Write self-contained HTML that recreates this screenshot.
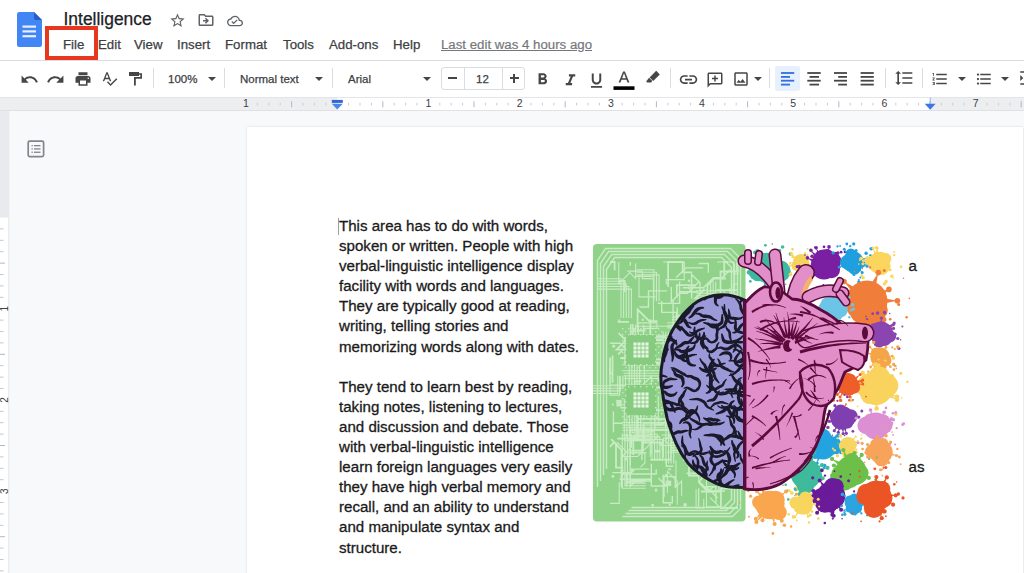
<!DOCTYPE html>
<html><head><meta charset="utf-8">
<style>
*{margin:0;padding:0;box-sizing:border-box}
html,body{width:1024px;height:573px;overflow:hidden;background:#f8f9fa;font-family:"Liberation Sans",sans-serif}
.abs{position:absolute}
#header{position:absolute;left:0;top:0;width:1024px;height:97px;background:#fff}
#sep1{position:absolute;left:0;top:60px;width:1024px;height:1px;background:#dadce0}
.title{position:absolute;left:63.5px;top:8.5px;font-size:17.45px;color:#202124;white-space:nowrap;-webkit-text-stroke:0.25px #202124}
.menu{position:absolute;top:37px;font-size:13.25px;color:#3c4043;white-space:nowrap;-webkit-text-stroke:0.25px #3c4043}
.lastedit{position:absolute;left:441px;top:37px;font-size:13.25px;color:#74777c;-webkit-text-stroke:0.2px #74777c;text-decoration:underline;white-space:nowrap}
.redbox{position:absolute;left:45px;top:26px;width:53px;height:34px;border:4px solid #e8371f}
.tb{position:absolute;top:72.5px;font-size:11.5px;color:#3c4043;white-space:nowrap;-webkit-text-stroke:0.25px #3c4043}
.vsep{position:absolute;top:68px;width:1px;height:20px;background:#dadce0}
#ruler{position:absolute;left:0;top:97px;width:1024px;height:14px;background:#e8eaed;border-top:1px solid #dadce0;border-bottom:1px solid #dadce0}
#page{position:absolute;left:247px;top:127px;width:776px;height:460px;background:#fff;box-shadow:0 0 2px rgba(0,0,0,.15)}
.body{position:absolute;left:339px;top:216px;font-size:15.1px;line-height:20.1px;color:#1a1a1a;white-space:nowrap;-webkit-text-stroke:0.3px #1a1a1a}
</style></head><body>
<div id="header"></div>
<div id="sep1"></div>

<!-- doc icon -->
<svg class="abs" style="left:17px;top:12px" width="25" height="35" viewBox="0 0 25 35">
<path d="M2.3 0H17L25 8V32.7Q25 35 22.7 35H2.3Q0 35 0 32.7V2.3Q0 0 2.3 0Z" fill="#4285f4"/>
<path d="M17 0L25 8H19Q17 8 17 6Z" fill="#2a5bc8"/>
<rect x="5.5" y="13.5" width="13.5" height="2.2" fill="#e8f0fe"/>
<rect x="5.5" y="18.3" width="13.5" height="2.2" fill="#e8f0fe"/>
<rect x="5.5" y="23.1" width="13.5" height="2.2" fill="#e8f0fe"/>
</svg>

<div class="title">Intelligence</div>
<div class="menu" style="left:63px">File</div>
<div class="menu" style="left:98px">Edit</div>
<div class="menu" style="left:134px">View</div>
<div class="menu" style="left:177px">Insert</div>
<div class="menu" style="left:225px">Format</div>
<div class="menu" style="left:283px">Tools</div>
<div class="menu" style="left:329px">Add-ons</div>
<div class="menu" style="left:393px">Help</div>
<div class="lastedit">Last edit was 4 hours ago</div>
<div class="redbox"></div>

<!-- title icons -->
<svg class="abs" style="left:169px;top:11.5px" width="17" height="17" viewBox="0 0 24 24"><path fill="#5f6368" d="M22 9.24l-7.19-.62L12 2 9.19 8.63 2 9.24l5.46 4.73L5.82 21 12 17.27 18.18 21l-1.63-7.03L22 9.24zM12 15.4l-3.76 2.27 1-4.28-3.32-2.88 4.38-.38L12 6.1l1.71 4.04 4.38.38-3.32 2.88 1 4.28L12 15.4z"/></svg>
<svg class="abs" style="left:197px;top:11px" width="18" height="18" viewBox="0 0 24 24"><path fill="#5f6368" d="M20 6h-8l-2-2H4c-1.1 0-1.99.9-1.99 2L2 18c0 1.1.9 2 2 2h16c1.1 0 2-.9 2-2V8c0-1.1-.9-2-2-2zm0 12H4V6h5.17l2 2H20v10zm-7.84-6H8v2h4.16l-1.59 1.59L11.99 17 16 13.01 11.99 9l-1.41 1.41L12.16 12z"/></svg>
<svg class="abs" style="left:227px;top:11.5px" width="16" height="18" viewBox="0 0 24 24"><path fill="#5f6368" d="M19.35 10.04C18.67 6.59 15.64 4 12 4 9.11 4 6.6 5.640 5.35 8.04 2.34 8.36 0 10.91 0 14c0 3.31 2.69 6 6 6h13c2.76 0 5-2.24 5-5 0-2.64-2.05-4.78-4.65-4.96zM19 18H6c-2.21 0-4-1.790-4-4 0-2.05 1.53-3.76 3.56-3.970l1.07-.11.5-.95C8.080 7.14 9.94 6 12 6c2.62 0 4.88 1.86 5.39 4.43l.3 1.5 1.53.11c1.56.1 2.78 1.41 2.78 2.96 0 1.65-1.35 3-3 3zm-9-3.82l-2.09-2.09L6.5 13.5 10 17l6.01-6.01-1.42-1.41z"/></svg>

<!-- toolbar -->
<svg class="abs" style="left:20px;top:70px" width="19" height="19" viewBox="0 0 24 24"><path fill="#444746" d="M12.5 8c-2.65 0-5.05.99-6.9 2.6L2 7v9h9l-3.62-3.62c1.39-1.16 3.16-1.88 5.120-1.88 3.54 0 6.55 2.31 7.6 5.5l2.37-.78C21.08 11.03 17.15 8 12.5 8z"/></svg>
<svg class="abs" style="left:46px;top:70px" width="19" height="19" viewBox="0 0 24 24"><path fill="#444746" d="M18.4 10.6C16.55 8.99 14.15 8 11.5 8c-4.65 0-8.58 3.03-9.96 7.22L3.9 16c1.05-3.19 4.05-5.5 7.6-5.5 1.95 0 3.73.72 5.12 1.88L13 16h9V7l-3.6 3.6z"/></svg>
<svg class="abs" style="left:73.5px;top:70px" width="18" height="18" viewBox="0 0 24 24"><path fill="#444746" d="M19 8H5c-1.66 0-3 1.34-3 3v6h4v4h12v-4h4v-6c0-1.66-1.340-3-3-3zm-3 11H8v-5h8v5zm3-7c-.55 0-1-.45-1-1s.45-1 1-1 1 .45 1 1-.45 1-1 1zm-1-9H6v4h12V3z"/></svg>
<svg class="abs" style="left:101px;top:70px" width="17" height="17" viewBox="0 0 24 24"><path fill="#444746" d="M12.45 16h2.09L9.43 3H7.57L2.46 16h2.09l1.12-3h5.64l1.14 3zm-6.02-5L8.5 5.48 10.57 11H6.43zm15.16.59l-8.09 8.09L9.83 16l-1.41 1.41 5.09 5.09L23 13l-1.41-1.41z"/></svg>
<svg class="abs" style="left:129px;top:72px" width="14" height="14" viewBox="0 0 14 14"><path fill="#444746" d="M0 0h10v1.2h3v5.5H6.8v6.9H5V5h6.3V2.8H10V4H0z"/></svg>
<div class="vsep" style="left:153px"></div>
<div class="tb" style="left:168px">100%</div>
<svg class="abs" style="left:208px;top:77px" width="8" height="4" viewBox="0 0 8 4"><path fill="#444746" d="M0 0h8L4 4z"/></svg>
<div class="vsep" style="left:224px"></div>
<div class="tb" style="left:240px">Normal text</div>
<svg class="abs" style="left:315px;top:77px" width="8" height="4" viewBox="0 0 8 4"><path fill="#444746" d="M0 0h8L4 4z"/></svg>
<div class="vsep" style="left:332px"></div>
<div class="tb" style="left:348px">Arial</div>
<svg class="abs" style="left:423px;top:77px" width="8" height="4" viewBox="0 0 8 4"><path fill="#444746" d="M0 0h8L4 4z"/></svg>
<div class="abs" style="left:441px;top:67px;width:84px;height:23px;border:1px solid #dadce0;border-radius:3px"></div>
<div class="abs" style="left:464px;top:68px;width:1px;height:21px;background:#dadce0"></div>
<div class="abs" style="left:502px;top:68px;width:1px;height:21px;background:#dadce0"></div>
<div class="abs" style="left:448px;top:77.3px;width:9.4px;height:2px;background:#444746"></div>
<div class="tb" style="left:476px;top:73px">12</div>
<div class="abs" style="left:509.5px;top:77.3px;width:9.4px;height:2px;background:#444746"></div>
<div class="abs" style="left:513.2px;top:73.6px;width:2px;height:9.4px;background:#444746"></div>
<svg class="abs" style="left:533px;top:70px" width="19" height="19" viewBox="0 0 24 24"><path fill="#444746" d="M15.6 10.79c.97-.67 1.65-1.77 1.65-2.79 0-2.26-1.75-4-4-4H7v14h7.04c2.09 0 3.71-1.7 3.71-3.79 0-1.52-.86-2.82-2.15-3.42zM10 6.5h3c.83 0 1.5.67 1.5 1.5s-.67 1.5-1.5 1.5h-3v-3zm3.5 9H10v-3h3.5c.83 0 1.5.67 1.5 1.5s-.67 1.5-1.5 1.5z"/></svg>
<svg class="abs" style="left:561px;top:70.5px" width="19" height="19" viewBox="0 0 24 24"><path fill="#444746" d="M10 4v3h2.21l-3.42 8H6v3h8v-3h-2.21l3.42-8H18V4z"/></svg>
<svg class="abs" style="left:587px;top:70.8px" width="19" height="19" viewBox="0 0 24 24"><path fill="#444746" d="M12 17c3.31 0 6-2.69 6-6V3h-2.5v8c0 1.93-1.57 3.5-3.5 3.5S8.5 12.93 8.5 11V3H6v8c0 3.31 2.69 6 6 6zm-7 2v2h14v-2H5z"/></svg>
<svg class="abs" style="left:613px;top:68px" width="22" height="23" viewBox="0 0 22 23"><path fill="#444746" d="M10.1 3.6h1.8l4.5 10.9h-1.9l-1-2.7H8.5l-1 2.7H5.6zM9.1 10.3h3.8L11 5.3z"/><rect x="0.5" y="18.3" width="21" height="3.6" fill="#000"/></svg>
<svg class="abs" style="left:645px;top:70px" width="16" height="13" viewBox="0 0 16 13"><path fill="#444746" d="M11.2 0.8l3.6 3.6-6.6 6.6-3.6-3.6zM4 7.8l3.3 3.3-1.2 1.3H2.2L1.2 11.4z"/></svg>
<div class="vsep" style="left:670px"></div>
<svg class="abs" style="left:678px;top:69px" width="21" height="21" viewBox="0 0 24 24"><path fill="#444746" d="M3.9 12c0-1.71 1.39-3.1 3.1-3.1h4V7H7c-2.76 0-5 2.24-5 5s2.24 5 5 5h4v-1.9H7c-1.71 0-3.1-1.39-3.1-3.1zM8 13h8v-2H8v2zm9-6h-4v1.9h4c1.71 0 3.1 1.39 3.1 3.1s-1.39 3.1-3.1 3.1h-4V17h4c2.76 0 5-2.24 5-5s-2.24-5-5-5z"/></svg>
<svg class="abs" style="left:706px;top:70.5px" width="18" height="18" viewBox="0 0 24 24"><path fill="#444746" d="M22 4c0-1.1-.9-2-2-2H4c-1.1 0-1.99.9-1.99 2L2 16c0 1.1.9 2 2 2h14l4 4-.01-18zM20 4v13.17L18.83 16H4V4h16zm-9 10h2v-3h3V9h-3V6h-2v3H8v2h3z" transform="translate(24 0) scale(-1 1)"/></svg>
<svg class="abs" style="left:732px;top:70px" width="18" height="18" viewBox="0 0 24 24"><path fill="#444746" d="M19 5v14H5V5h14m0-2H5c-1.1 0-2 .9-2 2v14c0 1.1.9 2 2 2h14c1.1 0 2-.9 2-2V5c0-1.1-.9-2-2-2zm-4.86 8.86l-3 3.87L9 13.14 6 17h12l-3.86-5.14z"/></svg>
<svg class="abs" style="left:754px;top:77px" width="8" height="4" viewBox="0 0 8 4"><path fill="#444746" d="M0 0h8L4 4z"/></svg>
<div class="vsep" style="left:769px"></div>
<div class="abs" style="left:775px;top:66px;width:25px;height:24.5px;background:#e8f0fe;border-radius:2px"></div>
<svg class="abs" style="left:770px;top:64px" width="110" height="28" viewBox="770 64 110 28">
<rect x="781" y="72.1" width="13.2" height="1.8" fill="#2f6fde"/>
<rect x="807.3" y="72.1" width="13.4" height="1.8" fill="#444746"/>
<rect x="834" y="72.1" width="13" height="1.8" fill="#444746"/>
<rect x="860.6" y="72.1" width="13.2" height="1.8" fill="#444746"/>
<rect x="781" y="76.0" width="9" height="1.8" fill="#2f6fde"/>
<rect x="809.5" y="76.0" width="9.5" height="1.8" fill="#444746"/>
<rect x="838.2" y="76.0" width="8.8" height="1.8" fill="#444746"/>
<rect x="860.6" y="76.0" width="13.2" height="1.8" fill="#444746"/>
<rect x="781" y="79.8" width="13.2" height="1.8" fill="#2f6fde"/>
<rect x="807.3" y="79.8" width="13.4" height="1.8" fill="#444746"/>
<rect x="834" y="79.8" width="13" height="1.8" fill="#444746"/>
<rect x="860.6" y="79.8" width="13.2" height="1.8" fill="#444746"/>
<rect x="781" y="83.7" width="9" height="1.8" fill="#2f6fde"/>
<rect x="809.5" y="83.7" width="9.5" height="1.8" fill="#444746"/>
<rect x="838.2" y="83.7" width="8.8" height="1.8" fill="#444746"/>
<rect x="860.6" y="83.7" width="13.2" height="1.8" fill="#444746"/>
</svg>
<div class="vsep" style="left:885px"></div>
<svg class="abs" style="left:894px;top:68px" width="20" height="20" viewBox="0 0 24 24"><path fill="#444746" d="M6 7h2.5L5 3.5 1.5 7H4v10H1.5L5 20.5 8.5 17H6V7zm4-2v2h12V5H10zm0 14h12v-2H10v2zm0-6h12v-2H10v2z"/></svg>
<div class="vsep" style="left:922px"></div>
<svg class="abs" style="left:931px;top:70px" width="18" height="18" viewBox="0 0 24 24"><path fill="#444746" d="M2 17h2v.5H3v1h1v.5H2v1h3v-4H2v1zm1-9h1V4H2v1h1v3zm-1 3h1.8L2 13.1v.9h3v-1H3.2L5 10.9V10H2v1zm5-6v2h14V5H7zm0 14h14v-2H7v2zm0-6h14v-2H7v2z"/></svg>
<svg class="abs" style="left:958px;top:77px" width="8" height="4" viewBox="0 0 8 4"><path fill="#444746" d="M0 0h8L4 4z"/></svg>
<svg class="abs" style="left:975px;top:70px" width="18" height="18" viewBox="0 0 24 24"><path fill="#444746" d="M4 10.5c-.83 0-1.5.67-1.5 1.5s.67 1.5 1.5 1.5 1.5-.67 1.5-1.5-.67-1.5-1.5-1.5zm0-6c-.83 0-1.5.67-1.5 1.5S3.17 7.5 4 7.5 5.5 6.83 5.5 6 4.830 4.5 4 4.5zm0 12c-.83 0-1.5.68-1.5 1.5s.68 1.5 1.5 1.5 1.5-.68 1.5-1.5-.67-1.5-1.5-1.5zM7 19h14v-2H7v2zm0-6h14v-2H7v2zm0-8v2h14V5H7z"/></svg>
<svg class="abs" style="left:1001px;top:77px" width="8" height="4" viewBox="0 0 8 4"><path fill="#444746" d="M0 0h8L4 4z"/></svg>
<svg class="abs" style="left:1018px;top:69px" width="18" height="18" viewBox="0 0 24 24"><path fill="#444746" d="M3 3h18v2H3zM3 19h18v2H3zM11 7h10v2H11zM11 11h10v2H11zM11 15h10v2H11zM3 8l4 4-4 4z"/></svg>


<svg class="abs" style="left:0;top:96px" width="1024" height="16" viewBox="0 96 1024 16">
<rect x="0" y="97" width="1024" height="14" fill="#eceef0"/>
<rect x="337.2" y="97.5" width="592.8" height="13" fill="#fff"/>
<rect x="0" y="97" width="1024" height="1" fill="#e3e5e8"/>
<rect x="0" y="110" width="1024" height="1" fill="#dfe1e5"/>
<text x="246.0" y="107.3" font-size="10.5" font-family="Liberation Sans" fill="#3c4043" text-anchor="middle" >1</text>
<rect x="256.9" y="102.8" width="1" height="2.6" fill="#c9ccd0"/>
<rect x="268.3" y="102.8" width="1" height="2.6" fill="#c9ccd0"/>
<rect x="279.7" y="102.8" width="1" height="2.6" fill="#c9ccd0"/>
<rect x="291.1" y="101.3" width="1" height="6" fill="#b4b8bd"/>
<rect x="302.5" y="102.8" width="1" height="2.6" fill="#c9ccd0"/>
<rect x="313.9" y="102.8" width="1" height="2.6" fill="#c9ccd0"/>
<rect x="325.3" y="102.8" width="1" height="2.6" fill="#c9ccd0"/>
<rect x="348.1" y="102.8" width="1" height="2.6" fill="#c9ccd0"/>
<rect x="359.5" y="102.8" width="1" height="2.6" fill="#c9ccd0"/>
<rect x="370.9" y="102.8" width="1" height="2.6" fill="#c9ccd0"/>
<rect x="382.3" y="101.3" width="1" height="6" fill="#b4b8bd"/>
<rect x="393.7" y="102.8" width="1" height="2.6" fill="#c9ccd0"/>
<rect x="405.1" y="102.8" width="1" height="2.6" fill="#c9ccd0"/>
<rect x="416.5" y="102.8" width="1" height="2.6" fill="#c9ccd0"/>
<text x="428.4" y="107.3" font-size="10.5" font-family="Liberation Sans" fill="#3c4043" text-anchor="middle" >1</text>
<rect x="439.3" y="102.8" width="1" height="2.6" fill="#c9ccd0"/>
<rect x="450.7" y="102.8" width="1" height="2.6" fill="#c9ccd0"/>
<rect x="462.1" y="102.8" width="1" height="2.6" fill="#c9ccd0"/>
<rect x="473.5" y="101.3" width="1" height="6" fill="#b4b8bd"/>
<rect x="484.9" y="102.8" width="1" height="2.6" fill="#c9ccd0"/>
<rect x="496.3" y="102.8" width="1" height="2.6" fill="#c9ccd0"/>
<rect x="507.7" y="102.8" width="1" height="2.6" fill="#c9ccd0"/>
<text x="519.6" y="107.3" font-size="10.5" font-family="Liberation Sans" fill="#3c4043" text-anchor="middle" >2</text>
<rect x="530.5" y="102.8" width="1" height="2.6" fill="#c9ccd0"/>
<rect x="541.9" y="102.8" width="1" height="2.6" fill="#c9ccd0"/>
<rect x="553.3" y="102.8" width="1" height="2.6" fill="#c9ccd0"/>
<rect x="564.7" y="101.3" width="1" height="6" fill="#b4b8bd"/>
<rect x="576.1" y="102.8" width="1" height="2.6" fill="#c9ccd0"/>
<rect x="587.5" y="102.8" width="1" height="2.6" fill="#c9ccd0"/>
<rect x="598.9" y="102.8" width="1" height="2.6" fill="#c9ccd0"/>
<text x="610.8" y="107.3" font-size="10.5" font-family="Liberation Sans" fill="#3c4043" text-anchor="middle" >3</text>
<rect x="621.7" y="102.8" width="1" height="2.6" fill="#c9ccd0"/>
<rect x="633.1" y="102.8" width="1" height="2.6" fill="#c9ccd0"/>
<rect x="644.5" y="102.8" width="1" height="2.6" fill="#c9ccd0"/>
<rect x="655.9" y="101.3" width="1" height="6" fill="#b4b8bd"/>
<rect x="667.3" y="102.8" width="1" height="2.6" fill="#c9ccd0"/>
<rect x="678.7" y="102.8" width="1" height="2.6" fill="#c9ccd0"/>
<rect x="690.1" y="102.8" width="1" height="2.6" fill="#c9ccd0"/>
<text x="702.0" y="107.3" font-size="10.5" font-family="Liberation Sans" fill="#3c4043" text-anchor="middle" >4</text>
<rect x="712.9" y="102.8" width="1" height="2.6" fill="#c9ccd0"/>
<rect x="724.3" y="102.8" width="1" height="2.6" fill="#c9ccd0"/>
<rect x="735.7" y="102.8" width="1" height="2.6" fill="#c9ccd0"/>
<rect x="747.1" y="101.3" width="1" height="6" fill="#b4b8bd"/>
<rect x="758.5" y="102.8" width="1" height="2.6" fill="#c9ccd0"/>
<rect x="769.9" y="102.8" width="1" height="2.6" fill="#c9ccd0"/>
<rect x="781.3" y="102.8" width="1" height="2.6" fill="#c9ccd0"/>
<text x="793.2" y="107.3" font-size="10.5" font-family="Liberation Sans" fill="#3c4043" text-anchor="middle" >5</text>
<rect x="804.1" y="102.8" width="1" height="2.6" fill="#c9ccd0"/>
<rect x="815.5" y="102.8" width="1" height="2.6" fill="#c9ccd0"/>
<rect x="826.9" y="102.8" width="1" height="2.6" fill="#c9ccd0"/>
<rect x="838.3" y="101.3" width="1" height="6" fill="#b4b8bd"/>
<rect x="849.7" y="102.8" width="1" height="2.6" fill="#c9ccd0"/>
<rect x="861.1" y="102.8" width="1" height="2.6" fill="#c9ccd0"/>
<rect x="872.5" y="102.8" width="1" height="2.6" fill="#c9ccd0"/>
<text x="884.4" y="107.3" font-size="10.5" font-family="Liberation Sans" fill="#3c4043" text-anchor="middle" >6</text>
<rect x="895.3" y="102.8" width="1" height="2.6" fill="#c9ccd0"/>
<rect x="906.7" y="102.8" width="1" height="2.6" fill="#c9ccd0"/>
<rect x="918.1" y="102.8" width="1" height="2.6" fill="#c9ccd0"/>
<rect x="929.5" y="101.3" width="1" height="6" fill="#b4b8bd"/>
<rect x="940.9" y="102.8" width="1" height="2.6" fill="#c9ccd0"/>
<rect x="952.3" y="102.8" width="1" height="2.6" fill="#c9ccd0"/>
<rect x="963.7" y="102.8" width="1" height="2.6" fill="#c9ccd0"/>
<text x="975.6" y="107.3" font-size="10.5" font-family="Liberation Sans" fill="#3c4043" text-anchor="middle" >7</text>
<rect x="986.5" y="102.8" width="1" height="2.6" fill="#c9ccd0"/>
<rect x="997.9" y="102.8" width="1" height="2.6" fill="#c9ccd0"/>
<rect x="1009.3" y="102.8" width="1" height="2.6" fill="#c9ccd0"/>
<rect x="1020.7" y="101.3" width="1" height="6" fill="#b4b8bd"/>
<rect x="929.7" y="97.5" width="1" height="7" fill="#8ab4f8"/>
<path d="M924.7 103.8H935.6L930.2 109.8Z" fill="#3b78e7"/>
<rect x="331.8" y="99.9" width="11" height="3" fill="#3367d6"/>
<path d="M331.8 103.7H342.8L337.3 109.5Z" fill="#4a86e8"/>
</svg>
<svg class="abs" style="left:0;top:111px" width="10" height="462" viewBox="0 111 10 462">
<rect x="0" y="111" width="8.5" height="462" fill="#fff"/>
<rect x="0" y="111" width="8.5" height="106.5" fill="#e8eaed"/>
<rect x="8.3" y="111" width="1" height="462" fill="#e3e5e8"/>
<rect x="0" y="228.4" width="3.5" height="1" fill="#c4c7cb"/>
<rect x="0" y="239.8" width="3.5" height="1" fill="#c4c7cb"/>
<rect x="0" y="251.2" width="3.5" height="1" fill="#c4c7cb"/>
<rect x="0" y="262.6" width="5" height="1" fill="#b4b8bd"/>
<rect x="0" y="274.0" width="3.5" height="1" fill="#c4c7cb"/>
<rect x="0" y="285.4" width="3.5" height="1" fill="#c4c7cb"/>
<rect x="0" y="296.8" width="3.5" height="1" fill="#c4c7cb"/>
<text x="0" y="308.7" font-size="10" font-family="Liberation Sans" fill="#3c4043" text-anchor="middle" transform="rotate(-90 5 308.7) translate(5 3.5)">1</text>
<rect x="0" y="319.6" width="3.5" height="1" fill="#c4c7cb"/>
<rect x="0" y="331.0" width="3.5" height="1" fill="#c4c7cb"/>
<rect x="0" y="342.4" width="3.5" height="1" fill="#c4c7cb"/>
<rect x="0" y="353.8" width="5" height="1" fill="#b4b8bd"/>
<rect x="0" y="365.2" width="3.5" height="1" fill="#c4c7cb"/>
<rect x="0" y="376.6" width="3.5" height="1" fill="#c4c7cb"/>
<rect x="0" y="388.0" width="3.5" height="1" fill="#c4c7cb"/>
<text x="0" y="399.9" font-size="10" font-family="Liberation Sans" fill="#3c4043" text-anchor="middle" transform="rotate(-90 5 399.9) translate(5 3.5)">2</text>
<rect x="0" y="410.8" width="3.5" height="1" fill="#c4c7cb"/>
<rect x="0" y="422.2" width="3.5" height="1" fill="#c4c7cb"/>
<rect x="0" y="433.6" width="3.5" height="1" fill="#c4c7cb"/>
<rect x="0" y="445.0" width="5" height="1" fill="#b4b8bd"/>
<rect x="0" y="456.4" width="3.5" height="1" fill="#c4c7cb"/>
<rect x="0" y="467.8" width="3.5" height="1" fill="#c4c7cb"/>
<rect x="0" y="479.2" width="3.5" height="1" fill="#c4c7cb"/>
<text x="0" y="491.1" font-size="10" font-family="Liberation Sans" fill="#3c4043" text-anchor="middle" transform="rotate(-90 5 491.1) translate(5 3.5)">3</text>
<rect x="0" y="502.0" width="3.5" height="1" fill="#c4c7cb"/>
<rect x="0" y="513.4" width="3.5" height="1" fill="#c4c7cb"/>
<rect x="0" y="524.8" width="3.5" height="1" fill="#c4c7cb"/>
<rect x="0" y="536.2" width="5" height="1" fill="#b4b8bd"/>
<rect x="0" y="547.6" width="3.5" height="1" fill="#c4c7cb"/>
<rect x="0" y="559.0" width="3.5" height="1" fill="#c4c7cb"/>
<rect x="0" y="570.4" width="3.5" height="1" fill="#c4c7cb"/>
</svg>
<svg class="abs" style="left:27px;top:140px" width="18" height="18" viewBox="0 0 18 18">
<rect x="1.2" y="1.2" width="15.4" height="15.4" rx="1.5" fill="none" stroke="#80868b" stroke-width="1.7"/>
<rect x="4.5" y="5" width="1.3" height="1.3" fill="#80868b"/><rect x="7" y="5" width="6.5" height="1.3" fill="#80868b"/>
<rect x="4.5" y="8.3" width="1.3" height="1.3" fill="#80868b"/><rect x="7" y="8.3" width="6.5" height="1.3" fill="#80868b"/>
<rect x="4.5" y="11.6" width="1.3" height="1.3" fill="#80868b"/><rect x="7" y="11.6" width="6.5" height="1.3" fill="#80868b"/>
</svg>
<div id="page"></div>

<!--IMG--><svg class="abs" style="left:585px;top:225px" width="330" height="315" viewBox="585 225 330 315">
<defs><clipPath id="bc"><rect x="593" y="244" width="152.5" height="277.5" rx="4"/></clipPath></defs>
<rect x="593" y="244" width="152.5" height="277.5" rx="4" fill="#90d28a"/>
<g clip-path="url(#bc)" stroke="#c9ecc4" fill="none" stroke-width="1.4">
<path d="M597.5 487.0 V260.5 L605.5 248.5 H730.5 L740.5 258.5 V508.5 L732.5 516.5 H622.5"/>
<path d="M600.5 481.0 V263.5 L608.5 251.5 H727.5 L737.5 261.5 V505.5 L729.5 513.5 H625.5"/>
<path d="M603.5 475.0 V266.5 L611.5 254.5 H724.5 L734.5 264.5 V502.5 L726.5 510.5 H628.5"/>
<path d="M606.5 469.0 V269.5 L614.5 257.5 H721.5 L731.5 267.5 V499.5 L723.5 507.5 H631.5"/>
<path d="M653.9 301.2 V269.7 H636.7" stroke-width="1.1"/>
<path d="M656.5 301.2 V272.3 H636.7" stroke-width="1.1"/>
<path d="M659.1 301.2 V274.9 H636.7" stroke-width="1.1"/>
<path d="M724.2 316.5 V290.7 H696.2" stroke-width="1.1"/>
<path d="M726.8 316.5 V293.3 H696.2" stroke-width="1.1"/>
<path d="M729.4 316.5 V295.9 H696.2" stroke-width="1.1"/>
<path d="M732.0 316.5 V298.5 H696.2" stroke-width="1.1"/>
<path d="M734.6 316.5 V301.1 H696.2" stroke-width="1.1"/>
<path d="M665.9 463.4 V422.5 H622.5" stroke-width="1.1"/>
<path d="M668.5 463.4 V425.1 H622.5" stroke-width="1.1"/>
<path d="M671.1 463.4 V427.7 H622.5" stroke-width="1.1"/>
<path d="M673.7 463.4 V430.3 H622.5" stroke-width="1.1"/>
<path d="M621.0 318.1 V278.7 H597.3" stroke-width="1.1"/>
<path d="M623.6 318.1 V281.3 H597.3" stroke-width="1.1"/>
<path d="M626.2 318.1 V283.9 H597.3" stroke-width="1.1"/>
<path d="M628.8 318.1 V286.5 H597.3" stroke-width="1.1"/>
<path d="M631.4 318.1 V289.1 H597.3" stroke-width="1.1"/>
<path d="M652.0 460.9 V429.1 H633.9" stroke-width="1.1"/>
<path d="M654.6 460.9 V431.7 H633.9" stroke-width="1.1"/>
<path d="M657.2 460.9 V434.3 H633.9" stroke-width="1.1"/>
<path d="M659.8 460.9 V436.9 H633.9" stroke-width="1.1"/>
<path d="M662.4 460.9 V439.5 H633.9" stroke-width="1.1"/>
<path d="M700.5 400.4 V450.4 H670.6" stroke-width="1.1"/>
<path d="M703.1 400.4 V447.8 H670.6" stroke-width="1.1"/>
<path d="M705.7 400.4 V445.2 H670.6" stroke-width="1.1"/>
<path d="M708.3 400.4 V442.6 H670.6" stroke-width="1.1"/>
<path d="M685.3 373.8 V327.3 H707.7" stroke-width="1.1"/>
<path d="M687.9 373.8 V329.9 H707.7" stroke-width="1.1"/>
<path d="M690.5 373.8 V332.5 H707.7" stroke-width="1.1"/>
<path d="M624.8 337.1 V365.0 H666.1" stroke-width="1.1"/>
<path d="M627.4 337.1 V362.4 H666.1" stroke-width="1.1"/>
<path d="M630.0 337.1 V359.8 H666.1" stroke-width="1.1"/>
<path d="M629.2 365.3 V399.3 H648.7" stroke-width="1.1"/>
<path d="M631.8 365.3 V396.7 H648.7" stroke-width="1.1"/>
<path d="M634.4 365.3 V394.1 H648.7" stroke-width="1.1"/>
<path d="M637.0 365.3 V391.5 H648.7" stroke-width="1.1"/>
<path d="M639.6 365.3 V388.9 H648.7" stroke-width="1.1"/>
<path d="M624.3 398.9 V440.7 H649.5" stroke-width="1.1"/>
<path d="M626.9 398.9 V438.1 H649.5" stroke-width="1.1"/>
<path d="M629.5 398.9 V435.5 H649.5" stroke-width="1.1"/>
<path d="M632.1 398.9 V432.9 H649.5" stroke-width="1.1"/>
<path d="M634.7 398.9 V430.3 H649.5" stroke-width="1.1"/>
<path d="M710.6 281.5 V327.9 H667.3" stroke-width="1.1"/>
<path d="M713.2 281.5 V325.3 H667.3" stroke-width="1.1"/>
<path d="M715.8 281.5 V322.7 H667.3" stroke-width="1.1"/>
<path d="M622.3 433.4 V488.3 H645.8" stroke-width="1.1"/>
<path d="M624.9 433.4 V485.7 H645.8" stroke-width="1.1"/>
<path d="M627.5 433.4 V483.1 H645.8" stroke-width="1.1"/>
<path d="M630.1 433.4 V480.5 H645.8" stroke-width="1.1"/>
<path d="M617.7 375.8 V393.5 H584.4" stroke-width="1.1"/>
<path d="M620.3 375.8 V390.9 H584.4" stroke-width="1.1"/>
<path d="M622.9 375.8 V388.3 H584.4" stroke-width="1.1"/>
<path d="M625.5 375.8 V385.7 H584.4" stroke-width="1.1"/>
<path d="M630.5 324.4 V343.1 H673.0" stroke-width="1.1"/>
<path d="M633.1 324.4 V340.5 H673.0" stroke-width="1.1"/>
<path d="M635.7 324.4 V337.9 H673.0" stroke-width="1.1"/>
<path d="M638.3 324.4 V335.3 H673.0" stroke-width="1.1"/>
<path d="M663.2 331.7 V378.5 H623.6" stroke-width="1.1"/>
<path d="M665.8 331.7 V375.9 H623.6" stroke-width="1.1"/>
<path d="M668.4 331.7 V373.3 H623.6" stroke-width="1.1"/>
<path d="M671.0 331.7 V370.7 H623.6" stroke-width="1.1"/>
<path d="M696.9 356.3 V334.5 H677.4" stroke-width="1.1"/>
<path d="M699.5 356.3 V337.1 H677.4" stroke-width="1.1"/>
<path d="M702.1 356.3 V339.7 H677.4" stroke-width="1.1"/>
<path d="M704.7 356.3 V342.3 H677.4" stroke-width="1.1"/>
<path d="M707.3 356.3 V344.9 H677.4" stroke-width="1.1"/>
<path d="M641.4 381.3 L634.8 381.3 L634.8 408.2 L634.8 393.2" stroke-width="1.8"/>
<path d="M712.5 358.5 L727.9 358.5 L706.2 358.5 L706.2 346.4 L692.0 346.4 L692.0 365.1" stroke-width="1.1"/>
<path d="M722.2 413.1 L722.2 431.5 L722.2 407.1 L729.9 414.9" stroke-width="1.1"/>
<path d="M630.2 446.4 L630.2 430.0 L636.8 430.0 L636.8 407.8 L620.3 407.8" stroke-width="1.4"/>
<path d="M677.3 485.4 L677.3 504.7 L677.3 481.4 L667.4 471.4 L667.4 493.0" stroke-width="1.1"/>
<path d="M711.6 378.2 L711.6 392.9 L723.5 381.0 L711.0 381.0" stroke-width="1.4"/>
<path d="M637.8 415.5 L637.8 438.7 L617.4 438.7" stroke-width="1.8"/>
<path d="M706.5 379.6 L706.5 385.7 L716.3 395.5 L716.3 374.1" stroke-width="1.1"/>
<path d="M737.1 268.8 L738.0 273.9 L733.6 273.9 L733.6 262.0 L726.1 262.0 L716.9 262.0" stroke-width="1.1"/>
<path d="M708.2 342.2 L712.7 346.7 L712.7 370.5 L707.7 365.5 L697.5 355.3 L712.6 355.3" stroke-width="1.1"/>
<path d="M682.1 342.2 L682.1 317.0 L673.1 317.0 L673.1 334.5 L673.1 319.8 L673.1 299.2" stroke-width="1.4"/>
<path d="M676.0 460.6 L676.0 486.8 L681.6 481.1 L681.6 495.7" stroke-width="1.1"/>
<path d="M696.6 367.4 L696.6 341.8 L703.1 341.8 L691.4 330.1" stroke-width="1.4"/>
<path d="M723.5 302.0 L738.0 302.0 L738.0 310.7 L738.0 310.7" stroke-width="1.8"/>
<path d="M669.8 435.0 L683.0 435.0 L661.5 435.0 L670.4 435.0 L665.0 440.4 L674.4 449.8" stroke-width="1.1"/>
<path d="M679.6 388.6 L679.6 377.9 L679.6 363.7 L664.2 363.7 L659.5 359.1 L647.4 359.1" stroke-width="1.4"/>
<path d="M737.3 364.8 L737.3 348.1 L715.8 348.1 L708.2 348.1 L721.8 348.1" stroke-width="1.1"/>
<path d="M648.5 385.0 L626.6 385.0 L610.0 385.0 L610.0 368.7" stroke-width="1.1"/>
<path d="M729.8 288.1 L729.8 315.4 L708.1 315.4 L696.8 315.4 L677.7 315.4 L689.5 315.4" stroke-width="1.1"/>
<path d="M622.6 469.0 L622.6 474.0 L634.7 474.0 L656.2 474.0 L656.2 469.2" stroke-width="1.4"/>
<path d="M639.5 307.0 L648.5 307.0 L648.5 290.9 L667.2 290.9 L656.1 290.9" stroke-width="1.4"/>
<path d="M650.3 319.3 L650.3 341.6 L650.3 349.2 L650.3 344.2" stroke-width="1.8"/>
<path d="M724.4 416.3 L714.4 406.3 L708.0 406.3 L697.2 406.3" stroke-width="1.4"/>
<path d="M682.4 416.4 L682.4 401.5 L666.5 401.5 L675.0 401.5" stroke-width="1.1"/>
<path d="M718.6 319.8 L731.5 319.8 L738.0 319.8 L722.9 319.8" stroke-width="1.8"/>
<path d="M637.0 409.5 L652.2 409.5 L657.3 409.5 L640.8 409.5 L640.8 430.5" stroke-width="1.4"/>
<path d="M670.5 376.7 L678.9 368.3 L683.1 364.2" stroke-width="1.8"/>
<path d="M734.0 372.6 L728.6 372.6 L738.0 372.6 L738.0 372.6 L738.0 356.6" stroke-width="1.4"/>
<path d="M661.7 301.1 L661.7 312.4 L672.4 312.4 L676.5 312.4 L676.5 319.3 L686.2 329.0" stroke-width="1.4"/>
<path d="M620.2 358.0 L637.8 358.0 L631.5 364.2" stroke-width="1.8"/>
<path d="M729.9 323.3 L729.9 331.9 L738.0 331.9 L729.0 322.8 L738.0 322.8" stroke-width="1.1"/>
<path d="M693.2 332.4 L684.8 340.8 L684.8 352.0" stroke-width="1.8"/>
<path d="M705.1 422.6 L705.1 438.2 L705.1 430.2 L692.1 430.2 L700.5 438.6 L692.9 431.0" stroke-width="1.1"/>
<path d="M623.4 346.1 L632.1 346.1 L632.1 324.1" stroke-width="1.4"/>
<path d="M660.2 445.5 L677.8 445.5 L677.8 452.5 L677.8 446.3" stroke-width="1.1"/>
<path d="M660.5 420.9 L649.7 410.1 L671.1 410.1 L671.1 396.7 L681.7 407.3 L673.7 407.3" stroke-width="1.1"/>
<path d="M677.8 429.8 L673.8 429.8 L658.2 429.8 L642.9 429.8 L642.9 450.6 L633.5 450.6" stroke-width="1.8"/>
<path d="M636.2 326.2 L658.1 326.2 L673.7 326.2" stroke-width="1.1"/>
<path d="M671.9 319.8 L688.6 319.8 L681.1 319.8 L671.9 328.9" stroke-width="1.1"/>
<path d="M696.1 489.6 L696.1 508.0 L703.7 508.0 L703.7 499.1" stroke-width="1.1"/>
<path d="M651.3 463.7 L651.3 486.0 L666.3 486.0 L658.4 478.1" stroke-width="1.4"/>
<path d="M618.8 267.8 L618.8 262.0 L618.8 283.6 L630.3 272.1" stroke-width="1.1"/>
<path d="M694.2 391.1 L713.3 391.1 L705.8 383.6 L695.4 383.6 L690.5 388.6 L709.3 388.6" stroke-width="1.4"/>
<path d="M623.1 435.5 L630.5 435.5 L635.1 435.5 L635.1 440.5" stroke-width="1.1"/>
<path d="M670.5 459.6 L650.3 459.6 L660.3 459.6" stroke-width="1.8"/>
<path d="M617.5 445.6 L611.1 439.2 L616.0 444.1 L616.0 467.7 L623.3 467.7" stroke-width="1.8"/>
<path d="M650.2 432.3 L650.2 456.9 L650.2 440.6 L641.8 440.6" stroke-width="1.1"/>
<path d="M693.8 380.5 L713.7 380.5 L707.6 374.4 L729.4 374.4 L724.0 379.8" stroke-width="1.4"/>
<path d="M690.2 427.8 L690.2 438.9 L690.2 449.0" stroke-width="1.4"/>
<path d="M637.1 322.9 L657.0 322.9 L657.0 328.4 L643.9 328.4" stroke-width="1.1"/>
<path d="M693.9 286.7 L698.7 281.9 L687.4 293.2 L679.9 293.2 L671.3 301.9 L671.3 287.1" stroke-width="1.4"/>
<path d="M709.6 425.5 L717.6 425.5 L712.8 425.5" stroke-width="1.4"/>
<path d="M616.8 442.1 L627.4 452.7 L632.8 452.7 L646.6 452.7" stroke-width="1.1"/>
<path d="M663.4 457.8 L663.4 438.1 L674.8 438.1 L686.3 438.1" stroke-width="1.1"/>
<path d="M651.4 401.4 L651.4 376.6 L644.4 383.5 L644.4 356.9 L644.4 342.8" stroke-width="1.1"/>
<path d="M663.2 479.2 L663.2 474.8 L663.2 481.0 L663.2 502.7 L672.3 502.7 L672.3 496.0" stroke-width="1.4"/>
<path d="M706.9 456.9 L685.4 456.9 L685.4 438.3 L685.4 412.6" stroke-width="1.8"/>
<path d="M698.7 481.2 L698.7 457.3 L694.0 457.3 L699.2 452.1" stroke-width="1.1"/>
<path d="M643.1 440.3 L627.1 440.3 L641.9 440.3 L641.9 459.9" stroke-width="1.4"/>
<path d="M685.4 366.7 L685.4 375.0 L697.8 375.0 L697.8 399.1 L690.6 391.9" stroke-width="1.4"/>
<path d="M666.3 284.6 L666.3 279.6 L684.3 279.6 L684.3 262.0 L675.0 262.0 L663.1 262.0" stroke-width="1.1"/>
<path d="M735.7 383.0 L735.7 377.4 L738.0 377.4 L738.0 371.2" stroke-width="1.4"/>
<path d="M675.3 488.3 L675.3 476.6 L664.0 476.6 L664.0 497.0" stroke-width="1.4"/>
<path d="M633.3 455.1 L633.3 435.8 L647.3 435.8" stroke-width="1.8"/>
<path d="M698.8 482.4 L707.8 491.5 L722.2 491.5 L710.2 491.5 L700.9 491.5" stroke-width="1.8"/>
<path d="M644.0 419.3 L644.0 409.9 L655.5 409.9 L649.1 409.9 L644.7 409.9" stroke-width="1.1"/>
<path d="M683.5 336.7 L683.5 354.7 L683.5 341.9 L678.2 336.7 L678.2 343.0" stroke-width="1.8"/>
<path d="M630.2 425.7 L630.2 452.9 L644.9 452.9 L644.9 462.9 L640.6 467.2" stroke-width="1.1"/>
<path d="M641.9 276.4 L635.4 276.4 L654.0 276.4" stroke-width="1.1"/>
<path d="M676.1 277.7 L685.9 267.9 L703.3 267.9" stroke-width="1.4"/>
<path d="M622.1 423.3 L613.4 423.3 L613.4 411.2 L613.4 432.3" stroke-width="1.4"/>
<path d="M692.1 429.1 L686.6 429.1 L686.6 418.8 L665.6 418.8 L665.6 427.4" stroke-width="1.4"/>
<path d="M653.4 320.8 L653.4 296.3 L653.4 278.6 L642.3 278.6 L642.3 271.1 L627.2 271.1" stroke-width="1.1"/>
<path d="M655.5 296.9 L639.0 296.9 L639.0 275.2" stroke-width="1.1"/>
<path d="M719.9 449.4 L709.4 460.0 L701.7 460.0 L682.9 460.0" stroke-width="1.8"/>
<path d="M691.7 379.4 L682.4 379.4 L686.7 379.4 L691.6 379.4" stroke-width="1.4"/>
<path d="M726.7 451.2 L717.8 460.2 L707.5 460.2 L707.5 439.0 L716.1 430.4 L716.1 419.5" stroke-width="1.1"/>
<path d="M612.5 382.7 L612.5 355.5 L612.5 373.4 L610.0 373.4 L610.0 373.4 L610.0 357.6" stroke-width="1.8"/>
<path d="M682.7 287.7 L703.4 287.7 L713.4 277.8 L722.1 277.8 L730.1 269.7" stroke-width="1.4"/>
<path d="M628.0 408.1 L641.4 408.1 L649.0 400.5" stroke-width="1.4"/>
<path d="M667.3 452.3 L682.9 452.3 L682.9 441.8 L682.9 420.5" stroke-width="1.1"/>
<path d="M703.1 410.3 L724.3 410.3 L717.4 410.3 L717.4 397.1 L727.7 407.4" stroke-width="1.4"/>
<path d="M636.7 418.9 L649.1 418.9 L665.6 418.9" stroke-width="1.8"/>
<path d="M735.6 334.9 L738.0 334.9 L738.0 334.9" stroke-width="1.8"/>
<path d="M706.4 365.6 L706.4 345.3 L706.4 359.7 L686.3 359.7" stroke-width="1.1"/>
<path d="M710.6 437.4 L723.3 437.4 L736.6 437.4 L736.6 412.0" stroke-width="1.4"/>
<path d="M710.1 357.6 L714.9 352.8 L701.6 352.8 L715.3 352.8 L715.3 333.4 L723.5 341.6" stroke-width="1.1"/>
<path d="M736.8 307.2 L736.8 326.5 L738.0 326.5" stroke-width="1.1"/>
<path d="M621.5 487.2 L621.5 477.8 L621.5 449.9 L613.8 442.3 L610.0 446.8" stroke-width="1.8"/>
<path d="M682.8 317.6 L695.2 317.6 L677.2 317.6 L677.2 307.2" stroke-width="1.4"/>
<path d="M698.6 503.8 L698.6 508.0 L698.6 508.0 L698.6 488.2" stroke-width="1.4"/>
<path d="M631.2 336.6 L649.4 336.6 L664.8 336.6 L657.0 336.6 L665.5 336.6 L646.1 336.6" stroke-width="1.1"/>
<path d="M709.8 347.2 L728.1 347.2 L712.0 347.2 L722.3 336.9" stroke-width="1.4"/>
<path d="M699.3 392.6 L699.3 375.3 L680.4 375.3 L680.4 359.6 L670.8 369.2 L663.9 369.2" stroke-width="1.4"/>
<path d="M671.0 400.4 L678.0 393.4 L693.4 393.4 L677.1 393.4 L670.5 400.0" stroke-width="1.4"/>
<path d="M707.4 297.5 L707.4 285.4 L714.3 278.5 L725.9 278.5" stroke-width="1.8"/>
<path d="M618.6 333.1 L625.9 340.4 L616.6 349.6 L622.9 349.6 L618.2 354.3" stroke-width="1.8"/>
<path d="M681.8 361.9 L677.7 361.9 L692.7 361.9" stroke-width="1.8"/>
<path d="M619.6 385.2 L619.6 376.1 L619.6 395.1 L610.0 395.1 L610.0 369.2 L610.0 394.1" stroke-width="1.1"/>
<path d="M711.1 400.3 L705.6 405.8 L692.7 405.8 L692.7 383.2 L692.7 397.9" stroke-width="1.1"/>
<path d="M697.7 408.1 L697.7 425.3 L705.5 425.3 L693.8 425.3" stroke-width="1.1"/>
<path d="M698.2 291.9 L691.8 291.9 L679.7 291.9" stroke-width="1.8"/>
<path d="M635.6 274.3 L635.6 263.3 L635.6 278.4 L629.6 272.3" stroke-width="1.1"/>
<path d="M619.6 479.3 L636.8 479.3 L651.7 479.3" stroke-width="1.4"/>
<path d="M658.3 403.4 L658.3 396.0 L658.3 422.9 L670.9 422.9 L670.9 449.5 L670.9 460.6" stroke-width="1.1"/>
<path d="M690.4 422.1 L680.5 412.3 L680.5 430.4 L686.5 436.3 L686.5 412.9" stroke-width="1.4"/>
<path d="M698.8 341.1 L698.8 330.2 L689.8 330.2 L700.3 340.6 L700.3 363.8" stroke-width="1.1"/>
<path d="M711.2 439.7 L695.1 439.7 L695.1 413.4 L695.1 390.4" stroke-width="1.4"/>
<path d="M680.1 393.9 L680.1 380.3 L680.1 405.6 L680.1 421.7 L672.6 421.7" stroke-width="1.1"/>
<path d="M713.5 333.3 L713.5 323.4 L705.6 331.3 L705.6 323.6 L705.6 334.3" stroke-width="1.8"/>
<path d="M614.6 270.3 L614.6 262.0 L614.6 268.3 L614.6 262.0 L610.0 262.0 L610.0 262.0" stroke-width="1.8"/>
<path d="M658.6 435.6 L647.3 446.8 L637.6 456.5 L622.1 456.5 L631.5 447.1 L631.5 434.2" stroke-width="1.1"/>
<path d="M737.0 316.5 L725.4 305.0 L729.8 300.6" stroke-width="1.1"/>
<path d="M630.2 447.7 L630.2 465.9 L630.2 450.6 L636.5 450.6" stroke-width="1.4"/>
<path d="M659.8 370.6 L671.0 359.4 L671.0 333.2 L691.0 333.2" stroke-width="1.1"/>
<path d="M710.1 497.7 L719.1 506.7 L706.5 506.7 L706.5 494.7 L706.5 473.6 L706.5 459.1" stroke-width="1.1"/>
<path d="M645.6 363.3 L655.6 363.3 L661.6 363.3 L661.6 370.0" stroke-width="1.8"/>
<path d="M619.2 482.2 L619.2 489.0 L619.2 503.4 L610.0 503.4" stroke-width="1.1"/>
<path d="M661.2 364.2 L667.8 364.2 L667.8 387.6 L655.8 387.6" stroke-width="1.8"/>
<path d="M648.1 350.6 L642.3 344.8 L634.2 336.7" stroke-width="1.1"/>
<path d="M687.7 465.9 L687.7 457.0 L687.7 439.0 L671.2 439.0 L671.2 422.5 L690.4 422.5" stroke-width="1.4"/>
<path d="M623.4 362.7 L631.9 362.7 L631.9 367.6 L631.9 355.1 L620.1 343.3 L610.0 343.3" stroke-width="1.4"/>
<path d="M710.2 475.6 L689.0 475.6 L689.0 458.8" stroke-width="1.8"/>
<path d="M628.9 321.9 L621.9 321.9 L617.6 321.9" stroke-width="1.8"/>
<path d="M705.1 326.3 L705.1 332.8 L695.3 342.5 L709.9 342.5 L709.9 335.6 L709.9 318.6" stroke-width="1.1"/>
<path d="M720.5 298.2 L720.5 271.5 L737.0 271.5 L737.0 262.0 L738.0 272.2 L738.0 272.2" stroke-width="1.8"/>
<path d="M713.4 486.5 L708.9 491.0 L724.9 491.0 L711.3 491.0 L718.9 491.0 L718.9 483.6" stroke-width="1.4"/>
<path d="M709.8 492.5 L698.8 481.4 L707.7 472.4" stroke-width="1.8"/>
<path d="M624.7 291.9 L624.7 281.0 L618.5 281.0" stroke-width="1.8"/>
<path d="M732.8 488.6 L720.9 488.6 L720.9 508.0 L720.9 508.0 L738.0 508.0" stroke-width="1.8"/>
<path d="M699.5 316.5 L711.8 316.5 L711.8 331.8 L701.8 331.8 L723.3 331.8 L730.2 331.8" stroke-width="1.1"/>
<path d="M652.8 342.1 L643.5 342.1 L643.5 324.8 L643.5 339.4 L662.5 339.4" stroke-width="1.4"/>
<path d="M704.7 288.9 L695.2 298.3 L701.8 298.3 L720.5 298.3" stroke-width="1.8"/>
<path d="M624.0 472.6 L612.5 472.6 L630.3 472.6 L630.3 486.2 L635.5 481.0 L652.0 481.0" stroke-width="1.4"/>
<path d="M703.1 334.1 L703.1 353.6 L714.0 353.6 L732.4 353.6 L732.4 371.6 L738.0 371.6" stroke-width="1.8"/>
<path d="M717.6 497.9 L706.5 486.7 L715.9 486.7 L715.9 503.6" stroke-width="1.4"/>
<path d="M677.2 389.2 L681.9 389.2 L681.9 416.0 L681.9 409.6 L697.6 409.6 L692.4 414.9" stroke-width="1.4"/>
<path d="M662.6 450.8 L662.6 442.7 L643.7 442.7 L643.7 422.9 L662.5 422.9" stroke-width="1.8"/>
<path d="M723.9 365.5 L723.9 349.4 L718.8 349.4 L718.8 336.9" stroke-width="1.8"/>
<path d="M692.2 272.4 L682.7 272.4 L682.7 262.0 L668.1 262.0 L668.1 262.0 L668.1 286.9" stroke-width="1.8"/>
<path d="M676.8 297.4 L676.8 289.9 L676.8 285.2 L695.6 285.2" stroke-width="1.8"/>
<path d="M666.3 458.9 L666.3 466.3 L673.3 466.3" stroke-width="1.4"/>
<path d="M691.2 473.4 L706.4 473.4 L686.4 473.4" stroke-width="1.8"/>
<path d="M708.3 272.8 L708.3 263.5 L698.6 263.5" stroke-width="1.4"/>
<path d="M650.3 410.2 L654.8 405.7 L654.8 430.7 L654.8 424.6 L662.2 424.6 L668.5 418.3" stroke-width="1.4"/>
<path d="M679.3 356.9 L679.3 342.7 L687.7 334.3 L687.7 344.0 L677.5 344.0 L671.9 344.0" stroke-width="1.4"/>
<path d="M680.7 455.7 L680.7 447.9 L691.4 447.9 L697.1 442.2 L713.3 442.2 L725.2 454.2" stroke-width="1.8"/>
<path d="M643.0 411.6 L626.8 411.6 L644.1 411.6 L644.1 391.8" stroke-width="1.8"/>
<path d="M630.3 265.7 L630.3 262.0 L630.3 262.0" stroke-width="1.4"/>
<path d="M713.5 448.6 L719.0 448.6 L728.1 448.6 L728.1 471.2" stroke-width="1.8"/>
<path d="M720.5 294.5 L736.8 294.5 L736.8 320.0 L738.0 320.0 L731.2 313.2" stroke-width="1.4"/>
<path d="M626.5 486.5 L626.5 472.8 L626.5 481.6 L643.8 481.6" stroke-width="1.8"/>
<path d="M651.2 419.0 L651.2 401.3 L651.2 427.6 L651.2 454.0" stroke-width="1.1"/>
<path d="M717.1 453.0 L706.1 442.0 L706.1 419.0 L723.6 419.0 L738.0 419.0" stroke-width="1.8"/>
<path d="M716.4 331.2 L728.4 331.2 L738.0 331.2" stroke-width="1.8"/>
<path d="M700.0 367.4 L700.0 362.3 L700.0 370.5 L686.2 370.5" stroke-width="1.1"/>
<path d="M733.4 303.3 L733.4 284.1 L738.0 284.1 L733.9 284.1 L733.9 262.0" stroke-width="1.4"/>
<path d="M700.0 294.8 L700.0 282.8 L691.6 274.4 L691.6 298.6" stroke-width="1.4"/>
<path d="M716.7 290.2 L724.4 290.2 L733.9 290.2 L738.0 290.2 L738.0 290.2" stroke-width="1.8"/>
<path d="M657.7 303.4 L679.6 303.4 L679.6 281.4" stroke-width="1.4"/>
<path d="M735.5 400.7 L735.5 416.4 L735.5 420.6" stroke-width="1.1"/>
<path d="M693.2 416.4 L693.2 409.1 L712.3 409.1 L691.0 409.1 L691.0 402.6" stroke-width="1.8"/>
<path d="M716.6 444.6 L726.4 444.6 L738.0 444.6 L733.3 444.6 L733.3 470.3" stroke-width="1.1"/>
<path d="M674.3 384.9 L665.5 376.1 L665.5 368.7 L665.5 374.9" stroke-width="1.1"/>
<path d="M719.2 379.9 L719.2 375.2 L719.2 382.6 L705.9 382.6" stroke-width="1.4"/>
<path d="M724.2 277.4 L724.2 262.0 L728.3 262.0" stroke-width="1.8"/>
<path d="M697.1 401.6 L710.4 401.6 L710.4 374.2 L701.4 383.2 L701.4 400.7 L701.4 416.3" stroke-width="1.8"/>
<path d="M629.2 474.9 L635.0 469.1 L649.0 469.1" stroke-width="1.4"/>
<path d="M657.4 321.1 L649.3 321.1 L643.6 315.5 L637.6 309.4 L637.6 330.5 L645.7 330.5" stroke-width="1.8"/>
<path d="M699.8 443.0 L709.2 433.5 L700.8 425.1" stroke-width="1.4"/>
</g>
<g clip-path="url(#bc)" fill="#c6eac1">
<circle cx="716.6" cy="358.4" r="2.2"/>
<circle cx="682.9" cy="452.6" r="1.9"/>
<circle cx="619.3" cy="320.3" r="1.0"/>
<circle cx="686.9" cy="314.4" r="1.8"/>
<rect x="665.7" y="480.6" width="5.5" height="5.4"/>
<circle cx="727.6" cy="476.2" r="1.9"/>
<rect x="655.0" y="449.9" width="5.3" height="2.7"/>
<rect x="659.0" y="443.4" width="4.9" height="2.3"/>
<rect x="688.1" y="286.5" width="5.2" height="2.7"/>
<circle cx="728.6" cy="428.1" r="1.2"/>
<rect x="668.3" y="468.2" width="2.5" height="2.1"/>
<circle cx="625.9" cy="459.0" r="1.7"/>
<circle cx="648.5" cy="431.0" r="1.2"/>
<rect x="722.3" y="394.5" width="5.2" height="7.7"/>
<circle cx="613.7" cy="346.2" r="1.6"/>
<circle cx="722.0" cy="458.9" r="1.2"/>
<circle cx="715.1" cy="429.2" r="1.6"/>
<circle cx="631.9" cy="469.9" r="2.0"/>
<circle cx="689.0" cy="280.7" r="1.3"/>
<circle cx="724.6" cy="406.9" r="1.2"/>
<rect x="657.5" y="377.1" width="3.6" height="4.1"/>
<circle cx="612.8" cy="404.5" r="1.0"/>
<circle cx="669.9" cy="504.7" r="1.2"/>
<circle cx="696.5" cy="329.1" r="1.6"/>
<rect x="645.0" y="402.0" width="5.8" height="8.0"/>
<rect x="616.3" y="399.9" width="5.5" height="6.6"/>
<circle cx="691.8" cy="418.1" r="1.3"/>
<rect x="712.2" y="476.7" width="4.7" height="3.8"/>
<rect x="708.2" y="443.9" width="4.5" height="4.1"/>
<circle cx="681.4" cy="361.9" r="1.4"/>
<circle cx="652.7" cy="505.2" r="1.4"/>
<circle cx="642.7" cy="319.8" r="1.2"/>
<circle cx="612.9" cy="476.3" r="1.5"/>
<circle cx="683.7" cy="336.4" r="1.1"/>
<rect x="650.0" y="337.9" width="4.2" height="7.6"/>
<rect x="654.9" y="488.6" width="2.3" height="3.1"/>
<circle cx="685.1" cy="504.9" r="1.9"/>
<circle cx="666.0" cy="475.6" r="1.6"/>
<circle cx="725.3" cy="329.9" r="1.0"/>
<rect x="632.7" y="327.9" width="2.9" height="4.4"/>
</g>
<rect x="626" y="335" width="30" height="30" fill="#86cb80"/>
<rect x="633" y="342" width="16" height="16" fill="#e6f6e3"/>
<line x1="633" y1="342" x2="649" y2="342" stroke="#86cb80" stroke-width="0.9"/>
<line x1="633" y1="342" x2="633" y2="358" stroke="#86cb80" stroke-width="0.9"/>
<line x1="633" y1="346" x2="649" y2="346" stroke="#86cb80" stroke-width="0.9"/>
<line x1="637" y1="342" x2="637" y2="358" stroke="#86cb80" stroke-width="0.9"/>
<line x1="633" y1="350" x2="649" y2="350" stroke="#86cb80" stroke-width="0.9"/>
<line x1="641" y1="342" x2="641" y2="358" stroke="#86cb80" stroke-width="0.9"/>
<line x1="633" y1="354" x2="649" y2="354" stroke="#86cb80" stroke-width="0.9"/>
<line x1="645" y1="342" x2="645" y2="358" stroke="#86cb80" stroke-width="0.9"/>
<line x1="633" y1="358" x2="649" y2="358" stroke="#86cb80" stroke-width="0.9"/>
<line x1="649" y1="342" x2="649" y2="358" stroke="#86cb80" stroke-width="0.9"/>
<rect x="626" y="385" width="30" height="30" fill="#86cb80"/>
<rect x="633" y="392" width="16" height="16" fill="#e6f6e3"/>
<line x1="633" y1="392" x2="649" y2="392" stroke="#86cb80" stroke-width="0.9"/>
<line x1="633" y1="392" x2="633" y2="408" stroke="#86cb80" stroke-width="0.9"/>
<line x1="633" y1="396" x2="649" y2="396" stroke="#86cb80" stroke-width="0.9"/>
<line x1="637" y1="392" x2="637" y2="408" stroke="#86cb80" stroke-width="0.9"/>
<line x1="633" y1="400" x2="649" y2="400" stroke="#86cb80" stroke-width="0.9"/>
<line x1="641" y1="392" x2="641" y2="408" stroke="#86cb80" stroke-width="0.9"/>
<line x1="633" y1="404" x2="649" y2="404" stroke="#86cb80" stroke-width="0.9"/>
<line x1="645" y1="392" x2="645" y2="408" stroke="#86cb80" stroke-width="0.9"/>
<line x1="633" y1="408" x2="649" y2="408" stroke="#86cb80" stroke-width="0.9"/>
<line x1="649" y1="392" x2="649" y2="408" stroke="#86cb80" stroke-width="0.9"/>
<g fill="#c6eac1">
<rect x="622" y="328" width="1.4" height="1.4"/>
<rect x="622" y="334" width="1.4" height="1.4"/>
<rect x="622" y="340" width="1.4" height="1.4"/>
<rect x="622" y="346" width="1.4" height="1.4"/>
<rect x="622" y="352" width="1.4" height="1.4"/>
<rect x="622" y="358" width="1.4" height="1.4"/>
<rect x="622" y="364" width="1.4" height="1.4"/>
<rect x="622" y="370" width="1.4" height="1.4"/>
<rect x="625" y="331" width="1.4" height="1.4"/>
<rect x="625" y="337" width="1.4" height="1.4"/>
<rect x="625" y="343" width="1.4" height="1.4"/>
<rect x="625" y="349" width="1.4" height="1.4"/>
<rect x="625" y="355" width="1.4" height="1.4"/>
<rect x="625" y="361" width="1.4" height="1.4"/>
<rect x="625" y="367" width="1.4" height="1.4"/>
<rect x="628" y="328" width="1.4" height="1.4"/>
<rect x="628" y="334" width="1.4" height="1.4"/>
<rect x="628" y="364" width="1.4" height="1.4"/>
<rect x="628" y="370" width="1.4" height="1.4"/>
<rect x="631" y="331" width="1.4" height="1.4"/>
<rect x="631" y="367" width="1.4" height="1.4"/>
<rect x="634" y="328" width="1.4" height="1.4"/>
<rect x="634" y="334" width="1.4" height="1.4"/>
<rect x="634" y="364" width="1.4" height="1.4"/>
<rect x="634" y="370" width="1.4" height="1.4"/>
<rect x="637" y="331" width="1.4" height="1.4"/>
<rect x="637" y="367" width="1.4" height="1.4"/>
<rect x="640" y="328" width="1.4" height="1.4"/>
<rect x="640" y="334" width="1.4" height="1.4"/>
<rect x="640" y="364" width="1.4" height="1.4"/>
<rect x="640" y="370" width="1.4" height="1.4"/>
<rect x="643" y="331" width="1.4" height="1.4"/>
<rect x="643" y="367" width="1.4" height="1.4"/>
<rect x="646" y="328" width="1.4" height="1.4"/>
<rect x="646" y="334" width="1.4" height="1.4"/>
<rect x="646" y="364" width="1.4" height="1.4"/>
<rect x="646" y="370" width="1.4" height="1.4"/>
<rect x="649" y="331" width="1.4" height="1.4"/>
<rect x="649" y="367" width="1.4" height="1.4"/>
<rect x="652" y="328" width="1.4" height="1.4"/>
<rect x="652" y="334" width="1.4" height="1.4"/>
<rect x="652" y="364" width="1.4" height="1.4"/>
<rect x="652" y="370" width="1.4" height="1.4"/>
<rect x="655" y="331" width="1.4" height="1.4"/>
<rect x="655" y="337" width="1.4" height="1.4"/>
<rect x="655" y="343" width="1.4" height="1.4"/>
<rect x="655" y="349" width="1.4" height="1.4"/>
<rect x="655" y="355" width="1.4" height="1.4"/>
<rect x="655" y="361" width="1.4" height="1.4"/>
<rect x="655" y="367" width="1.4" height="1.4"/>
<rect x="658" y="328" width="1.4" height="1.4"/>
<rect x="658" y="334" width="1.4" height="1.4"/>
<rect x="658" y="340" width="1.4" height="1.4"/>
<rect x="658" y="346" width="1.4" height="1.4"/>
<rect x="658" y="352" width="1.4" height="1.4"/>
<rect x="658" y="358" width="1.4" height="1.4"/>
<rect x="658" y="364" width="1.4" height="1.4"/>
<rect x="658" y="370" width="1.4" height="1.4"/>
<rect x="661" y="331" width="1.4" height="1.4"/>
<rect x="661" y="337" width="1.4" height="1.4"/>
<rect x="661" y="343" width="1.4" height="1.4"/>
<rect x="661" y="349" width="1.4" height="1.4"/>
<rect x="661" y="355" width="1.4" height="1.4"/>
<rect x="661" y="361" width="1.4" height="1.4"/>
<rect x="661" y="367" width="1.4" height="1.4"/>
<rect x="622" y="380" width="1.4" height="1.4"/>
<rect x="622" y="386" width="1.4" height="1.4"/>
<rect x="622" y="392" width="1.4" height="1.4"/>
<rect x="622" y="398" width="1.4" height="1.4"/>
<rect x="622" y="404" width="1.4" height="1.4"/>
<rect x="622" y="410" width="1.4" height="1.4"/>
<rect x="622" y="416" width="1.4" height="1.4"/>
<rect x="622" y="422" width="1.4" height="1.4"/>
<rect x="625" y="383" width="1.4" height="1.4"/>
<rect x="625" y="389" width="1.4" height="1.4"/>
<rect x="625" y="395" width="1.4" height="1.4"/>
<rect x="625" y="401" width="1.4" height="1.4"/>
<rect x="625" y="407" width="1.4" height="1.4"/>
<rect x="625" y="413" width="1.4" height="1.4"/>
<rect x="625" y="419" width="1.4" height="1.4"/>
<rect x="628" y="380" width="1.4" height="1.4"/>
<rect x="628" y="386" width="1.4" height="1.4"/>
<rect x="628" y="416" width="1.4" height="1.4"/>
<rect x="628" y="422" width="1.4" height="1.4"/>
<rect x="631" y="383" width="1.4" height="1.4"/>
<rect x="631" y="419" width="1.4" height="1.4"/>
<rect x="634" y="380" width="1.4" height="1.4"/>
<rect x="634" y="386" width="1.4" height="1.4"/>
<rect x="634" y="416" width="1.4" height="1.4"/>
<rect x="634" y="422" width="1.4" height="1.4"/>
<rect x="637" y="383" width="1.4" height="1.4"/>
<rect x="637" y="419" width="1.4" height="1.4"/>
<rect x="640" y="380" width="1.4" height="1.4"/>
<rect x="640" y="386" width="1.4" height="1.4"/>
<rect x="640" y="416" width="1.4" height="1.4"/>
<rect x="640" y="422" width="1.4" height="1.4"/>
<rect x="643" y="383" width="1.4" height="1.4"/>
<rect x="643" y="419" width="1.4" height="1.4"/>
<rect x="646" y="380" width="1.4" height="1.4"/>
<rect x="646" y="386" width="1.4" height="1.4"/>
<rect x="646" y="416" width="1.4" height="1.4"/>
<rect x="646" y="422" width="1.4" height="1.4"/>
<rect x="649" y="383" width="1.4" height="1.4"/>
<rect x="649" y="419" width="1.4" height="1.4"/>
<rect x="652" y="380" width="1.4" height="1.4"/>
<rect x="652" y="386" width="1.4" height="1.4"/>
<rect x="652" y="416" width="1.4" height="1.4"/>
<rect x="652" y="422" width="1.4" height="1.4"/>
<rect x="655" y="383" width="1.4" height="1.4"/>
<rect x="655" y="389" width="1.4" height="1.4"/>
<rect x="655" y="395" width="1.4" height="1.4"/>
<rect x="655" y="401" width="1.4" height="1.4"/>
<rect x="655" y="407" width="1.4" height="1.4"/>
<rect x="655" y="413" width="1.4" height="1.4"/>
<rect x="655" y="419" width="1.4" height="1.4"/>
<rect x="658" y="380" width="1.4" height="1.4"/>
<rect x="658" y="386" width="1.4" height="1.4"/>
<rect x="658" y="392" width="1.4" height="1.4"/>
<rect x="658" y="398" width="1.4" height="1.4"/>
<rect x="658" y="404" width="1.4" height="1.4"/>
<rect x="658" y="410" width="1.4" height="1.4"/>
<rect x="658" y="416" width="1.4" height="1.4"/>
<rect x="658" y="422" width="1.4" height="1.4"/>
<rect x="661" y="383" width="1.4" height="1.4"/>
<rect x="661" y="389" width="1.4" height="1.4"/>
<rect x="661" y="395" width="1.4" height="1.4"/>
<rect x="661" y="401" width="1.4" height="1.4"/>
<rect x="661" y="407" width="1.4" height="1.4"/>
<rect x="661" y="413" width="1.4" height="1.4"/>
<rect x="661" y="419" width="1.4" height="1.4"/>
</g>
<g fill="#3fb8a0">
<circle cx="768" cy="268" r="15.2"/>
<circle cx="758.7" cy="270.9" r="10.4"/>
<circle cx="758.8" cy="270.0" r="8.9"/>
<circle cx="771.8" cy="276.7" r="9.1"/>
<circle cx="769.8" cy="261.4" r="7.6"/>
<circle cx="777.5" cy="274.1" r="9.3"/>
<circle cx="780.0" cy="271.2" r="10.6"/>
<circle cx="762.3" cy="259.7" r="7.0"/>
<path d="M778.4 271.3 L788.2 269.9 L778.9 266.7Z"/>
<circle cx="788.2" cy="269.9" r="2.1"/>
<path d="M777.1 274.1 L784.9 274.6 L778.8 269.8Z"/>
<circle cx="784.9" cy="274.6" r="2.1"/>
<path d="M766.2 278.8 L768.9 285.1 L770.9 278.6Z"/>
<circle cx="768.9" cy="285.1" r="2.1"/>
<path d="M757.0 268.1 L748.8 272.4 L758.1 272.7Z"/>
<circle cx="748.8" cy="272.4" r="2.1"/>
<path d="M775.8 260.3 L779.1 251.1 L771.9 257.8Z"/>
<circle cx="779.1" cy="251.1" r="2.1"/>
<path d="M763.0 258.3 L755.2 252.5 L759.4 261.2Z"/>
<circle cx="755.2" cy="252.5" r="2.1"/>
<path d="M764.4 257.7 L757.6 251.1 L760.4 260.1Z"/>
<circle cx="757.6" cy="251.1" r="2.1"/>
<path d="M763.8 278.1 L763.9 290.8 L768.4 279.0Z"/>
<circle cx="763.9" cy="290.8" r="2.1"/>
<circle cx="798.4" cy="267.2" r="1.5"/>
<circle cx="758.5" cy="289.9" r="1.0"/>
<circle cx="794.8" cy="280.7" r="1.1"/>
<circle cx="782.6" cy="247.0" r="1.8"/>
<circle cx="780.3" cy="250.5" r="0.9"/>
<circle cx="790.4" cy="253.9" r="1.8"/>
<circle cx="750.3" cy="281.3" r="1.4"/>
<circle cx="772.3" cy="244.1" r="0.8"/>
<circle cx="752.3" cy="295.6" r="1.5"/>
<circle cx="785.7" cy="284.2" r="0.8"/>
<circle cx="795.9" cy="279.0" r="0.9"/>
<circle cx="743.6" cy="258.5" r="0.9"/>
<circle cx="765.4" cy="245.3" r="1.4"/>
</g>
<g fill="#f6d35a">
<circle cx="801" cy="262" r="8.0"/>
<circle cx="804.5" cy="265.1" r="3.8"/>
<circle cx="800.2" cy="268.5" r="5.2"/>
<circle cx="798.9" cy="267.9" r="3.8"/>
<circle cx="796.2" cy="265.8" r="4.8"/>
<circle cx="806.3" cy="265.9" r="3.8"/>
<circle cx="800.7" cy="267.9" r="4.1"/>
<circle cx="800.0" cy="265.4" r="3.5"/>
<path d="M796.7 258.1 L792.5 257.1 L795.5 260.2Z"/>
<circle cx="792.5" cy="257.1" r="1.1"/>
<path d="M797.2 257.6 L792.8 255.9 L795.7 259.6Z"/>
<circle cx="792.8" cy="255.9" r="1.1"/>
<path d="M795.2 262.5 L789.4 265.5 L795.9 264.8Z"/>
<circle cx="789.4" cy="265.5" r="1.1"/>
<path d="M795.2 261.4 L790.2 263.1 L795.5 263.8Z"/>
<circle cx="790.2" cy="263.1" r="1.1"/>
<path d="M805.7 258.6 L807.4 254.9 L803.9 257.0Z"/>
<circle cx="807.4" cy="254.9" r="1.1"/>
<path d="M803.2 267.4 L807.8 271.9 L805.2 266.0Z"/>
<circle cx="807.8" cy="271.9" r="1.1"/>
<path d="M804.5 257.3 L805.1 253.1 L802.2 256.3Z"/>
<circle cx="805.1" cy="253.1" r="1.1"/>
<path d="M802.0 267.7 L805.2 272.6 L804.2 266.8Z"/>
<circle cx="805.2" cy="272.6" r="1.1"/>
<circle cx="812.6" cy="257.4" r="1.7"/>
<circle cx="811.9" cy="252.0" r="1.2"/>
<circle cx="810.2" cy="269.0" r="1.8"/>
<circle cx="802.1" cy="277.3" r="1.0"/>
<circle cx="807.6" cy="248.8" r="1.0"/>
<circle cx="808.0" cy="275.8" r="0.8"/>
<circle cx="803.0" cy="276.4" r="1.6"/>
<circle cx="791.3" cy="253.5" r="1.7"/>
<circle cx="804.3" cy="273.0" r="1.0"/>
<circle cx="790.0" cy="265.9" r="0.9"/>
<circle cx="791.1" cy="272.7" r="0.8"/>
<circle cx="790.4" cy="274.5" r="1.8"/>
<circle cx="792.6" cy="249.3" r="1.3"/>
</g>
<g fill="#7a1fa2">
<circle cx="824" cy="266" r="13.4"/>
<circle cx="827.6" cy="270.4" r="5.6"/>
<circle cx="831.9" cy="261.0" r="9.3"/>
<circle cx="832.9" cy="267.2" r="7.4"/>
<circle cx="823.1" cy="258.8" r="9.4"/>
<circle cx="831.6" cy="269.9" r="8.4"/>
<circle cx="831.8" cy="260.4" r="8.3"/>
<circle cx="826.8" cy="255.8" r="6.9"/>
<path d="M822.1 256.5 L816.1 247.7 L818.4 258.1Z"/>
<circle cx="816.1" cy="247.7" r="1.8"/>
<path d="M832.0 260.6 L835.9 253.5 L829.0 257.7Z"/>
<circle cx="835.9" cy="253.5" r="1.8"/>
<path d="M828.4 257.4 L829.0 246.9 L824.4 256.3Z"/>
<circle cx="829.0" cy="246.9" r="1.8"/>
<path d="M816.4 260.0 L807.5 257.9 L814.6 263.7Z"/>
<circle cx="807.5" cy="257.9" r="1.8"/>
<path d="M815.6 270.9 L810.6 278.2 L818.4 273.9Z"/>
<circle cx="810.6" cy="278.2" r="1.8"/>
<path d="M818.0 258.4 L812.1 256.3 L815.4 261.6Z"/>
<circle cx="812.1" cy="256.3" r="1.8"/>
<path d="M819.5 257.4 L810.9 250.3 L816.4 260.1Z"/>
<circle cx="810.9" cy="250.3" r="1.8"/>
<path d="M832.3 261.0 L837.8 253.0 L829.5 258.0Z"/>
<circle cx="837.8" cy="253.0" r="1.8"/>
<circle cx="804.2" cy="282.7" r="1.3"/>
<circle cx="799.0" cy="275.8" r="0.8"/>
<circle cx="824.0" cy="246.8" r="1.4"/>
<circle cx="803.1" cy="268.5" r="1.5"/>
<circle cx="799.3" cy="266.4" r="1.7"/>
<circle cx="823.3" cy="285.0" r="1.0"/>
<circle cx="814.9" cy="247.3" r="0.9"/>
<circle cx="844.9" cy="252.0" r="1.2"/>
<circle cx="841.1" cy="252.2" r="1.4"/>
<circle cx="831.3" cy="287.8" r="1.6"/>
<circle cx="847.4" cy="252.0" r="1.1"/>
<circle cx="805.0" cy="255.1" r="0.8"/>
<circle cx="797.2" cy="266.6" r="1.6"/>
</g>
<g fill="#1f9fe0">
<circle cx="853" cy="262" r="10.7"/>
<circle cx="850.9" cy="253.7" r="5.3"/>
<circle cx="856.1" cy="267.6" r="5.3"/>
<circle cx="854.4" cy="268.1" r="6.4"/>
<circle cx="847.2" cy="262.2" r="7.1"/>
<circle cx="859.4" cy="261.3" r="4.6"/>
<circle cx="861.1" cy="263.6" r="4.5"/>
<circle cx="851.2" cy="255.3" r="5.4"/>
<path d="M856.5 255.1 L856.1 250.4 L853.4 254.3Z"/>
<circle cx="856.1" cy="250.4" r="1.5"/>
<path d="M856.7 268.8 L862.2 272.5 L859.2 266.6Z"/>
<circle cx="862.2" cy="272.5" r="1.5"/>
<path d="M860.2 264.8 L868.4 264.4 L860.7 261.6Z"/>
<circle cx="868.4" cy="264.4" r="1.5"/>
<path d="M852.0 269.7 L854.0 274.6 L855.2 269.4Z"/>
<circle cx="854.0" cy="274.6" r="1.5"/>
<path d="M859.8 265.8 L867.1 266.3 L860.7 262.6Z"/>
<circle cx="867.1" cy="266.3" r="1.5"/>
<path d="M845.3 262.9 L839.1 266.9 L846.4 266.0Z"/>
<circle cx="839.1" cy="266.9" r="1.5"/>
<path d="M850.1 254.8 L844.3 249.2 L847.4 256.7Z"/>
<circle cx="844.3" cy="249.2" r="1.5"/>
<path d="M860.7 261.6 L867.5 258.1 L859.9 258.5Z"/>
<circle cx="867.5" cy="258.1" r="1.5"/>
<circle cx="858.9" cy="279.8" r="0.9"/>
<circle cx="871.6" cy="263.3" r="1.5"/>
<circle cx="860.4" cy="277.5" r="1.1"/>
<circle cx="846.8" cy="244.0" r="1.4"/>
<circle cx="853.7" cy="243.9" r="1.6"/>
<circle cx="866.1" cy="253.2" r="1.7"/>
<circle cx="850.2" cy="246.1" r="1.2"/>
<circle cx="837.5" cy="246.4" r="1.1"/>
<circle cx="833.2" cy="252.9" r="1.6"/>
<circle cx="870.5" cy="255.6" r="1.4"/>
<circle cx="858.8" cy="281.8" r="1.6"/>
<circle cx="840.1" cy="246.0" r="0.9"/>
<circle cx="871.2" cy="248.8" r="1.8"/>
</g>
<g fill="#fbd55e">
<circle cx="879" cy="263" r="10.7"/>
<circle cx="871.3" cy="261.2" r="5.4"/>
<circle cx="885.9" cy="258.6" r="5.5"/>
<circle cx="884.5" cy="266.2" r="6.1"/>
<circle cx="879.7" cy="256.5" r="4.5"/>
<circle cx="880.7" cy="258.6" r="6.9"/>
<circle cx="881.7" cy="268.2" r="6.9"/>
<circle cx="882.2" cy="266.9" r="6.0"/>
<path d="M879.4 255.3 L876.4 247.5 L876.1 255.8Z"/>
<circle cx="876.4" cy="247.5" r="1.5"/>
<path d="M877.7 255.4 L873.0 248.0 L874.7 256.6Z"/>
<circle cx="873.0" cy="248.0" r="1.5"/>
<path d="M871.4 261.7 L862.9 263.8 L871.5 265.0Z"/>
<circle cx="862.9" cy="263.8" r="1.5"/>
<path d="M884.6 268.3 L890.1 269.7 L886.3 265.5Z"/>
<circle cx="890.1" cy="269.7" r="1.5"/>
<path d="M871.8 260.1 L865.9 260.8 L871.3 263.4Z"/>
<circle cx="865.9" cy="260.8" r="1.5"/>
<path d="M879.6 255.3 L877.0 248.3 L876.4 255.7Z"/>
<circle cx="877.0" cy="248.3" r="1.5"/>
<path d="M871.8 260.3 L863.5 260.8 L871.3 263.5Z"/>
<circle cx="863.5" cy="260.8" r="1.5"/>
<path d="M872.6 258.7 L866.6 258.1 L871.4 261.7Z"/>
<circle cx="866.6" cy="258.1" r="1.5"/>
<circle cx="863.2" cy="277.6" r="1.7"/>
<circle cx="884.6" cy="283.8" r="1.8"/>
<circle cx="859.8" cy="260.1" r="0.9"/>
<circle cx="860.6" cy="258.8" r="1.4"/>
<circle cx="901.1" cy="266.9" r="1.3"/>
<circle cx="861.8" cy="275.4" r="1.3"/>
<circle cx="858.7" cy="264.1" r="0.8"/>
<circle cx="861.3" cy="258.6" r="1.8"/>
<circle cx="894.2" cy="255.1" r="1.2"/>
<circle cx="891.8" cy="276.2" r="1.6"/>
<circle cx="894.2" cy="252.0" r="1.0"/>
<circle cx="886.1" cy="281.5" r="1.7"/>
<circle cx="893.4" cy="278.3" r="0.7"/>
</g>
<g fill="#f07e3a">
<circle cx="867" cy="301" r="20.5"/>
<circle cx="870.6" cy="310.7" r="12.6"/>
<circle cx="862.0" cy="311.3" r="12.2"/>
<circle cx="878.6" cy="310.0" r="9.2"/>
<circle cx="856.5" cy="300.3" r="9.6"/>
<circle cx="855.1" cy="298.7" r="10.7"/>
<circle cx="855.9" cy="307.7" r="9.4"/>
<circle cx="870.9" cy="314.2" r="12.3"/>
<path d="M853.3 295.2 L837.4 295.4 L852.2 301.4Z"/>
<circle cx="837.4" cy="295.4" r="2.8"/>
<path d="M858.0 289.2 L844.0 281.5 L853.9 294.0Z"/>
<circle cx="844.0" cy="281.5" r="2.8"/>
<path d="M865.5 315.7 L870.2 330.0 L871.7 315.1Z"/>
<circle cx="870.2" cy="330.0" r="2.8"/>
<path d="M875.3 288.7 L878.3 272.6 L869.5 286.4Z"/>
<circle cx="878.3" cy="272.6" r="2.8"/>
<path d="M858.3 313.0 L856.7 324.4 L864.0 315.5Z"/>
<circle cx="856.7" cy="324.4" r="2.8"/>
<path d="M881.3 297.0 L888.9 289.4 L878.4 291.5Z"/>
<circle cx="888.9" cy="289.4" r="2.8"/>
<path d="M881.5 304.0 L897.4 300.7 L881.5 297.7Z"/>
<circle cx="897.4" cy="300.7" r="2.8"/>
<path d="M874.3 313.9 L883.6 319.6 L879.0 309.7Z"/>
<circle cx="883.6" cy="319.6" r="2.8"/>
<circle cx="862.2" cy="268.6" r="0.8"/>
<circle cx="884.3" cy="270.5" r="1.6"/>
<circle cx="891.5" cy="325.8" r="1.5"/>
<circle cx="898.7" cy="304.6" r="1.5"/>
<circle cx="903.5" cy="278.3" r="0.8"/>
<circle cx="827.1" cy="299.6" r="1.3"/>
<circle cx="854.5" cy="271.8" r="0.8"/>
<circle cx="890.2" cy="319.3" r="1.3"/>
<circle cx="829.9" cy="297.5" r="0.9"/>
<circle cx="879.8" cy="330.3" r="1.6"/>
<circle cx="909.3" cy="298.4" r="0.8"/>
<circle cx="906.6" cy="317.2" r="1.2"/>
<circle cx="870.1" cy="267.4" r="1.2"/>
</g>
<g fill="#6cc5e6">
<circle cx="832" cy="309" r="11.6"/>
<circle cx="825.2" cy="308.3" r="6.8"/>
<circle cx="840.1" cy="309.7" r="7.7"/>
<circle cx="834.9" cy="315.3" r="7.3"/>
<circle cx="827.3" cy="312.2" r="5.3"/>
<circle cx="827.2" cy="308.6" r="7.8"/>
<circle cx="834.6" cy="301.3" r="7.7"/>
<circle cx="827.4" cy="304.1" r="6.8"/>
<path d="M823.9 307.0 L814.3 308.5 L823.8 310.6Z"/>
<circle cx="814.3" cy="308.5" r="1.6"/>
<path d="M836.4 301.9 L836.8 295.6 L833.1 300.7Z"/>
<circle cx="836.8" cy="295.6" r="1.6"/>
<path d="M839.9 306.2 L846.0 300.3 L838.0 303.2Z"/>
<circle cx="846.0" cy="300.3" r="1.6"/>
<path d="M835.2 301.2 L834.9 292.4 L831.7 300.6Z"/>
<circle cx="834.9" cy="292.4" r="1.6"/>
<path d="M824.2 312.1 L817.7 318.6 L826.2 315.0Z"/>
<circle cx="817.7" cy="318.6" r="1.6"/>
<path d="M839.2 304.7 L843.9 297.8 L836.7 302.1Z"/>
<circle cx="843.9" cy="297.8" r="1.6"/>
<path d="M834.7 301.1 L833.8 292.5 L831.1 300.7Z"/>
<circle cx="833.8" cy="292.5" r="1.6"/>
<path d="M824.2 312.1 L818.4 318.2 L826.2 315.0Z"/>
<circle cx="818.4" cy="318.2" r="1.6"/>
<circle cx="849.3" cy="317.2" r="1.2"/>
<circle cx="851.2" cy="310.3" r="1.4"/>
<circle cx="819.0" cy="296.2" r="1.7"/>
<circle cx="822.4" cy="292.5" r="1.4"/>
<circle cx="813.2" cy="300.2" r="1.1"/>
<circle cx="853.6" cy="309.0" r="1.5"/>
<circle cx="833.8" cy="284.7" r="0.7"/>
<circle cx="815.2" cy="294.1" r="1.0"/>
<circle cx="818.3" cy="318.7" r="0.9"/>
<circle cx="819.8" cy="321.1" r="1.0"/>
<circle cx="849.3" cy="297.3" r="1.3"/>
<circle cx="852.6" cy="304.7" r="1.8"/>
<circle cx="817.1" cy="291.5" r="0.8"/>
</g>
<g fill="#8b45b0">
<circle cx="881" cy="333" r="11.6"/>
<circle cx="874.1" cy="328.2" r="4.9"/>
<circle cx="886.0" cy="330.6" r="6.4"/>
<circle cx="884.5" cy="339.2" r="6.9"/>
<circle cx="889.7" cy="336.3" r="6.2"/>
<circle cx="873.5" cy="331.7" r="6.0"/>
<circle cx="879.2" cy="340.7" r="6.7"/>
<circle cx="879.3" cy="341.0" r="5.8"/>
<path d="M889.0 335.5 L895.1 334.2 L889.3 332.0Z"/>
<circle cx="895.1" cy="334.2" r="1.6"/>
<path d="M888.4 336.9 L894.2 336.6 L889.4 333.5Z"/>
<circle cx="894.2" cy="336.6" r="1.6"/>
<path d="M883.0 324.9 L881.4 318.2 L879.5 324.8Z"/>
<circle cx="881.4" cy="318.2" r="1.6"/>
<path d="M888.6 329.5 L894.2 323.1 L886.5 326.7Z"/>
<circle cx="894.2" cy="323.1" r="1.6"/>
<path d="M888.2 337.2 L897.8 338.5 L889.3 333.9Z"/>
<circle cx="897.8" cy="338.5" r="1.6"/>
<path d="M889.3 331.9 L893.5 328.4 L888.1 328.5Z"/>
<circle cx="893.5" cy="328.4" r="1.6"/>
<path d="M888.8 329.9 L893.5 324.6 L886.8 326.9Z"/>
<circle cx="893.5" cy="324.6" r="1.6"/>
<path d="M872.6 332.4 L863.6 335.5 L873.1 335.9Z"/>
<circle cx="863.6" cy="335.5" r="1.6"/>
<circle cx="881.8" cy="353.7" r="1.7"/>
<circle cx="877.6" cy="313.1" r="1.8"/>
<circle cx="889.7" cy="313.5" r="0.8"/>
<circle cx="866.7" cy="318.8" r="0.9"/>
<circle cx="900.6" cy="339.7" r="0.8"/>
<circle cx="860.5" cy="340.7" r="1.2"/>
<circle cx="879.4" cy="354.1" r="1.2"/>
<circle cx="884.6" cy="312.6" r="1.8"/>
<circle cx="902.4" cy="326.4" r="1.0"/>
<circle cx="898.9" cy="348.5" r="1.6"/>
<circle cx="867.3" cy="319.3" r="1.0"/>
<circle cx="872.7" cy="313.7" r="1.4"/>
<circle cx="865.9" cy="316.3" r="0.9"/>
</g>
<g fill="#f4a54a">
<circle cx="880" cy="357" r="9.8"/>
<circle cx="880.1" cy="365.0" r="6.7"/>
<circle cx="883.0" cy="354.1" r="4.2"/>
<circle cx="879.2" cy="362.7" r="5.8"/>
<circle cx="885.0" cy="360.7" r="4.3"/>
<circle cx="885.8" cy="360.5" r="5.6"/>
<circle cx="876.2" cy="352.9" r="5.4"/>
<circle cx="881.3" cy="362.3" r="6.2"/>
<path d="M884.9 351.9 L886.0 347.4 L882.4 350.3Z"/>
<circle cx="886.0" cy="347.4" r="1.4"/>
<path d="M884.0 362.8 L890.4 366.7 L886.1 360.6Z"/>
<circle cx="890.4" cy="366.7" r="1.4"/>
<path d="M876.1 351.1 L870.0 347.1 L874.0 353.2Z"/>
<circle cx="870.0" cy="347.1" r="1.4"/>
<path d="M880.1 364.1 L882.9 369.3 L883.1 363.4Z"/>
<circle cx="882.9" cy="369.3" r="1.4"/>
<path d="M878.1 363.8 L879.3 371.2 L881.1 364.0Z"/>
<circle cx="879.3" cy="371.2" r="1.4"/>
<path d="M874.2 361.1 L870.7 367.0 L876.4 363.1Z"/>
<circle cx="870.7" cy="367.0" r="1.4"/>
<path d="M887.0 358.0 L892.3 356.2 L886.8 355.0Z"/>
<circle cx="892.3" cy="356.2" r="1.4"/>
<path d="M873.8 353.5 L866.7 352.8 L872.9 356.3Z"/>
<circle cx="866.7" cy="352.8" r="1.4"/>
<circle cx="894.8" cy="349.0" r="1.1"/>
<circle cx="896.3" cy="368.4" r="0.8"/>
<circle cx="895.4" cy="365.9" r="1.2"/>
<circle cx="873.7" cy="342.4" r="1.6"/>
<circle cx="893.6" cy="364.1" r="1.4"/>
<circle cx="893.9" cy="364.8" r="1.5"/>
<circle cx="874.5" cy="342.1" r="0.9"/>
<circle cx="868.2" cy="371.7" r="1.1"/>
<circle cx="893.9" cy="369.6" r="1.3"/>
<circle cx="897.8" cy="347.0" r="1.7"/>
<circle cx="862.0" cy="364.4" r="1.0"/>
<circle cx="873.1" cy="372.2" r="1.7"/>
<circle cx="892.3" cy="347.4" r="1.1"/>
</g>
<g fill="#f9d35e">
<circle cx="876" cy="388" r="17.0"/>
<circle cx="869.7" cy="395.1" r="9.0"/>
<circle cx="869.7" cy="393.4" r="9.8"/>
<circle cx="879.1" cy="377.7" r="11.2"/>
<circle cx="868.4" cy="384.8" r="10.8"/>
<circle cx="882.6" cy="381.9" r="7.1"/>
<circle cx="865.3" cy="386.9" r="9.8"/>
<circle cx="887.3" cy="385.6" r="11.0"/>
<path d="M886.0 395.1 L897.0 396.9 L888.0 390.3Z"/>
<circle cx="897.0" cy="396.9" r="2.3"/>
<path d="M881.4 377.0 L880.6 369.0 L876.3 375.8Z"/>
<circle cx="880.6" cy="369.0" r="2.3"/>
<path d="M885.2 396.1 L897.0 399.8 L887.7 391.6Z"/>
<circle cx="897.0" cy="399.8" r="2.3"/>
<path d="M887.2 383.0 L891.7 376.4 L884.1 378.8Z"/>
<circle cx="891.7" cy="376.4" r="2.3"/>
<path d="M870.0 377.3 L862.7 373.1 L866.1 380.8Z"/>
<circle cx="862.7" cy="373.1" r="2.3"/>
<path d="M878.3 376.0 L875.4 364.5 L873.1 376.1Z"/>
<circle cx="875.4" cy="364.5" r="2.3"/>
<path d="M873.7 400.0 L876.6 408.5 L878.9 399.9Z"/>
<circle cx="876.6" cy="408.5" r="2.3"/>
<path d="M879.7 376.3 L878.2 365.5 L874.6 375.8Z"/>
<circle cx="878.2" cy="365.5" r="2.3"/>
<circle cx="878.6" cy="359.5" r="1.1"/>
<circle cx="907.4" cy="381.7" r="1.2"/>
<circle cx="844.3" cy="380.4" r="1.5"/>
<circle cx="900.8" cy="373.3" r="1.6"/>
<circle cx="858.9" cy="358.4" r="1.6"/>
<circle cx="893.4" cy="358.1" r="1.8"/>
<circle cx="856.8" cy="364.7" r="1.5"/>
<circle cx="885.3" cy="360.6" r="1.2"/>
<circle cx="895.9" cy="414.1" r="1.8"/>
<circle cx="857.6" cy="406.3" r="0.9"/>
<circle cx="851.6" cy="400.5" r="1.8"/>
<circle cx="901.7" cy="398.0" r="0.8"/>
<circle cx="856.1" cy="361.4" r="0.9"/>
</g>
<g fill="#ef5e2a">
<circle cx="848" cy="385" r="10.7"/>
<circle cx="853.9" cy="387.5" r="6.2"/>
<circle cx="851.8" cy="382.5" r="4.8"/>
<circle cx="850.1" cy="389.9" r="5.2"/>
<circle cx="846.6" cy="378.1" r="5.1"/>
<circle cx="850.2" cy="390.2" r="5.0"/>
<circle cx="848.3" cy="379.2" r="6.1"/>
<circle cx="850.7" cy="379.0" r="5.2"/>
<path d="M854.8 381.3 L860.2 374.6 L852.7 378.8Z"/>
<circle cx="860.2" cy="374.6" r="1.5"/>
<path d="M842.5 390.4 L840.1 397.0 L845.2 392.2Z"/>
<circle cx="840.1" cy="397.0" r="1.5"/>
<path d="M855.7 384.6 L861.6 381.2 L854.8 381.4Z"/>
<circle cx="861.6" cy="381.2" r="1.5"/>
<path d="M847.8 392.7 L850.2 397.0 L851.0 392.1Z"/>
<circle cx="850.2" cy="397.0" r="1.5"/>
<path d="M855.7 384.1 L862.7 380.0 L854.6 381.0Z"/>
<circle cx="862.7" cy="380.0" r="1.5"/>
<path d="M841.2 388.8 L837.3 394.5 L843.4 391.2Z"/>
<circle cx="837.3" cy="394.5" r="1.5"/>
<path d="M840.6 382.6 L834.9 383.7 L840.3 385.9Z"/>
<circle cx="834.9" cy="383.7" r="1.5"/>
<path d="M855.6 386.2 L862.8 384.1 L855.4 382.9Z"/>
<circle cx="862.8" cy="384.1" r="1.5"/>
<circle cx="849.2" cy="400.2" r="1.2"/>
<circle cx="833.4" cy="400.3" r="1.5"/>
<circle cx="835.2" cy="374.9" r="0.9"/>
<circle cx="840.6" cy="400.4" r="1.7"/>
<circle cx="828.2" cy="383.0" r="1.8"/>
<circle cx="846.0" cy="404.1" r="0.9"/>
<circle cx="849.9" cy="370.0" r="1.6"/>
<circle cx="860.1" cy="367.4" r="0.8"/>
<circle cx="845.4" cy="405.4" r="0.8"/>
<circle cx="829.5" cy="387.3" r="1.8"/>
<circle cx="829.5" cy="373.8" r="1.0"/>
<circle cx="852.5" cy="367.3" r="1.7"/>
<circle cx="866.0" cy="396.6" r="0.9"/>
</g>
<g fill="#7f3fb0">
<circle cx="842" cy="418" r="11.6"/>
<circle cx="835.0" cy="416.0" r="5.3"/>
<circle cx="845.1" cy="412.5" r="5.8"/>
<circle cx="847.5" cy="420.9" r="6.4"/>
<circle cx="840.6" cy="411.7" r="7.1"/>
<circle cx="847.2" cy="422.1" r="6.4"/>
<circle cx="850.6" cy="416.2" r="7.0"/>
<circle cx="848.6" cy="418.5" r="7.2"/>
<path d="M840.9 426.3 L843.2 433.6 L844.4 426.0Z"/>
<circle cx="843.2" cy="433.6" r="1.6"/>
<path d="M833.6 418.4 L829.4 421.4 L834.6 421.8Z"/>
<circle cx="829.4" cy="421.4" r="1.6"/>
<path d="M850.3 419.3 L858.8 417.1 L850.1 415.8Z"/>
<circle cx="858.8" cy="417.1" r="1.6"/>
<path d="M842.5 426.4 L846.3 433.3 L845.9 425.4Z"/>
<circle cx="846.3" cy="433.3" r="1.6"/>
<path d="M838.2 425.5 L838.3 432.3 L841.7 426.4Z"/>
<circle cx="838.3" cy="432.3" r="1.6"/>
<path d="M834.5 414.3 L828.1 414.4 L833.6 417.7Z"/>
<circle cx="828.1" cy="414.4" r="1.6"/>
<path d="M836.2 424.1 L834.3 430.7 L839.2 425.9Z"/>
<circle cx="834.3" cy="430.7" r="1.6"/>
<path d="M839.4 410.0 L834.9 405.7 L836.4 411.8Z"/>
<circle cx="834.9" cy="405.7" r="1.6"/>
<circle cx="848.9" cy="439.3" r="1.1"/>
<circle cx="861.8" cy="410.9" r="1.5"/>
<circle cx="830.6" cy="438.2" r="0.8"/>
<circle cx="852.9" cy="431.3" r="1.4"/>
<circle cx="837.4" cy="400.8" r="1.1"/>
<circle cx="853.0" cy="399.9" r="0.8"/>
<circle cx="844.6" cy="435.5" r="0.8"/>
<circle cx="827.9" cy="427.4" r="1.7"/>
<circle cx="823.6" cy="427.1" r="1.4"/>
<circle cx="844.4" cy="395.0" r="1.1"/>
<circle cx="832.3" cy="435.2" r="0.7"/>
<circle cx="824.1" cy="430.9" r="1.8"/>
<circle cx="847.4" cy="396.9" r="1.4"/>
</g>
<g fill="#dd8fd4">
<circle cx="876" cy="426" r="13.4"/>
<circle cx="883.3" cy="426.9" r="6.9"/>
<circle cx="872.4" cy="421.1" r="7.0"/>
<circle cx="866.2" cy="425.4" r="8.8"/>
<circle cx="871.1" cy="421.9" r="8.5"/>
<circle cx="883.0" cy="421.1" r="6.9"/>
<circle cx="869.7" cy="426.0" r="8.3"/>
<circle cx="884.3" cy="425.3" r="8.3"/>
<path d="M882.6 418.9 L884.2 412.2 L879.1 416.8Z"/>
<circle cx="884.2" cy="412.2" r="1.8"/>
<path d="M885.6 424.7 L893.3 419.7 L884.2 420.9Z"/>
<circle cx="893.3" cy="419.7" r="1.8"/>
<path d="M877.1 435.6 L881.0 440.6 L881.0 434.3Z"/>
<circle cx="881.0" cy="440.6" r="1.8"/>
<path d="M874.3 435.5 L876.6 444.1 L878.4 435.4Z"/>
<circle cx="876.6" cy="444.1" r="1.8"/>
<path d="M874.9 416.4 L870.5 410.1 L871.0 417.7Z"/>
<circle cx="870.5" cy="410.1" r="1.8"/>
<path d="M885.4 423.8 L891.3 418.7 L883.6 420.1Z"/>
<circle cx="891.3" cy="418.7" r="1.8"/>
<path d="M866.3 426.2 L860.8 429.6 L867.3 430.2Z"/>
<circle cx="860.8" cy="429.6" r="1.8"/>
<path d="M885.7 426.5 L891.5 423.4 L885.0 422.4Z"/>
<circle cx="891.5" cy="423.4" r="1.8"/>
<circle cx="895.8" cy="412.4" r="1.3"/>
<circle cx="856.1" cy="418.1" r="1.7"/>
<circle cx="902.6" cy="424.7" r="1.4"/>
<circle cx="895.2" cy="444.6" r="1.0"/>
<circle cx="892.9" cy="413.2" r="1.3"/>
<circle cx="886.0" cy="407.9" r="1.3"/>
<circle cx="893.0" cy="434.9" r="0.9"/>
<circle cx="903.7" cy="423.7" r="1.4"/>
<circle cx="867.1" cy="449.6" r="1.5"/>
<circle cx="858.0" cy="442.6" r="1.6"/>
<circle cx="896.7" cy="428.1" r="1.2"/>
<circle cx="890.0" cy="443.6" r="1.3"/>
<circle cx="887.0" cy="447.1" r="1.0"/>
</g>
<g fill="#23a3e0">
<circle cx="823" cy="446" r="13.4"/>
<circle cx="816.3" cy="443.0" r="8.0"/>
<circle cx="832.0" cy="448.2" r="6.1"/>
<circle cx="831.5" cy="443.8" r="7.4"/>
<circle cx="815.4" cy="450.7" r="8.2"/>
<circle cx="823.5" cy="436.4" r="7.4"/>
<circle cx="833.1" cy="445.7" r="8.9"/>
<circle cx="816.4" cy="450.3" r="7.7"/>
<path d="M832.0 442.4 L837.8 436.0 L829.7 439.0Z"/>
<circle cx="837.8" cy="436.0" r="1.8"/>
<path d="M814.0 442.5 L805.9 443.3 L813.3 446.5Z"/>
<circle cx="805.9" cy="443.3" r="1.8"/>
<path d="M832.0 442.3 L836.8 436.5 L829.6 439.0Z"/>
<circle cx="836.8" cy="436.5" r="1.8"/>
<path d="M831.2 451.1 L840.9 452.4 L832.6 447.3Z"/>
<circle cx="840.9" cy="452.4" r="1.8"/>
<path d="M831.9 442.1 L838.4 434.8 L829.4 438.8Z"/>
<circle cx="838.4" cy="434.8" r="1.8"/>
<path d="M816.4 438.9 L807.4 435.0 L814.1 442.2Z"/>
<circle cx="807.4" cy="435.0" r="1.8"/>
<path d="M817.9 454.2 L816.9 463.2 L821.7 455.6Z"/>
<circle cx="816.9" cy="463.2" r="1.8"/>
<path d="M830.7 451.9 L837.2 452.6 L832.4 448.2Z"/>
<circle cx="837.2" cy="452.6" r="1.8"/>
<circle cx="800.7" cy="453.7" r="1.1"/>
<circle cx="847.1" cy="454.2" r="1.3"/>
<circle cx="824.5" cy="467.7" r="1.1"/>
<circle cx="824.7" cy="465.5" r="1.7"/>
<circle cx="847.6" cy="440.7" r="1.7"/>
<circle cx="799.7" cy="458.6" r="0.9"/>
<circle cx="822.5" cy="421.7" r="1.7"/>
<circle cx="844.5" cy="461.3" r="0.8"/>
<circle cx="795.9" cy="439.5" r="0.7"/>
<circle cx="823.8" cy="467.7" r="1.1"/>
<circle cx="848.3" cy="456.5" r="1.6"/>
<circle cx="805.2" cy="459.4" r="1.3"/>
<circle cx="841.4" cy="451.5" r="1.7"/>
</g>
<g fill="#f6d561">
<circle cx="848" cy="445" r="8.0"/>
<circle cx="846.2" cy="449.6" r="5.5"/>
<circle cx="852.8" cy="444.3" r="3.8"/>
<circle cx="846.2" cy="451.1" r="5.4"/>
<circle cx="850.0" cy="450.7" r="4.1"/>
<circle cx="844.2" cy="445.7" r="5.4"/>
<circle cx="852.0" cy="444.9" r="4.8"/>
<circle cx="850.2" cy="450.8" r="3.4"/>
<path d="M851.7 449.5 L856.9 452.0 L853.2 447.5Z"/>
<circle cx="856.9" cy="452.0" r="1.1"/>
<path d="M844.7 449.8 L843.4 456.0 L846.9 450.7Z"/>
<circle cx="843.4" cy="456.0" r="1.1"/>
<path d="M852.8 441.7 L855.7 436.7 L851.0 440.0Z"/>
<circle cx="855.7" cy="436.7" r="1.1"/>
<path d="M850.8 450.1 L855.5 453.5 L852.7 448.4Z"/>
<circle cx="855.5" cy="453.5" r="1.1"/>
<path d="M853.7 444.0 L857.7 441.0 L852.8 441.7Z"/>
<circle cx="857.7" cy="441.0" r="1.1"/>
<path d="M852.4 448.8 L856.5 449.6 L853.6 446.6Z"/>
<circle cx="856.5" cy="449.6" r="1.1"/>
<path d="M844.9 449.9 L844.0 455.6 L847.2 450.7Z"/>
<circle cx="844.0" cy="455.6" r="1.1"/>
<path d="M848.7 450.8 L851.2 454.0 L851.0 449.9Z"/>
<circle cx="851.2" cy="454.0" r="1.1"/>
<circle cx="849.4" cy="460.0" r="1.6"/>
<circle cx="837.5" cy="455.8" r="1.7"/>
<circle cx="837.3" cy="438.2" r="1.0"/>
<circle cx="861.5" cy="438.3" r="1.0"/>
<circle cx="840.4" cy="435.9" r="1.8"/>
<circle cx="834.7" cy="450.2" r="1.3"/>
<circle cx="862.1" cy="449.1" r="1.0"/>
<circle cx="847.9" cy="460.9" r="0.8"/>
<circle cx="844.6" cy="460.2" r="1.0"/>
<circle cx="845.4" cy="459.2" r="0.9"/>
<circle cx="861.5" cy="434.8" r="0.7"/>
<circle cx="832.9" cy="448.7" r="1.1"/>
<circle cx="860.8" cy="438.9" r="0.9"/>
</g>
<g fill="#f7a35a">
<circle cx="881" cy="452" r="11.6"/>
<circle cx="873.6" cy="449.3" r="6.0"/>
<circle cx="876.4" cy="444.9" r="6.5"/>
<circle cx="872.2" cy="451.7" r="7.1"/>
<circle cx="871.8" cy="450.8" r="5.4"/>
<circle cx="882.0" cy="446.5" r="6.9"/>
<circle cx="881.6" cy="458.9" r="7.4"/>
<circle cx="882.9" cy="443.7" r="5.6"/>
<path d="M872.7 450.8 L867.0 453.0 L873.0 454.3Z"/>
<circle cx="867.0" cy="453.0" r="1.6"/>
<path d="M874.7 446.5 L867.6 444.6 L873.0 449.6Z"/>
<circle cx="867.6" cy="444.6" r="1.6"/>
<path d="M888.6 455.5 L896.4 455.5 L889.4 452.1Z"/>
<circle cx="896.4" cy="455.5" r="1.6"/>
<path d="M880.9 443.6 L877.5 436.7 L877.5 444.4Z"/>
<circle cx="877.5" cy="436.7" r="1.6"/>
<path d="M888.0 447.4 L890.6 442.1 L885.4 444.9Z"/>
<circle cx="890.6" cy="442.1" r="1.6"/>
<path d="M884.3 459.7 L888.6 462.6 L887.2 457.7Z"/>
<circle cx="888.6" cy="462.6" r="1.6"/>
<path d="M872.8 450.4 L866.0 452.4 L872.9 454.0Z"/>
<circle cx="866.0" cy="452.4" r="1.6"/>
<path d="M872.7 453.3 L867.7 457.1 L874.0 456.6Z"/>
<circle cx="867.7" cy="457.1" r="1.6"/>
<circle cx="886.1" cy="435.8" r="1.7"/>
<circle cx="862.1" cy="443.3" r="1.6"/>
<circle cx="882.3" cy="469.5" r="1.0"/>
<circle cx="899.3" cy="457.0" r="1.4"/>
<circle cx="862.7" cy="449.0" r="1.3"/>
<circle cx="900.6" cy="464.2" r="0.9"/>
<circle cx="880.5" cy="469.7" r="1.5"/>
<circle cx="892.1" cy="432.1" r="0.8"/>
<circle cx="864.6" cy="462.3" r="0.9"/>
<circle cx="897.4" cy="448.9" r="1.2"/>
<circle cx="882.7" cy="427.6" r="0.9"/>
<circle cx="859.4" cy="458.2" r="0.7"/>
<circle cx="882.4" cy="475.6" r="0.9"/>
</g>
<g fill="#6cc04a">
<circle cx="851" cy="471" r="15.2"/>
<circle cx="844.7" cy="476.1" r="8.1"/>
<circle cx="856.7" cy="474.0" r="10.7"/>
<circle cx="851.9" cy="460.2" r="7.3"/>
<circle cx="850.8" cy="480.7" r="7.3"/>
<circle cx="839.3" cy="473.9" r="7.9"/>
<circle cx="844.6" cy="481.6" r="9.0"/>
<circle cx="859.5" cy="473.2" r="9.1"/>
<path d="M860.2 477.0 L868.8 477.9 L861.8 472.7Z"/>
<circle cx="868.8" cy="477.9" r="2.1"/>
<path d="M849.5 460.1 L843.4 450.0 L845.2 461.7Z"/>
<circle cx="843.4" cy="450.0" r="2.1"/>
<path d="M843.2 463.3 L832.1 458.9 L840.7 467.2Z"/>
<circle cx="832.1" cy="458.9" r="2.1"/>
<path d="M840.0 471.2 L832.1 475.5 L841.1 475.8Z"/>
<circle cx="832.1" cy="475.5" r="2.1"/>
<path d="M858.8 463.3 L861.7 454.9 L855.0 460.8Z"/>
<circle cx="861.7" cy="454.9" r="2.1"/>
<path d="M855.4 461.0 L854.6 453.1 L850.8 460.0Z"/>
<circle cx="854.6" cy="453.1" r="2.1"/>
<path d="M842.9 478.4 L840.6 485.8 L846.7 481.1Z"/>
<circle cx="840.6" cy="485.8" r="2.1"/>
<path d="M841.5 465.5 L833.9 465.5 L840.1 469.9Z"/>
<circle cx="833.9" cy="465.5" r="2.1"/>
<circle cx="857.8" cy="493.7" r="1.2"/>
<circle cx="841.6" cy="495.5" r="1.8"/>
<circle cx="837.8" cy="443.3" r="0.9"/>
<circle cx="834.5" cy="485.9" r="1.5"/>
<circle cx="835.1" cy="489.5" r="0.7"/>
<circle cx="861.0" cy="493.1" r="1.1"/>
<circle cx="876.8" cy="457.6" r="1.0"/>
<circle cx="836.2" cy="488.7" r="1.7"/>
<circle cx="832.2" cy="493.9" r="1.5"/>
<circle cx="869.1" cy="459.1" r="1.1"/>
<circle cx="834.3" cy="485.8" r="1.7"/>
<circle cx="837.5" cy="497.4" r="1.3"/>
<circle cx="875.1" cy="479.7" r="1.0"/>
</g>
<g fill="#3dbb9c">
<circle cx="806" cy="474" r="15.2"/>
<circle cx="813.0" cy="475.8" r="8.9"/>
<circle cx="814.0" cy="475.6" r="8.1"/>
<circle cx="799.2" cy="472.1" r="9.4"/>
<circle cx="805.3" cy="484.8" r="9.2"/>
<circle cx="810.5" cy="480.0" r="7.5"/>
<circle cx="804.0" cy="465.5" r="8.0"/>
<circle cx="811.1" cy="468.3" r="7.6"/>
<path d="M798.1 481.6 L795.7 489.1 L801.9 484.2Z"/>
<circle cx="795.7" cy="489.1" r="2.1"/>
<path d="M815.8 479.0 L822.6 478.3 L816.9 474.5Z"/>
<circle cx="822.6" cy="478.3" r="2.1"/>
<path d="M800.4 464.6 L792.0 459.0 L797.0 467.8Z"/>
<circle cx="792.0" cy="459.0" r="2.1"/>
<path d="M812.0 464.8 L814.3 452.5 L807.7 463.2Z"/>
<circle cx="814.3" cy="452.5" r="2.1"/>
<path d="M800.6 483.5 L799.7 494.2 L805.0 484.9Z"/>
<circle cx="799.7" cy="494.2" r="2.1"/>
<path d="M816.5 470.8 L822.0 465.1 L814.2 466.8Z"/>
<circle cx="822.0" cy="465.1" r="2.1"/>
<path d="M804.2 463.2 L798.1 454.4 L799.9 464.9Z"/>
<circle cx="798.1" cy="454.4" r="2.1"/>
<path d="M816.9 473.3 L827.5 467.8 L815.6 468.8Z"/>
<circle cx="827.5" cy="467.8" r="2.1"/>
<circle cx="808.7" cy="502.1" r="0.8"/>
<circle cx="783.0" cy="485.2" r="0.8"/>
<circle cx="787.5" cy="490.7" r="1.2"/>
<circle cx="801.7" cy="496.7" r="1.1"/>
<circle cx="783.1" cy="477.6" r="1.4"/>
<circle cx="807.4" cy="496.4" r="1.1"/>
<circle cx="785.7" cy="484.8" r="1.3"/>
<circle cx="797.8" cy="447.9" r="1.5"/>
<circle cx="831.3" cy="477.7" r="1.1"/>
<circle cx="829.8" cy="483.9" r="0.8"/>
<circle cx="778.3" cy="474.8" r="1.2"/>
<circle cx="795.0" cy="495.5" r="0.7"/>
<circle cx="788.3" cy="499.4" r="1.3"/>
</g>
<g fill="#6a1b9a">
<circle cx="831" cy="496" r="14.3"/>
<circle cx="830.3" cy="505.8" r="6.7"/>
<circle cx="821.7" cy="497.8" r="9.9"/>
<circle cx="825.0" cy="503.0" r="9.8"/>
<circle cx="832.3" cy="486.5" r="8.5"/>
<circle cx="823.9" cy="500.4" r="7.0"/>
<circle cx="836.3" cy="486.3" r="7.5"/>
<circle cx="836.1" cy="492.7" r="6.5"/>
<path d="M821.0 493.4 L813.2 495.2 L820.8 497.7Z"/>
<circle cx="813.2" cy="495.2" r="2.0"/>
<path d="M822.9 502.4 L817.1 512.7 L826.2 505.1Z"/>
<circle cx="817.1" cy="512.7" r="2.0"/>
<path d="M835.2 505.4 L841.1 509.8 L838.7 502.9Z"/>
<circle cx="841.1" cy="509.8" r="2.0"/>
<path d="M830.2 506.3 L833.7 515.8 L834.5 505.7Z"/>
<circle cx="833.7" cy="515.8" r="2.0"/>
<path d="M829.8 506.2 L832.5 511.9 L834.2 505.8Z"/>
<circle cx="832.5" cy="511.9" r="2.0"/>
<path d="M821.9 491.2 L813.4 491.0 L820.7 495.4Z"/>
<circle cx="813.4" cy="491.0" r="2.0"/>
<path d="M829.5 506.2 L832.3 514.8 L833.9 505.9Z"/>
<circle cx="832.3" cy="514.8" r="2.0"/>
<path d="M826.9 486.6 L819.7 480.5 L823.3 489.1Z"/>
<circle cx="819.7" cy="480.5" r="2.0"/>
<circle cx="812.7" cy="477.8" r="1.6"/>
<circle cx="854.1" cy="491.4" r="1.1"/>
<circle cx="848.6" cy="480.7" r="1.5"/>
<circle cx="821.9" cy="470.5" r="1.8"/>
<circle cx="840.8" cy="476.6" r="1.4"/>
<circle cx="805.2" cy="497.5" r="1.1"/>
<circle cx="824.8" cy="523.0" r="1.3"/>
<circle cx="832.8" cy="518.6" r="1.1"/>
<circle cx="842.1" cy="518.8" r="0.8"/>
<circle cx="850.2" cy="504.1" r="0.8"/>
<circle cx="825.0" cy="475.6" r="1.2"/>
<circle cx="834.5" cy="471.2" r="0.9"/>
<circle cx="850.3" cy="474.5" r="0.8"/>
</g>
<g fill="#2ba4e0">
<circle cx="854" cy="505" r="8.0"/>
<circle cx="853.9" cy="510.0" r="5.2"/>
<circle cx="849.6" cy="508.6" r="3.9"/>
<circle cx="853.1" cy="500.7" r="4.1"/>
<circle cx="854.4" cy="498.9" r="5.3"/>
<circle cx="849.7" cy="503.1" r="5.0"/>
<circle cx="849.7" cy="500.8" r="5.2"/>
<circle cx="857.2" cy="508.2" r="4.9"/>
<path d="M853.5 510.8 L855.1 514.5 L855.9 510.5Z"/>
<circle cx="855.1" cy="514.5" r="1.1"/>
<path d="M859.5 506.7 L864.9 505.9 L859.8 504.3Z"/>
<circle cx="864.9" cy="505.9" r="1.1"/>
<path d="M859.7 504.1 L865.4 500.6 L858.8 501.8Z"/>
<circle cx="865.4" cy="500.6" r="1.1"/>
<path d="M856.9 510.0 L861.5 513.4 L858.7 508.4Z"/>
<circle cx="861.5" cy="513.4" r="1.1"/>
<path d="M848.4 506.7 L844.3 510.4 L849.6 508.8Z"/>
<circle cx="844.3" cy="510.4" r="1.1"/>
<path d="M848.7 507.4 L844.4 512.3 L850.2 509.4Z"/>
<circle cx="844.4" cy="512.3" r="1.1"/>
<path d="M859.7 505.8 L863.1 504.4 L859.6 503.4Z"/>
<circle cx="863.1" cy="504.4" r="1.1"/>
<path d="M853.9 499.2 L851.9 495.9 L851.5 499.8Z"/>
<circle cx="851.9" cy="495.9" r="1.1"/>
<circle cx="866.5" cy="508.4" r="1.5"/>
<circle cx="866.0" cy="504.5" r="1.1"/>
<circle cx="868.2" cy="507.4" r="1.2"/>
<circle cx="844.8" cy="514.3" r="1.6"/>
<circle cx="860.8" cy="494.0" r="1.1"/>
<circle cx="842.4" cy="494.4" r="1.8"/>
<circle cx="842.3" cy="514.8" r="1.3"/>
<circle cx="857.8" cy="493.4" r="0.9"/>
<circle cx="867.0" cy="515.4" r="1.0"/>
<circle cx="842.0" cy="505.9" r="1.1"/>
<circle cx="868.4" cy="506.8" r="0.9"/>
<circle cx="844.9" cy="495.9" r="1.0"/>
<circle cx="840.7" cy="506.5" r="1.0"/>
</g>
<g fill="#eb5424">
<circle cx="876" cy="496" r="15.2"/>
<circle cx="882.3" cy="498.1" r="10.2"/>
<circle cx="873.5" cy="502.3" r="7.1"/>
<circle cx="863.6" cy="497.3" r="7.1"/>
<circle cx="882.2" cy="489.1" r="8.1"/>
<circle cx="879.1" cy="487.8" r="6.5"/>
<circle cx="866.2" cy="492.8" r="9.0"/>
<circle cx="873.9" cy="507.9" r="10.1"/>
<path d="M886.8 497.9 L895.7 495.3 L886.6 493.3Z"/>
<circle cx="895.7" cy="495.3" r="2.1"/>
<path d="M883.4 487.9 L886.8 477.4 L879.4 485.6Z"/>
<circle cx="886.8" cy="477.4" r="2.1"/>
<path d="M878.7 506.6 L883.7 511.3 L882.9 504.5Z"/>
<circle cx="883.7" cy="511.3" r="2.1"/>
<path d="M879.2 506.5 L884.6 511.4 L883.3 504.2Z"/>
<circle cx="884.6" cy="511.4" r="2.1"/>
<path d="M884.5 502.9 L893.1 504.7 L886.6 498.8Z"/>
<circle cx="893.1" cy="504.7" r="2.1"/>
<path d="M878.6 485.3 L876.4 477.1 L873.9 485.2Z"/>
<circle cx="876.4" cy="477.1" r="2.1"/>
<path d="M865.5 492.7 L859.0 494.5 L865.1 497.4Z"/>
<circle cx="859.0" cy="494.5" r="2.1"/>
<path d="M876.4 507.0 L881.7 518.2 L880.9 505.8Z"/>
<circle cx="881.7" cy="518.2" r="2.1"/>
<circle cx="903.0" cy="497.9" r="1.6"/>
<circle cx="883.7" cy="467.7" r="1.1"/>
<circle cx="885.9" cy="467.4" r="1.5"/>
<circle cx="898.4" cy="494.0" r="1.7"/>
<circle cx="852.3" cy="512.7" r="1.0"/>
<circle cx="894.3" cy="484.3" r="1.3"/>
<circle cx="879.6" cy="521.3" r="1.1"/>
<circle cx="859.4" cy="470.9" r="1.1"/>
<circle cx="859.7" cy="476.8" r="1.0"/>
<circle cx="896.6" cy="482.0" r="0.8"/>
<circle cx="861.1" cy="521.3" r="0.9"/>
<circle cx="874.8" cy="468.8" r="1.4"/>
<circle cx="885.9" cy="516.2" r="0.9"/>
</g>
<g fill="#f9a64e">
<circle cx="770" cy="505" r="14.3"/>
<circle cx="765.0" cy="511.8" r="5.9"/>
<circle cx="761.7" cy="504.9" r="7.2"/>
<circle cx="758.8" cy="502.3" r="6.7"/>
<circle cx="775.7" cy="499.7" r="9.0"/>
<circle cx="779.1" cy="512.4" r="7.7"/>
<circle cx="777.0" cy="503.3" r="7.6"/>
<circle cx="768.1" cy="498.3" r="7.0"/>
<path d="M767.5 495.0 L760.5 485.7 L763.6 496.9Z"/>
<circle cx="760.5" cy="485.7" r="2.0"/>
<path d="M763.6 513.1 L762.5 520.3 L767.5 515.0Z"/>
<circle cx="762.5" cy="520.3" r="2.0"/>
<path d="M762.0 511.5 L756.4 522.0 L765.4 514.2Z"/>
<circle cx="756.4" cy="522.0" r="2.0"/>
<path d="M774.3 514.4 L781.8 520.8 L777.8 511.8Z"/>
<circle cx="781.8" cy="520.8" r="2.0"/>
<path d="M761.2 510.4 L755.8 518.7 L764.2 513.6Z"/>
<circle cx="755.8" cy="518.7" r="2.0"/>
<path d="M770.2 515.3 L774.6 524.0 L774.5 514.3Z"/>
<circle cx="774.6" cy="524.0" r="2.0"/>
<path d="M779.1 500.1 L786.0 491.4 L776.3 496.8Z"/>
<circle cx="786.0" cy="491.4" r="2.0"/>
<path d="M764.6 496.2 L756.9 491.3 L761.5 499.2Z"/>
<circle cx="756.9" cy="491.3" r="2.0"/>
<circle cx="750.6" cy="496.2" r="1.6"/>
<circle cx="760.9" cy="482.0" r="1.4"/>
<circle cx="749.0" cy="516.7" r="1.0"/>
<circle cx="749.1" cy="489.7" r="1.3"/>
<circle cx="795.9" cy="510.3" r="1.2"/>
<circle cx="748.2" cy="490.5" r="1.7"/>
<circle cx="784.4" cy="525.3" r="1.8"/>
<circle cx="768.2" cy="481.8" r="1.5"/>
<circle cx="794.2" cy="503.4" r="1.7"/>
<circle cx="791.1" cy="526.5" r="1.2"/>
<circle cx="772.9" cy="533.5" r="1.4"/>
<circle cx="796.4" cy="494.1" r="1.6"/>
<circle cx="739.9" cy="502.8" r="0.8"/>
</g>
<g fill="#f8d65e">
<circle cx="803" cy="505" r="9.8"/>
<circle cx="807.7" cy="500.0" r="4.8"/>
<circle cx="805.1" cy="499.5" r="5.6"/>
<circle cx="806.2" cy="501.4" r="4.8"/>
<circle cx="800.3" cy="501.6" r="5.6"/>
<circle cx="804.4" cy="499.1" r="4.7"/>
<circle cx="805.3" cy="497.9" r="6.3"/>
<circle cx="795.7" cy="502.7" r="6.3"/>
<path d="M805.8 511.5 L810.2 515.2 L808.2 509.8Z"/>
<circle cx="810.2" cy="515.2" r="1.4"/>
<path d="M807.7 510.3 L812.0 511.6 L809.5 507.9Z"/>
<circle cx="812.0" cy="511.6" r="1.4"/>
<path d="M797.8 509.9 L794.8 516.9 L800.3 511.6Z"/>
<circle cx="794.8" cy="516.9" r="1.4"/>
<path d="M807.8 499.8 L808.8 495.1 L805.2 498.3Z"/>
<circle cx="808.8" cy="495.1" r="1.4"/>
<path d="M804.5 511.9 L808.2 516.4 L807.2 510.7Z"/>
<circle cx="808.2" cy="516.4" r="1.4"/>
<path d="M808.3 500.2 L810.9 494.1 L805.8 498.5Z"/>
<circle cx="810.9" cy="494.1" r="1.4"/>
<path d="M809.5 502.2 L812.2 498.5 L807.8 499.8Z"/>
<circle cx="812.2" cy="498.5" r="1.4"/>
<path d="M810.0 506.0 L814.8 504.1 L809.8 503.0Z"/>
<circle cx="814.8" cy="504.1" r="1.4"/>
<circle cx="789.3" cy="490.5" r="1.5"/>
<circle cx="809.0" cy="522.5" r="1.2"/>
<circle cx="819.1" cy="506.6" r="1.0"/>
<circle cx="792.2" cy="493.5" r="1.4"/>
<circle cx="797.9" cy="490.8" r="0.8"/>
<circle cx="797.1" cy="489.0" r="0.8"/>
<circle cx="818.2" cy="518.6" r="1.4"/>
<circle cx="793.5" cy="516.9" r="1.8"/>
<circle cx="796.2" cy="487.3" r="1.1"/>
<circle cx="796.8" cy="520.5" r="0.9"/>
<circle cx="791.6" cy="492.7" r="1.6"/>
<circle cx="788.7" cy="514.2" r="1.3"/>
<circle cx="818.2" cy="499.2" r="1.5"/>
</g>
<defs><clipPath id="brc"><path d="M745.0,300.4 C735.3,295.5 724.6,293.5 713.9,295.5 C705.1,297.4 698.3,300.4 693.5,304.3 C687.7,309.3 684.7,312.2 681.8,316.2 C677.0,323.1 673.1,328.0 670.2,334.9 C665.3,345.7 663.4,352.6 662.4,361.5 C660.4,372.3 660.4,383.1 662.4,391.0 C663.4,400.9 665.3,409.7 667.2,418.6 C670.2,429.4 673.1,436.3 676.0,443.2 C679.9,452.1 683.8,458.0 688.6,463.9 C695.4,470.8 701.3,475.7 709.0,479.7 C715.8,483.6 720.7,485.6 726.5,486.6 C732.4,487.5 738.2,487.5 745.0,487.5 Z"/></clipPath></defs>
<path d="M745.0,300.4 C735.3,295.5 724.6,293.5 713.9,295.5 C705.1,297.4 698.3,300.4 693.5,304.3 C687.7,309.3 684.7,312.2 681.8,316.2 C677.0,323.1 673.1,328.0 670.2,334.9 C665.3,345.7 663.4,352.6 662.4,361.5 C660.4,372.3 660.4,383.1 662.4,391.0 C663.4,400.9 665.3,409.7 667.2,418.6 C670.2,429.4 673.1,436.3 676.0,443.2 C679.9,452.1 683.8,458.0 688.6,463.9 C695.4,470.8 701.3,475.7 709.0,479.7 C715.8,483.6 720.7,485.6 726.5,486.6 C732.4,487.5 738.2,487.5 745.0,487.5 Z" fill="#9c99d8"/>
<g clip-path="url(#brc)" fill="#1b1a2c">
<path d="M663.2,300.1 663.2,300.4 663.3,300.8 663.5,301.4 663.8,302.2 664.0,303.0 664.2,303.8 664.3,304.6 664.4,305.3 664.3,305.9 664.1,306.4 663.8,306.9 663.3,307.6 662.8,308.6 662.5,309.7 662.5,310.8 662.7,311.8 662.8,312.7 663.0,313.6 663.2,314.5 663.5,315.4 663.9,316.4 664.4,317.3 665.1,318.1 665.8,318.7 666.4,319.3 667.0,319.9 667.6,320.5 668.3,321.2 668.7,321.6 669.1,321.9 669.3,322.0 670.0,321.5 669.9,321.3 669.7,320.9 669.4,320.3 669.0,319.5 668.5,318.7 668.0,318.0 667.5,317.2 667.0,316.5 666.7,315.9 666.4,315.3 666.3,314.6 666.1,313.8 666.0,313.0 665.9,312.2 665.7,311.3 665.6,310.6 665.6,310.1 665.7,309.6 665.9,309.0 666.3,308.3 666.7,307.3 666.9,306.2 666.8,305.1 666.6,304.1 666.2,303.2 665.8,302.3 665.3,301.5 664.8,300.7 664.4,300.2 664.1,299.9 663.9,299.7Z"/>
<path d="M675.0,300.1 674.9,300.4 674.7,300.9 674.6,301.7 674.5,302.8 674.4,303.9 674.3,305.0 674.3,306.1 674.4,307.3 674.7,308.5 675.2,309.6 676.0,310.6 676.8,311.3 677.2,311.8 677.4,312.4 677.5,313.1 677.5,314.1 677.7,315.4 678.3,316.4 679.1,317.3 680.1,318.0 680.8,318.4 681.3,318.6 681.6,318.7 682.0,318.1 681.9,317.9 681.6,317.4 681.0,316.8 680.3,316.1 680.0,315.5 679.8,314.8 679.8,314.1 680.0,313.1 679.9,311.8 679.5,310.6 678.7,309.5 677.9,308.8 677.4,308.2 677.1,307.5 676.8,306.8 676.6,305.9 676.5,304.8 676.3,303.8 676.2,302.8 676.1,301.7 675.9,300.9 675.8,300.4 675.7,300.1Z"/>
<path d="M682.2,295.4 682.0,295.6 681.6,295.9 681.1,296.5 680.4,297.4 679.9,298.3 679.4,299.4 679.2,300.5 679.2,301.5 679.0,302.2 678.6,302.7 678.2,303.2 677.4,303.7 676.6,304.4 675.8,305.2 675.0,306.0 674.2,306.9 673.7,308.1 673.5,309.3 673.6,310.6 673.9,311.7 674.3,312.8 674.8,313.7 675.2,314.7 675.7,315.5 676.0,316.2 676.1,317.0 676.0,317.7 675.7,318.7 675.5,319.4 675.4,319.9 675.4,320.2 676.0,320.5 676.2,320.3 676.5,319.9 676.9,319.2 677.5,318.2 677.8,317.1 677.9,316.0 677.7,314.8 677.3,313.8 676.9,312.9 676.6,311.9 676.4,311.0 676.2,310.1 676.2,309.5 676.3,309.0 676.6,308.4 677.1,307.8 677.8,307.1 678.4,306.4 679.1,305.8 680.0,305.0 680.7,304.0 681.2,302.9 681.4,301.7 681.3,300.6 681.3,299.8 681.5,298.9 681.7,298.1 682.2,297.2 682.5,296.5 682.7,296.1 682.8,295.8Z"/>
<path d="M696.8,298.4 696.6,298.2 696.1,298.0 695.5,297.7 694.6,297.4 693.7,297.0 692.7,296.7 691.8,296.4 690.8,296.1 689.8,295.9 688.7,295.8 687.7,295.8 686.6,295.9 685.7,296.0 684.7,296.2 683.8,296.3 682.9,296.5 682.1,296.6 681.3,296.6 680.5,296.5 679.5,296.3 678.3,296.4 677.2,296.7 676.2,297.3 675.5,297.9 674.9,298.3 674.3,298.5 673.7,298.5 672.8,298.4 672.1,298.3 671.6,298.2 671.3,298.3 671.1,299.0 671.3,299.2 671.7,299.4 672.4,299.7 673.4,300.1 674.4,300.3 675.5,300.2 676.6,299.8 677.4,299.2 678.0,299.0 678.6,299.0 679.2,299.0 680.0,299.3 681.1,299.4 682.2,299.5 683.3,299.4 684.3,299.2 685.2,299.0 686.1,298.9 687.1,298.7 687.9,298.5 688.8,298.4 689.6,298.4 690.4,298.4 691.3,298.5 692.3,298.7 693.2,298.8 694.2,298.9 695.1,299.1 695.8,299.2 696.3,299.2 696.6,299.1Z"/>
<path d="M704.5,300.6 704.8,300.5 705.2,300.2 705.8,299.8 706.5,299.2 707.2,298.7 707.9,298.3 708.7,298.0 709.5,297.7 710.3,297.5 711.1,297.3 712.0,297.1 712.7,297.0 713.2,297.0 713.6,297.1 714.1,297.3 714.8,297.9 715.9,298.5 717.1,298.8 718.3,298.9 719.5,298.8 720.6,298.5 721.6,298.0 722.5,297.5 723.3,296.8 723.9,296.3 724.2,295.9 724.3,295.6 723.8,294.9 723.6,294.9 723.1,295.0 722.4,295.3 721.5,295.6 720.7,295.9 720.0,296.0 719.2,296.0 718.4,295.9 717.8,295.8 717.3,295.5 716.8,295.2 716.1,294.5 715.0,293.8 713.7,293.5 712.4,293.5 711.2,293.8 710.2,294.1 709.2,294.5 708.3,295.0 707.3,295.5 706.5,296.2 705.7,296.9 705.0,297.8 704.4,298.6 704.1,299.3 703.9,299.7 703.8,300.0Z"/>
<path d="M723.5,295.8 723.6,295.5 723.5,295.1 723.3,294.4 723.1,293.6 723.0,292.9 723.0,292.3 723.2,291.7 723.5,290.8 723.7,289.6 723.5,288.5 723.0,287.3 722.4,286.6 722.3,286.2 722.2,285.8 722.2,285.3 722.3,284.5 722.3,283.3 722.0,282.2 721.5,281.1 720.8,280.3 720.1,279.6 719.3,278.9 718.5,278.4 717.7,277.9 717.0,277.6 716.6,277.5 716.3,277.4 715.8,278.1 715.9,278.4 716.2,278.8 716.6,279.3 717.2,279.9 717.7,280.6 718.2,281.2 718.6,281.9 718.9,282.5 719.1,283.1 719.1,283.6 719.0,284.1 718.8,284.9 718.8,286.2 719.0,287.4 719.6,288.4 720.2,289.1 720.4,289.5 720.6,289.9 720.6,290.4 720.5,291.2 720.5,292.3 720.8,293.4 721.2,294.4 721.8,295.2 722.2,295.7 722.5,296.1 722.8,296.2Z"/>
<path d="M735.1,298.6 735.2,298.9 735.5,299.4 736.0,300.0 736.6,300.8 737.2,301.6 737.7,302.4 738.2,303.3 738.6,304.1 738.9,304.9 739.2,305.8 739.3,306.7 739.4,307.7 739.6,308.8 739.9,310.0 740.4,311.0 740.9,312.0 741.5,312.9 742.0,313.8 742.6,314.7 743.1,315.5 743.6,316.3 743.9,317.2 744.2,318.1 744.4,319.1 744.6,319.8 744.8,320.3 744.9,320.6 745.6,320.5 745.7,320.3 745.8,319.7 745.9,319.0 745.9,317.9 745.8,316.7 745.6,315.6 745.2,314.5 744.8,313.5 744.3,312.6 743.9,311.6 743.4,310.7 743.0,309.8 742.7,309.0 742.4,308.1 742.2,307.3 742.1,306.2 741.8,305.1 741.4,304.0 740.8,302.9 740.2,302.0 739.5,301.1 738.7,300.3 737.9,299.6 737.0,298.9 736.4,298.5 735.9,298.2 735.7,298.1Z"/>
<path d="M740.5,300.2 740.8,300.1 741.3,299.8 741.9,299.3 742.8,298.5 743.5,297.5 744.0,296.3 744.2,295.1 744.1,294.0 744.2,293.3 744.5,292.6 744.8,292.0 745.6,291.2 746.2,290.0 746.5,288.7 746.4,287.3 746.1,286.1 745.8,285.1 745.5,284.0 745.1,283.0 744.8,282.1 744.6,281.3 744.5,280.4 744.6,279.6 744.9,278.6 745.2,277.8 745.3,277.2 745.2,276.9 744.5,276.6 744.3,276.8 744.0,277.3 743.5,277.9 742.9,279.0 742.5,280.1 742.3,281.3 742.3,282.5 742.6,283.7 742.8,284.8 743.0,285.8 743.2,286.9 743.4,287.8 743.4,288.4 743.3,289.0 743.0,289.5 742.3,290.4 741.8,291.6 741.5,292.8 741.5,294.1 741.7,295.2 741.8,295.9 741.7,296.7 741.4,297.4 740.8,298.2 740.3,298.9 740.1,299.4 740.0,299.7Z"/>
<path d="M668.4,309.3 668.6,309.1 668.8,308.7 669.0,308.0 669.2,307.1 669.4,306.1 669.5,305.2 669.6,304.2 669.6,303.2 669.4,302.1 669.0,301.0 668.4,300.1 667.7,299.4 667.4,299.0 667.2,298.5 667.1,298.0 667.0,297.2 667.0,296.4 667.1,295.5 667.2,294.7 667.3,293.8 667.4,293.1 667.4,292.6 667.3,292.3 666.6,292.1 666.4,292.3 666.1,292.7 665.7,293.3 665.3,294.1 665.0,295.1 664.7,296.0 664.5,297.0 664.3,298.1 664.4,299.2 664.8,300.3 665.4,301.3 666.1,302.0 666.4,302.5 666.7,303.0 666.9,303.6 667.0,304.3 667.1,305.2 667.2,306.1 667.3,306.9 667.4,307.9 667.4,308.6 667.5,309.0 667.7,309.3Z"/>
<path d="M680.9,305.7 681.1,305.5 681.4,305.1 681.7,304.5 682.1,303.6 682.5,302.6 682.8,301.7 683.1,300.7 683.2,299.9 683.5,299.4 683.8,299.0 684.2,298.7 684.8,298.4 685.3,298.3 685.7,298.3 686.3,298.4 686.9,298.6 687.7,299.0 688.5,299.4 689.2,299.8 690.0,300.3 690.8,300.8 691.6,301.3 692.4,301.8 693.2,302.3 693.9,302.6 694.3,302.8 694.6,302.9 695.1,302.3 695.0,302.0 694.7,301.6 694.2,301.1 693.5,300.4 692.9,299.7 692.2,299.1 691.5,298.4 690.8,297.7 690.0,297.1 689.1,296.5 688.2,296.0 687.2,295.5 686.0,295.2 684.7,295.3 683.6,295.7 682.5,296.3 681.6,297.1 681.0,298.2 680.7,299.3 680.7,300.4 680.6,301.3 680.6,302.2 680.4,303.0 680.2,303.9 680.1,304.7 680.1,305.1 680.2,305.4Z"/>
<path d="M693.7,305.6 693.4,305.7 692.9,305.9 692.2,306.4 691.3,307.0 690.5,307.7 689.7,308.5 689.0,309.4 688.4,310.2 687.8,310.9 687.1,311.5 686.4,312.0 685.6,312.6 684.7,313.4 683.8,314.3 683.2,315.3 682.6,316.3 682.2,317.3 681.7,318.2 681.3,319.2 680.9,320.1 680.5,320.8 680.0,321.5 679.4,322.2 678.6,322.8 678.0,323.3 677.7,323.7 677.5,324.0 677.9,324.7 678.2,324.7 678.8,324.5 679.5,324.3 680.5,323.8 681.5,323.2 682.4,322.4 683.2,321.5 683.8,320.5 684.3,319.6 684.9,318.8 685.4,317.9 685.9,317.1 686.4,316.4 687.0,315.8 687.6,315.2 688.4,314.5 689.3,313.7 690.1,312.8 690.7,311.8 691.2,310.8 691.6,310.0 692.2,309.2 692.7,308.4 693.4,307.6 693.9,306.9 694.1,306.5 694.2,306.2Z"/>
<path d="M704.2,307.2 703.9,307.0 703.4,306.9 702.7,306.8 701.6,306.7 700.5,306.7 699.4,306.9 698.3,307.2 697.2,307.6 696.2,308.2 695.3,308.9 694.5,309.8 693.9,310.6 693.3,311.4 692.7,312.3 692.2,313.1 691.7,313.9 691.2,314.6 690.6,315.3 690.0,315.9 689.3,316.6 688.8,317.1 688.4,317.5 688.3,317.8 688.8,318.5 689.1,318.5 689.6,318.4 690.3,318.2 691.3,317.7 692.2,317.2 693.1,316.5 693.9,315.8 694.7,315.0 695.3,314.3 696.0,313.5 696.6,312.7 697.1,312.0 697.7,311.4 698.2,310.9 698.9,310.3 699.5,309.9 700.3,309.5 701.0,309.1 701.8,308.9 702.7,308.7 703.5,308.5 704.0,308.3 704.2,308.1Z"/>
<path d="M718.8,306.0 718.7,305.6 718.4,305.2 717.9,304.5 717.2,303.7 716.9,303.1 716.8,302.4 716.8,301.7 716.9,300.8 717.1,299.7 717.2,298.6 717.3,297.5 717.4,296.5 717.5,295.4 717.6,294.4 717.7,293.3 717.8,292.1 717.7,290.8 717.4,289.6 716.8,288.5 716.1,287.5 715.6,286.9 715.2,286.5 714.9,286.3 714.2,286.7 714.1,287.1 714.3,287.6 714.5,288.4 714.9,289.4 715.0,290.2 715.0,291.0 714.9,291.9 714.7,292.8 714.5,293.9 714.3,295.0 714.1,296.1 714.0,297.2 713.9,298.3 713.9,299.4 713.9,300.5 713.9,301.8 714.2,303.1 714.8,304.2 715.7,305.2 716.7,305.9 717.4,306.3 717.9,306.5 718.2,306.6Z"/>
<path d="M728.1,308.8 728.0,309.1 728.0,309.6 728.0,310.3 728.0,311.3 728.1,312.3 728.1,313.3 728.1,314.2 728.2,315.1 728.0,315.7 727.8,316.2 727.4,316.7 726.8,317.3 726.1,318.2 725.5,319.1 725.0,320.1 724.6,321.1 724.3,322.0 723.9,322.8 723.6,323.7 723.3,324.5 722.9,325.0 722.5,325.5 722.0,326.0 721.1,326.4 720.2,327.0 719.4,327.7 718.7,328.5 718.1,329.3 717.7,329.9 717.4,330.4 717.3,330.7 718.0,331.2 718.2,331.1 718.6,330.8 719.2,330.4 719.9,329.8 720.6,329.3 721.4,328.9 722.1,328.6 723.1,328.3 724.2,327.7 725.1,327.0 725.9,326.0 726.4,325.1 726.9,324.1 727.3,323.2 727.7,322.3 728.0,321.4 728.3,320.7 728.7,320.0 729.2,319.3 729.9,318.5 730.4,317.4 730.7,316.2 730.8,315.0 730.5,313.9 730.3,313.0 730.1,312.0 729.8,311.0 729.5,310.1 729.3,309.4 729.1,308.9 728.9,308.7Z"/>
<path d="M740.4,304.5 740.6,304.3 740.8,303.9 741.1,303.2 741.3,302.5 741.7,302.0 742.1,301.6 742.6,301.4 743.5,301.1 744.4,300.6 745.3,299.8 746.0,299.0 746.5,298.2 746.9,297.8 747.3,297.5 747.8,297.3 748.6,297.0 749.7,296.4 750.6,295.6 751.3,294.7 751.7,293.9 752.0,293.5 752.3,293.1 752.7,292.9 753.5,292.7 754.4,292.4 755.3,292.2 756.2,291.9 757.1,291.6 757.8,291.4 758.2,291.2 758.4,291.0 758.2,290.2 758.0,290.1 757.5,290.0 756.8,290.0 755.9,290.1 755.0,290.1 754.1,290.2 753.1,290.2 752.1,290.3 751.0,290.6 749.9,291.2 749.1,292.1 748.6,292.9 748.2,293.3 747.8,293.6 747.3,293.9 746.5,294.1 745.4,294.7 744.5,295.5 743.8,296.4 743.4,297.3 743.1,297.8 742.7,298.3 742.2,298.7 741.3,299.2 740.5,300.0 739.9,300.9 739.6,301.9 739.5,302.9 739.5,303.6 739.5,304.1 739.6,304.4Z"/>
<path d="M660.9,312.3 660.7,312.4 660.2,312.6 659.7,313.1 659.0,313.8 658.3,314.5 657.6,315.3 657.0,316.1 656.5,317.0 656.0,318.0 655.7,319.1 655.6,320.2 655.5,321.2 655.6,322.3 655.7,323.3 655.9,324.3 656.2,325.3 656.7,326.4 657.4,327.3 658.3,328.0 659.2,328.5 659.9,328.8 660.4,328.9 660.7,328.9 661.2,328.2 661.1,327.9 660.8,327.5 660.4,326.9 659.8,326.3 659.5,325.7 659.3,325.2 659.2,324.6 659.2,323.8 659.1,322.9 659.1,322.1 659.1,321.2 659.1,320.4 659.2,319.7 659.3,319.0 659.5,318.3 659.8,317.5 660.1,316.7 660.4,315.9 660.8,315.1 661.2,314.3 661.5,313.6 661.7,313.1 661.7,312.8Z"/>
<path d="M668.4,316.4 668.3,316.7 668.3,317.3 668.3,318.1 668.4,319.3 668.7,320.5 669.3,321.6 670.1,322.6 671.0,323.4 671.9,324.2 672.9,324.8 673.9,325.4 674.9,326.0 675.8,326.5 676.7,327.0 677.6,327.6 678.5,328.2 679.5,328.8 680.4,329.4 681.3,330.0 682.2,330.6 683.1,331.2 684.1,331.8 685.1,332.4 686.1,332.9 686.8,333.3 687.4,333.5 687.7,333.6 688.1,333.0 687.9,332.7 687.5,332.3 686.9,331.7 686.1,331.0 685.3,330.3 684.4,329.5 683.6,328.8 682.8,328.0 681.9,327.3 681.1,326.6 680.2,325.9 679.2,325.2 678.3,324.6 677.3,324.0 676.2,323.4 675.2,322.9 674.3,322.5 673.4,322.0 672.5,321.4 671.7,320.9 671.0,320.3 670.5,319.7 670.1,318.9 669.8,317.9 669.5,317.1 669.3,316.5 669.1,316.3Z"/>
<path d="M681.1,313.1 681.0,313.3 680.8,313.8 680.6,314.5 680.4,315.5 680.4,316.7 680.7,317.8 681.3,318.9 682.0,319.8 682.5,320.5 683.0,321.2 683.6,321.9 684.1,322.7 684.6,323.4 685.0,324.1 685.5,324.8 686.0,325.8 686.7,326.7 687.6,327.4 688.6,328.0 689.7,328.3 690.4,328.5 690.9,328.5 691.2,328.5 691.6,327.7 691.4,327.4 691.1,327.0 690.5,326.5 689.8,326.0 689.3,325.5 689.0,324.9 688.7,324.3 688.5,323.5 688.1,322.5 687.6,321.5 687.0,320.6 686.4,319.8 685.8,319.0 685.1,318.3 684.4,317.5 683.7,317.0 683.3,316.5 682.9,316.0 682.7,315.4 682.5,314.5 682.4,313.8 682.2,313.3 682.0,313.1Z"/>
<path d="M695.5,314.2 695.7,314.4 696.2,314.5 697.0,314.6 697.9,314.7 698.6,315.0 699.3,315.3 699.8,315.8 700.5,316.5 701.5,317.1 702.7,317.6 703.9,317.9 705.0,317.9 705.9,318.0 706.8,318.1 707.7,318.2 708.5,318.3 709.3,318.5 710.0,318.8 710.7,319.1 711.6,319.6 712.6,320.1 713.6,320.5 714.6,320.8 715.7,321.0 716.4,321.0 717.0,321.0 717.2,321.0 717.5,320.1 717.3,319.9 716.8,319.7 716.1,319.3 715.3,318.9 714.5,318.5 713.8,318.0 713.1,317.5 712.4,316.7 711.5,316.1 710.4,315.5 709.3,315.1 708.2,314.9 707.2,314.7 706.1,314.6 705.0,314.6 704.1,314.6 703.5,314.5 702.8,314.4 702.2,314.1 701.3,313.5 700.3,313.1 699.1,312.8 698.0,312.8 696.9,312.9 696.2,313.1 695.7,313.2 695.4,313.4Z"/>
<path d="M706.4,319.1 706.1,319.0 705.6,318.9 704.9,318.9 703.9,319.0 702.8,319.0 701.8,319.1 700.8,319.3 699.7,319.5 698.7,319.9 697.7,320.3 696.7,320.9 696.0,321.6 695.3,322.0 694.6,322.3 693.9,322.6 693.1,322.7 692.3,322.8 691.5,322.7 690.8,322.5 689.9,322.2 689.2,321.9 688.7,321.8 688.4,321.8 688.1,322.3 688.2,322.6 688.6,323.0 689.1,323.5 690.0,324.1 691.0,324.6 692.1,324.9 693.2,325.1 694.4,325.0 695.5,324.8 696.6,324.4 697.6,323.8 698.3,323.1 699.0,322.7 699.8,322.3 700.5,321.9 701.4,321.6 702.3,321.3 703.2,321.0 704.2,320.7 705.1,320.4 705.8,320.2 706.3,320.0 706.5,319.8Z"/>
<path d="M721.8,314.0 721.7,314.2 721.5,314.8 721.4,315.6 721.2,316.7 721.0,317.7 720.9,318.8 720.8,319.9 720.7,320.8 720.4,321.4 720.1,321.9 719.7,322.3 718.9,322.7 718.0,323.3 717.1,323.8 716.2,324.4 715.4,324.9 714.7,325.2 714.0,325.4 713.3,325.5 712.4,325.4 711.6,325.2 710.9,324.9 710.2,324.4 709.6,323.7 709.0,323.1 708.5,322.8 708.3,322.6 707.6,323.1 707.6,323.4 707.8,324.0 708.2,324.7 708.7,325.7 709.5,326.7 710.5,327.5 711.7,328.0 713.0,328.4 714.3,328.5 715.6,328.3 716.8,327.9 717.9,327.3 718.9,326.7 719.8,326.1 720.7,325.5 721.8,324.8 722.7,323.8 723.3,322.5 723.5,321.2 723.5,320.0 723.4,318.9 723.3,317.8 723.2,316.7 723.1,315.6 723.0,314.8 722.8,314.3 722.7,314.0Z"/>
<path d="M733.3,317.1 733.3,317.4 733.5,317.9 733.8,318.6 734.1,319.5 734.3,320.3 734.5,321.2 734.5,322.0 734.4,322.9 734.3,323.9 734.2,324.8 734.0,325.7 733.8,326.9 733.8,328.1 734.2,329.4 734.8,330.5 735.7,331.4 736.6,332.1 737.6,332.7 738.7,333.2 739.8,333.5 740.8,333.7 741.8,334.0 742.8,334.1 743.7,334.3 744.4,334.5 745.0,334.8 745.6,335.3 746.1,336.1 746.6,336.7 747.0,337.0 747.2,337.2 747.9,336.8 747.8,336.5 747.7,336.1 747.4,335.3 747.0,334.3 746.3,333.4 745.5,332.6 744.4,332.1 743.4,331.7 742.5,331.4 741.5,331.1 740.6,330.8 739.8,330.4 739.1,330.1 738.4,329.6 737.8,329.1 737.3,328.6 737.0,328.1 736.8,327.6 736.7,327.0 736.9,326.2 736.9,325.1 736.9,324.0 736.9,323.0 736.8,321.9 736.5,320.8 736.2,319.7 735.7,318.7 735.0,317.9 734.6,317.3 734.2,316.9 734.0,316.7Z"/>
<path d="M743.2,316.3 742.9,316.3 742.4,316.5 741.6,316.8 740.6,317.3 739.8,317.5 738.9,317.6 738.0,317.6 737.0,317.3 735.9,317.1 734.8,317.0 733.7,316.8 732.6,316.7 731.7,316.5 730.8,316.2 729.9,315.9 729.0,315.5 728.3,315.0 727.5,314.5 726.8,313.9 726.2,313.2 725.8,312.6 725.5,311.9 725.4,311.2 725.4,310.2 725.4,309.0 725.4,307.9 725.3,306.8 725.2,305.6 725.1,304.8 725.0,304.2 724.9,304.0 724.1,303.9 724.0,304.2 723.8,304.8 723.7,305.6 723.5,306.7 723.3,307.8 723.2,308.9 723.0,309.9 722.8,311.1 722.8,312.5 723.1,313.8 723.7,315.0 724.5,316.0 725.4,316.9 726.4,317.7 727.5,318.4 728.6,318.9 729.8,319.4 731.0,319.6 732.3,319.8 733.4,319.8 734.5,319.9 735.6,319.9 736.7,319.9 737.9,320.0 739.2,319.8 740.4,319.5 741.5,318.9 742.4,318.2 743.1,317.6 743.5,317.2 743.6,317.0Z"/>
<path d="M667.3,326.1 667.1,326.3 666.9,326.8 666.6,327.6 666.2,328.6 665.8,329.7 665.4,330.7 665.0,331.7 664.5,332.7 664.1,333.7 663.7,334.7 663.3,335.7 662.8,336.8 662.5,338.0 662.3,339.2 662.2,340.4 662.2,341.6 662.5,342.9 663.0,344.1 663.7,345.1 664.5,346.0 665.2,346.8 665.8,347.6 666.5,348.4 667.1,349.3 667.6,350.0 668.0,350.4 668.3,350.6 668.9,350.2 668.8,349.9 668.7,349.4 668.3,348.6 667.9,347.6 667.4,346.6 666.8,345.6 666.2,344.6 665.6,343.8 665.2,343.0 665.0,342.2 664.9,341.4 664.9,340.5 665.0,339.5 665.2,338.6 665.4,337.6 665.8,336.6 666.1,335.6 666.4,334.5 666.7,333.5 667.0,332.4 667.3,331.3 667.6,330.2 667.8,329.1 667.9,328.0 668.0,327.1 668.0,326.6 668.0,326.3Z"/>
<path d="M681.0,326.5 681.0,326.8 681.1,327.3 681.3,328.0 681.7,328.9 682.1,329.8 682.6,330.7 683.2,331.6 683.8,332.4 684.4,333.1 685.0,333.9 685.6,334.6 686.4,335.4 687.3,336.1 688.4,336.6 689.6,336.8 690.8,336.8 691.9,336.6 693.0,336.2 693.9,335.5 694.6,334.8 695.1,334.2 695.3,333.8 695.4,333.5 694.9,332.9 694.7,332.9 694.2,333.1 693.5,333.4 692.8,333.9 692.1,334.1 691.4,334.2 690.8,334.2 690.0,334.0 689.4,333.8 688.9,333.5 688.4,333.1 687.9,332.5 687.2,331.8 686.6,331.2 685.9,330.5 685.2,329.9 684.6,329.2 684.0,328.6 683.4,327.9 682.8,327.1 682.3,326.6 681.9,326.2 681.7,326.1Z"/>
<path d="M694.6,326.5 694.4,326.7 694.1,327.1 693.8,327.8 693.5,328.7 693.3,329.7 693.2,330.8 693.4,331.9 693.8,332.8 694.0,333.6 694.2,334.4 694.3,335.2 694.5,336.2 695.0,337.3 695.7,338.3 696.7,339.1 697.8,339.6 698.9,339.9 700.1,339.9 701.2,339.7 702.2,339.2 703.1,338.8 703.9,338.3 704.7,337.7 705.4,337.1 705.9,336.6 706.2,336.2 706.4,336.0 705.9,335.3 705.7,335.3 705.2,335.4 704.5,335.7 703.7,336.0 702.9,336.3 702.1,336.6 701.3,336.8 700.6,336.9 700.0,336.9 699.5,336.8 698.9,336.6 698.4,336.3 698.1,336.0 697.8,335.7 697.6,335.3 697.4,334.5 697.1,333.5 696.8,332.6 696.3,331.7 695.9,331.0 695.6,330.4 695.4,329.7 695.4,329.0 695.4,328.2 695.5,327.5 695.4,327.0 695.3,326.7Z"/>
<path d="M704.8,327.7 704.6,327.6 704.1,327.6 703.5,327.7 702.6,327.9 701.7,328.1 700.8,328.2 700.0,328.4 699.1,328.7 698.2,329.0 697.3,329.4 696.5,329.9 695.8,330.4 695.1,330.8 694.5,331.2 693.8,331.6 693.1,331.9 692.5,332.0 691.9,332.1 691.3,332.0 690.6,331.7 689.9,331.5 689.5,331.4 689.2,331.4 688.9,332.0 689.0,332.2 689.3,332.5 689.8,333.0 690.6,333.6 691.5,334.0 692.6,334.2 693.6,334.1 694.6,333.9 695.5,333.6 696.4,333.2 697.3,332.7 698.0,332.2 698.6,331.7 699.3,331.3 700.0,331.0 700.7,330.6 701.5,330.3 702.3,329.9 703.1,329.5 703.9,329.1 704.5,328.8 704.9,328.5 705.0,328.3Z"/>
<path d="M716.1,323.3 715.9,323.5 715.8,324.0 715.6,324.8 715.4,325.8 715.3,326.9 715.3,328.0 715.6,329.1 715.9,330.0 716.0,330.8 716.0,331.5 715.9,332.3 715.6,333.2 715.4,334.4 715.3,335.5 715.4,336.6 715.6,337.6 715.6,338.2 715.4,338.7 715.1,339.2 714.6,339.8 714.0,340.3 713.4,340.7 712.7,341.0 711.8,341.3 711.1,341.4 710.3,341.3 709.5,341.1 708.6,340.7 707.9,340.4 707.4,340.2 707.2,340.2 706.8,340.8 707.0,341.0 707.3,341.4 707.9,341.9 708.8,342.5 709.8,343.0 710.9,343.3 712.0,343.4 713.2,343.2 714.3,342.9 715.4,342.4 716.4,341.8 717.3,340.9 717.9,339.8 718.3,338.6 718.4,337.4 718.2,336.3 718.1,335.5 718.2,334.6 718.3,333.8 718.5,332.8 718.5,331.6 718.4,330.4 718.0,329.3 717.5,328.4 717.2,327.6 717.0,326.8 716.9,325.9 716.9,324.9 716.9,324.1 716.9,323.6 716.8,323.4Z"/>
<path d="M725.4,325.7 725.3,325.9 725.4,326.4 725.4,327.1 725.6,328.0 725.9,329.0 726.4,329.9 727.0,330.7 727.6,331.4 727.9,331.9 728.2,332.4 728.3,333.0 728.4,333.8 728.5,334.7 728.6,335.6 728.7,336.5 728.9,337.4 729.2,338.3 729.6,339.3 730.1,340.1 730.6,340.9 731.1,341.4 731.4,341.8 731.6,341.9 732.2,341.6 732.2,341.3 732.2,340.8 732.0,340.2 731.7,339.4 731.5,338.6 731.3,337.8 731.3,337.0 731.2,336.2 731.2,335.3 731.1,334.4 731.1,333.5 731.0,332.5 730.7,331.4 730.1,330.5 729.4,329.6 728.7,329.1 728.2,328.6 727.7,328.0 727.2,327.4 726.9,326.6 726.5,326.0 726.3,325.6 726.1,325.5Z"/>
<path d="M735.3,321.9 735.0,321.8 734.5,321.9 733.7,322.0 732.8,322.1 732.0,322.1 731.4,321.9 730.8,321.5 730.1,320.9 729.5,320.2 728.9,319.5 728.3,318.8 727.9,318.0 727.6,317.3 727.4,316.6 727.3,315.8 727.3,314.7 727.1,313.5 726.7,312.4 726.0,311.3 725.3,310.5 724.7,309.8 724.1,309.0 723.5,308.1 723.0,307.3 722.6,306.6 722.3,306.2 722.0,306.0 721.4,306.3 721.4,306.6 721.5,307.1 721.7,307.8 722.0,308.9 722.4,309.9 722.9,310.9 723.5,311.8 724.0,312.7 724.3,313.4 724.5,314.1 724.5,314.8 724.5,315.9 724.6,317.1 724.9,318.3 725.4,319.4 726.1,320.4 726.9,321.3 727.7,322.1 728.6,322.8 729.6,323.4 730.7,323.9 731.9,324.0 733.1,323.8 734.1,323.3 734.9,323.0 735.3,322.7 735.5,322.5Z"/>
<path d="M660.7,332.4 660.4,332.4 659.9,332.5 659.2,332.8 658.3,333.1 657.3,333.7 656.4,334.3 655.6,335.0 655.0,335.7 654.3,336.3 653.7,336.9 653.0,337.4 652.4,337.9 651.9,338.1 651.5,338.2 651.0,338.2 650.2,338.0 649.1,337.8 648.0,337.7 647.0,337.8 645.8,337.9 644.7,338.3 643.7,338.9 642.9,339.8 642.4,340.7 642.1,341.4 641.9,341.8 641.9,342.1 642.6,342.6 642.8,342.5 643.2,342.2 643.8,341.7 644.4,341.1 645.0,340.8 645.5,340.6 646.1,340.6 646.9,340.7 647.8,340.8 648.6,341.0 649.4,341.2 650.5,341.5 651.8,341.5 653.0,341.3 654.2,340.7 655.1,340.0 655.9,339.2 656.6,338.4 657.2,337.5 657.7,336.7 658.2,336.1 658.7,335.4 659.3,334.8 660.1,334.3 660.6,333.8 661.0,333.4 661.1,333.2Z"/>
<path d="M667.9,331.7 667.8,332.0 667.9,332.5 668.1,333.1 668.3,333.9 668.4,334.6 668.4,335.3 668.4,336.0 668.3,337.0 668.5,338.2 669.0,339.3 669.8,340.2 670.7,340.9 671.5,341.4 672.3,341.8 673.1,342.2 673.8,342.5 674.3,342.8 674.7,343.1 675.1,343.6 675.5,344.3 675.8,344.9 676.1,345.3 676.3,345.5 677.2,345.3 677.3,345.0 677.4,344.5 677.4,343.8 677.3,342.8 676.9,341.8 676.4,340.9 675.6,340.0 674.8,339.4 674.1,338.9 673.4,338.4 672.7,337.9 672.1,337.5 671.9,337.3 671.7,337.0 671.6,336.7 671.5,335.9 671.3,334.8 670.9,333.9 670.4,333.0 669.8,332.2 669.3,331.7 669.0,331.4 668.7,331.3Z"/>
<path d="M681.2,331.0 681.2,330.7 681.0,330.2 680.8,329.6 680.4,328.8 679.9,327.9 679.5,327.2 679.0,326.4 678.5,325.6 678.0,324.9 677.5,324.2 677.1,323.5 676.5,322.7 675.6,321.9 674.6,321.2 673.5,320.9 672.6,320.8 671.9,320.7 671.3,320.5 670.7,320.2 670.0,319.7 669.5,319.3 669.0,319.1 668.8,319.1 668.1,319.7 668.1,320.0 668.3,320.4 668.6,321.0 669.2,321.9 669.9,322.6 670.8,323.3 671.7,323.8 672.6,324.0 673.0,324.3 673.4,324.6 673.7,324.9 674.1,325.6 674.7,326.3 675.3,327.0 676.0,327.7 676.6,328.3 677.3,328.9 677.9,329.5 678.6,330.1 679.2,330.7 679.8,331.2 680.2,331.4 680.4,331.5Z"/>
<path d="M694.5,335.7 694.2,335.8 693.7,336.1 693.0,336.6 692.1,337.3 691.3,338.1 690.4,338.8 689.6,339.6 688.9,340.3 688.3,340.7 687.7,340.9 687.0,340.9 685.9,340.9 684.6,341.1 683.3,341.5 682.1,342.3 681.3,343.1 680.5,343.7 679.8,344.3 678.9,344.8 678.0,345.4 676.9,346.0 676.0,346.8 675.2,347.7 674.5,348.6 674.0,349.4 673.7,349.9 673.7,350.2 674.3,350.7 674.6,350.6 675.1,350.3 675.7,349.8 676.5,349.1 677.4,348.6 678.2,348.1 679.1,347.8 680.2,347.4 681.3,346.9 682.4,346.3 683.4,345.6 684.1,344.9 684.8,344.6 685.4,344.3 686.1,344.2 687.3,344.2 688.6,343.9 689.8,343.3 690.9,342.4 691.6,341.4 692.3,340.5 692.9,339.6 693.6,338.7 694.2,337.8 694.7,337.1 695.0,336.6 695.1,336.3Z"/>
<path d="M703.8,331.8 703.5,332.0 703.3,332.5 703.1,333.3 702.8,334.2 702.5,335.1 702.1,335.9 701.7,336.7 701.1,337.6 700.7,338.8 700.4,340.0 700.4,341.3 700.6,342.5 700.9,343.6 701.3,344.7 701.8,345.7 702.4,346.8 703.3,347.8 704.4,348.5 705.5,348.9 706.7,349.0 707.5,349.0 708.0,349.0 708.3,348.9 708.5,348.0 708.3,347.8 707.9,347.5 707.2,347.1 706.3,346.7 705.8,346.3 705.4,345.8 705.1,345.2 704.8,344.4 704.6,343.5 704.3,342.7 704.1,341.8 704.0,341.0 704.0,340.3 704.0,339.6 704.2,338.9 704.5,338.0 704.8,336.8 705.0,335.7 705.1,334.6 705.0,333.5 704.9,332.7 704.8,332.2 704.6,331.9Z"/>
<path d="M717.8,331.7 718.0,331.5 718.2,331.0 718.5,330.3 718.8,329.2 718.9,328.0 718.6,326.8 718.0,325.7 717.1,324.7 716.0,324.0 714.8,323.5 713.5,323.4 712.4,323.5 711.6,323.6 710.8,323.5 710.1,323.3 709.1,323.0 708.1,322.6 707.0,322.4 706.0,322.2 704.9,322.1 704.1,322.0 703.6,322.0 703.3,322.1 703.1,322.9 703.3,323.1 703.8,323.4 704.5,323.7 705.4,324.1 706.3,324.5 707.2,324.9 708.1,325.4 709.1,325.9 710.2,326.3 711.4,326.6 712.6,326.6 713.6,326.5 714.2,326.5 714.8,326.6 715.4,326.9 716.0,327.4 716.4,327.8 716.7,328.4 716.9,329.1 716.8,330.0 716.9,330.8 716.9,331.3 717.0,331.6Z"/>
<path d="M732.2,333.2 732.5,333.3 733.0,333.3 733.8,333.4 735.0,333.4 736.1,333.1 737.2,332.6 738.2,331.8 739.0,330.9 739.6,330.1 740.3,329.2 740.9,328.3 741.4,327.5 742.0,326.8 742.6,326.1 743.2,325.4 743.9,324.8 744.7,324.2 745.5,323.7 746.4,323.2 747.3,322.7 748.0,322.3 748.4,322.0 748.6,321.8 748.4,321.1 748.1,321.1 747.5,321.1 746.8,321.2 745.7,321.5 744.6,321.8 743.6,322.3 742.6,322.8 741.6,323.4 740.7,324.1 739.8,324.9 739.1,325.8 738.5,326.8 737.9,327.6 737.4,328.5 736.8,329.4 736.4,330.2 735.9,330.8 735.3,331.2 734.6,331.6 733.6,331.8 732.9,332.1 732.4,332.3 732.1,332.4Z"/>
<path d="M743.3,334.9 743.0,335.0 742.5,335.3 741.9,335.8 741.0,336.5 740.2,337.2 739.4,337.7 738.5,338.3 737.4,338.8 736.4,339.6 735.6,340.5 734.9,341.6 734.4,342.8 734.0,344.1 733.9,345.3 734.0,346.6 734.2,347.6 734.2,348.4 734.1,349.2 733.8,350.0 733.2,350.8 732.8,351.5 732.5,352.1 732.4,352.4 733.0,352.8 733.3,352.7 733.7,352.4 734.4,351.8 735.3,351.0 736.0,350.0 736.5,348.8 736.6,347.5 736.6,346.4 736.6,345.5 736.8,344.6 737.0,343.8 737.4,342.9 737.8,342.2 738.3,341.5 738.9,340.9 739.8,340.3 740.7,339.5 741.6,338.7 742.3,337.8 743.0,336.9 743.5,336.2 743.7,335.7 743.8,335.4Z"/>
<path d="M664.5,339.3 664.3,339.1 664.0,338.8 663.4,338.3 662.7,337.8 661.9,337.2 661.2,336.7 660.4,336.2 659.6,335.6 658.9,335.1 658.2,334.6 657.5,334.0 656.8,333.4 656.0,332.8 655.1,332.3 654.2,331.8 653.4,331.4 652.6,331.1 651.9,330.7 651.2,330.2 650.5,329.7 649.9,329.2 649.4,328.7 648.9,328.0 648.5,327.4 648.3,326.7 648.2,326.1 648.2,325.3 648.4,324.5 648.6,323.8 648.7,323.4 648.6,323.1 648.0,322.9 647.9,323.0 647.6,323.4 647.3,324.1 646.8,325.0 646.5,326.0 646.5,327.0 646.7,328.0 647.1,329.0 647.6,329.9 648.2,330.8 648.9,331.5 649.7,332.2 650.5,332.8 651.4,333.3 652.3,333.8 653.1,334.2 653.9,334.6 654.6,335.0 655.3,335.4 656.1,336.0 656.9,336.5 657.7,337.0 658.6,337.4 659.4,337.8 660.3,338.2 661.1,338.6 661.9,339.0 662.8,339.4 663.4,339.7 663.9,339.8 664.1,339.9Z"/>
<path d="M676.5,339.6 676.2,339.7 675.7,339.9 675.1,340.4 674.3,341.0 673.5,341.7 672.7,342.4 672.0,343.2 671.3,344.1 670.7,345.2 670.4,346.3 670.3,347.6 670.4,348.7 670.5,349.7 670.6,350.6 670.7,351.6 670.8,352.6 670.9,353.6 671.1,354.6 671.3,355.6 671.5,356.5 671.6,357.4 671.7,358.2 671.6,359.1 671.5,360.1 671.5,360.8 671.5,361.3 671.5,361.6 672.4,361.9 672.6,361.7 672.9,361.2 673.2,360.5 673.6,359.6 673.9,358.5 674.1,357.4 674.2,356.3 674.2,355.3 674.2,354.3 674.1,353.3 674.1,352.3 674.1,351.3 674.0,350.3 673.9,349.3 673.8,348.3 673.6,347.4 673.6,346.8 673.7,346.2 673.9,345.5 674.2,344.8 674.7,344.0 675.2,343.2 675.8,342.4 676.3,341.6 676.8,341.0 677.0,340.5 677.1,340.2Z"/>
<path d="M689.2,343.3 689.4,343.4 689.8,343.6 690.5,343.8 691.4,344.0 692.3,344.1 693.3,344.1 694.3,344.1 695.3,343.9 696.3,343.5 697.3,342.9 698.1,342.1 698.6,341.3 699.1,340.4 699.5,339.6 699.8,338.7 700.1,337.8 700.4,336.8 700.5,335.9 700.5,334.9 700.4,334.0 700.3,333.3 700.1,332.8 700.0,332.6 699.3,332.6 699.1,332.8 699.0,333.2 698.8,333.9 698.7,334.7 698.5,335.5 698.2,336.2 697.9,336.9 697.5,337.7 697.1,338.4 696.6,339.1 696.2,339.8 695.8,340.4 695.5,340.8 695.0,341.2 694.5,341.4 693.8,341.7 693.1,341.9 692.3,342.0 691.4,342.2 690.6,342.2 689.9,342.3 689.5,342.5 689.2,342.6Z"/>
<path d="M704.0,345.3 704.1,345.6 704.3,345.9 704.7,346.5 705.2,347.1 705.6,347.8 705.9,348.4 706.1,349.1 706.2,350.1 706.6,351.1 707.3,351.9 708.2,352.6 709.2,353.1 710.3,353.3 711.5,353.2 712.5,352.9 713.4,352.4 714.2,351.9 715.0,351.3 715.7,350.7 716.5,350.1 717.1,349.2 717.6,348.3 717.9,347.2 717.9,346.3 718.0,345.6 718.2,344.9 718.5,344.3 719.0,343.6 719.3,343.0 719.6,342.6 719.6,342.4 719.1,341.9 718.9,342.0 718.5,342.3 718.0,342.7 717.3,343.4 716.7,344.1 716.2,345.0 715.9,345.9 715.7,346.8 715.5,347.4 715.1,347.8 714.7,348.2 714.1,348.7 713.4,349.1 712.7,349.6 712.0,350.0 711.4,350.4 710.9,350.5 710.5,350.6 710.0,350.5 709.4,350.4 708.9,350.1 708.6,349.8 708.3,349.3 708.0,348.5 707.6,347.6 707.0,346.8 706.4,346.1 705.6,345.5 705.1,345.1 704.7,344.9 704.5,344.8Z"/>
<path d="M712.3,342.7 712.2,342.5 711.9,342.1 711.3,341.6 710.7,341.0 710.0,340.3 709.3,339.7 708.7,339.0 708.0,338.2 707.0,337.6 705.9,337.3 704.7,337.2 703.5,337.4 702.4,337.9 701.5,338.6 700.8,339.5 700.3,340.6 700.0,341.7 699.9,342.8 700.1,343.9 700.4,345.0 700.9,345.9 701.4,346.8 701.9,347.6 702.5,348.4 703.0,348.9 703.3,349.2 703.6,349.4 704.1,349.0 704.1,348.8 703.9,348.3 703.7,347.6 703.3,346.8 702.9,346.0 702.7,345.2 702.5,344.3 702.3,343.5 702.3,342.8 702.4,342.2 702.7,341.6 703.0,341.0 703.4,340.5 703.8,340.2 704.3,339.9 705.0,339.8 705.5,339.8 706.1,339.8 706.6,340.1 707.3,340.6 708.1,341.2 708.9,341.7 709.7,342.2 710.6,342.7 711.2,343.0 711.6,343.2 711.9,343.3Z"/>
<path d="M724.9,342.8 725.1,342.9 725.6,343.0 726.3,343.1 727.2,343.1 728.1,343.2 728.9,343.3 729.8,343.4 730.7,343.7 731.9,343.7 733.0,343.6 734.0,343.2 734.8,342.8 735.3,342.6 735.7,342.6 736.2,342.7 737.0,343.0 738.0,343.3 739.0,343.5 740.1,343.5 741.1,343.4 741.9,343.3 742.8,343.3 743.7,343.3 744.6,343.3 745.3,343.3 745.8,343.3 746.0,343.2 746.2,342.4 745.9,342.3 745.5,342.1 744.9,341.8 743.9,341.5 743.0,341.3 742.0,341.1 741.1,341.0 740.2,340.9 739.4,340.8 738.7,340.6 738.0,340.3 737.1,339.9 735.9,339.6 734.7,339.7 733.6,340.1 732.8,340.6 732.2,340.9 731.6,341.0 730.9,341.1 730.0,341.1 729.0,341.1 728.1,341.2 727.1,341.3 726.2,341.5 725.5,341.7 725.0,341.9 724.8,342.1Z"/>
<path d="M738.5,342.0 738.3,341.8 737.9,341.6 737.2,341.3 736.2,341.1 735.3,340.8 734.3,340.7 733.3,340.5 732.3,340.4 731.3,340.3 730.3,340.3 729.3,340.4 728.4,340.4 727.7,340.4 727.1,340.3 726.4,340.1 725.8,339.9 725.3,339.7 725.0,339.3 724.6,338.9 724.3,338.2 724.0,337.3 723.6,336.4 723.3,335.5 722.9,334.7 722.6,334.0 722.4,333.6 722.2,333.4 721.3,333.5 721.2,333.8 721.1,334.3 721.1,335.0 721.2,336.0 721.3,337.0 721.4,338.0 721.6,338.9 721.8,340.0 722.3,341.2 723.0,342.2 724.0,342.9 725.2,343.5 726.3,343.8 727.4,344.0 728.6,344.0 729.6,343.8 730.5,343.7 731.4,343.6 732.3,343.5 733.2,343.4 734.1,343.3 735.1,343.2 736.0,343.2 736.9,343.2 737.7,343.1 738.2,343.0 738.4,342.9Z"/>
<path d="M659.0,348.3 658.7,348.5 658.5,348.8 658.1,349.4 657.8,350.1 657.4,350.6 656.9,351.0 656.4,351.3 655.6,351.6 654.8,352.1 654.0,352.6 653.2,353.2 652.5,353.9 651.8,354.7 651.2,355.7 650.9,356.7 650.7,357.7 650.6,358.7 650.7,359.7 650.9,360.7 651.2,361.6 651.4,362.2 651.7,362.7 651.9,362.8 652.7,362.7 652.8,362.5 652.9,362.0 652.9,361.3 652.9,360.5 653.0,359.7 653.2,359.0 653.4,358.3 653.7,357.7 654.0,357.1 654.3,356.6 654.8,356.1 655.3,355.7 655.9,355.1 656.5,354.6 657.2,354.2 658.0,353.6 658.7,352.8 659.3,351.9 659.7,350.9 659.8,349.9 659.9,349.3 659.8,348.8 659.7,348.5Z"/>
<path d="M674.1,350.4 674.4,350.5 674.9,350.5 675.7,350.6 676.7,350.5 677.5,350.7 678.2,351.0 678.8,351.4 679.6,352.2 680.8,352.9 682.1,353.2 683.4,353.3 684.7,353.1 685.7,352.9 686.8,352.6 687.8,352.4 688.9,352.1 690.1,351.7 691.1,351.2 692.2,350.6 693.2,349.9 694.1,349.0 694.8,348.0 695.3,346.8 695.5,345.7 695.6,344.9 695.7,344.3 695.6,344.0 694.8,343.7 694.6,343.9 694.3,344.4 693.8,345.1 693.4,346.0 692.9,346.7 692.3,347.2 691.6,347.6 690.8,348.0 689.9,348.3 689.0,348.6 688.1,348.8 687.1,349.0 686.0,349.2 685.0,349.4 683.9,349.7 683.1,349.9 682.4,350.0 681.8,349.9 681.2,349.7 680.3,349.1 679.1,348.6 677.9,348.4 676.6,348.5 675.5,348.8 674.7,349.1 674.2,349.3 673.9,349.5Z"/>
<path d="M685.6,350.3 685.5,350.6 685.4,351.2 685.3,352.0 685.4,353.1 685.4,354.2 685.5,355.3 685.6,356.4 685.7,357.4 685.9,358.5 686.0,359.5 686.1,360.6 686.3,361.8 686.8,363.0 687.5,364.2 688.5,365.1 689.7,365.8 690.8,366.2 692.1,366.5 693.3,366.5 694.4,366.4 695.2,366.2 695.8,366.0 696.0,365.9 696.0,365.0 695.8,364.8 695.2,364.6 694.4,364.5 693.4,364.3 692.6,364.0 691.9,363.7 691.2,363.2 690.6,362.7 690.1,362.1 689.8,361.6 689.6,360.9 689.5,360.0 689.3,358.9 689.1,357.9 688.8,356.8 688.5,355.8 688.2,354.8 687.8,353.7 687.5,352.7 687.2,351.7 686.9,350.9 686.7,350.4 686.5,350.2Z"/>
<path d="M696.9,354.2 696.7,354.1 696.2,354.0 695.5,353.9 694.5,353.8 693.5,353.9 692.5,354.0 691.5,354.1 690.5,354.4 689.6,354.6 688.7,354.9 687.7,355.2 686.9,355.5 686.1,355.7 685.3,355.9 684.5,356.0 683.6,356.0 682.6,356.1 681.6,356.3 680.6,356.5 679.7,356.7 679.0,357.0 678.5,357.2 678.3,357.3 678.4,358.0 678.7,358.1 679.2,358.1 679.9,358.2 680.8,358.1 681.7,358.2 682.6,358.2 683.5,358.3 684.5,358.4 685.6,358.4 686.6,358.3 687.7,358.0 688.6,357.7 689.5,357.3 690.4,357.0 691.3,356.7 692.1,356.3 692.9,356.0 693.8,355.7 694.7,355.5 695.6,355.3 696.3,355.2 696.8,355.0 697.0,354.8Z"/>
<path d="M709.2,353.3 709.0,353.5 708.9,354.0 708.7,354.6 708.4,355.6 708.5,356.7 708.7,357.7 709.3,358.7 709.9,359.4 710.4,359.9 710.7,360.6 710.9,361.2 711.2,362.1 711.6,363.1 712.2,364.0 712.9,364.9 713.8,365.6 714.7,366.1 715.6,366.6 716.6,366.9 717.7,367.2 718.9,367.1 720.0,366.8 721.0,366.3 721.7,365.6 722.3,365.1 722.9,364.7 723.6,364.4 724.4,364.2 725.1,364.0 725.5,363.8 725.8,363.6 725.6,362.9 725.4,362.8 724.9,362.8 724.2,362.7 723.3,362.8 722.3,363.0 721.3,363.3 720.4,363.7 719.7,364.2 719.1,364.4 718.7,364.4 718.2,364.4 717.5,364.1 716.8,363.9 716.2,363.5 715.6,363.1 715.0,362.6 714.6,362.2 714.2,361.6 713.9,361.1 713.6,360.2 713.1,359.3 712.4,358.4 711.7,357.6 711.0,357.1 710.6,356.7 710.3,356.2 710.1,355.6 710.1,354.8 710.1,354.1 710.0,353.6 709.9,353.4Z"/>
<path d="M719.6,356.1 719.9,356.1 720.3,355.9 721.0,355.6 721.8,355.2 722.5,354.9 723.2,354.7 724.0,354.6 724.8,354.5 725.6,354.5 726.4,354.6 727.1,354.6 727.8,354.8 728.3,354.9 728.7,355.1 729.1,355.5 729.4,356.0 729.7,356.6 729.9,357.1 730.0,357.8 729.9,358.7 729.8,359.4 729.8,359.9 729.9,360.2 730.7,360.4 731.0,360.2 731.3,359.9 731.6,359.2 732.1,358.3 732.4,357.2 732.4,356.0 732.1,354.9 731.6,353.7 730.9,352.8 729.9,352.0 728.7,351.5 727.6,351.3 726.5,351.2 725.4,351.3 724.4,351.4 723.3,351.7 722.3,352.1 721.3,352.7 720.5,353.4 719.8,354.1 719.4,354.7 719.1,355.1 719.0,355.4Z"/>
<path d="M732.9,350.0 733.1,350.1 733.6,350.2 734.2,350.3 735.1,350.4 735.8,350.6 736.5,350.8 737.2,351.2 737.8,351.7 738.6,352.3 739.4,352.7 740.3,353.2 741.0,353.5 741.4,353.8 741.6,354.2 741.9,354.7 742.0,355.4 742.1,356.1 742.2,356.9 742.2,357.7 742.1,358.5 742.1,359.5 742.2,360.5 742.3,361.4 742.5,362.3 742.6,363.0 742.6,363.8 742.5,364.6 742.3,365.4 742.2,366.1 742.1,366.5 742.1,366.8 742.7,367.0 742.9,366.8 743.2,366.5 743.5,365.9 743.9,365.0 744.3,364.1 744.5,363.1 744.6,362.1 744.5,361.2 744.5,360.4 744.6,359.6 744.7,358.7 744.8,357.8 744.9,356.8 744.8,355.8 744.7,354.8 744.4,353.8 743.9,352.7 743.2,351.9 742.2,351.2 741.3,350.9 740.5,350.6 739.7,350.2 738.9,349.9 738.1,349.4 737.1,349.1 736.2,348.9 735.2,348.9 734.2,349.0 733.6,349.1 733.1,349.2 732.9,349.3Z"/>
<path d="M742.9,350.4 742.9,350.1 742.7,349.5 742.4,348.8 741.9,347.7 741.2,346.7 740.4,345.8 739.5,345.0 738.4,344.3 737.2,343.8 735.9,343.6 734.5,343.7 733.3,344.0 732.1,344.4 731.0,345.0 729.9,345.7 729.1,346.4 728.4,346.8 727.7,347.2 726.9,347.4 726.1,347.5 725.2,347.6 724.4,347.5 723.6,347.3 722.5,346.8 721.3,346.6 720.0,346.6 718.8,346.9 717.8,347.4 717.0,347.8 716.6,348.1 716.4,348.4 716.6,349.1 717.0,349.2 717.5,349.1 718.3,348.9 719.3,348.7 720.1,348.7 720.9,348.8 721.6,349.1 722.5,349.7 723.7,350.2 724.9,350.5 726.2,350.6 727.5,350.6 728.8,350.3 730.0,349.8 731.1,349.1 732.0,348.4 732.7,347.8 733.5,347.4 734.3,347.0 735.1,346.7 735.9,346.6 736.6,346.6 737.3,346.7 738.1,347.1 738.9,347.6 739.7,348.1 740.4,348.8 741.0,349.6 741.6,350.3 742.0,350.7 742.2,350.8Z"/>
<path d="M664.9,362.2 665.0,361.9 665.1,361.4 665.2,360.7 665.2,359.7 665.3,358.8 665.6,358.0 665.9,357.2 666.3,356.3 666.7,355.3 667.1,354.3 667.4,353.3 667.7,352.2 667.9,351.1 668.1,350.1 668.2,349.0 668.2,348.0 668.3,347.0 668.3,346.0 668.4,345.0 668.4,344.1 668.5,343.5 668.8,343.0 669.1,342.4 669.8,341.7 670.6,340.9 671.2,340.0 671.8,339.0 672.2,338.0 672.4,337.3 672.6,336.8 672.6,336.5 671.8,336.1 671.6,336.2 671.2,336.6 670.7,337.2 670.1,338.0 669.5,338.7 668.9,339.2 668.1,339.8 667.2,340.4 666.3,341.2 665.7,342.3 665.2,343.5 665.0,344.7 664.9,345.7 664.8,346.7 664.7,347.8 664.7,348.8 664.6,349.7 664.5,350.7 664.4,351.6 664.3,352.6 664.1,353.5 663.9,354.4 663.7,355.4 663.4,356.4 663.2,357.5 663.2,358.6 663.3,359.8 663.5,360.8 663.7,361.6 663.9,362.0 664.0,362.3Z"/>
<path d="M676.6,357.6 676.9,357.7 677.4,357.8 678.1,357.8 679.1,357.7 680.0,357.6 681.0,357.4 682.0,357.2 683.0,356.9 684.0,356.5 684.9,356.0 685.8,355.4 686.7,354.7 687.5,353.7 688.0,352.6 688.2,351.4 688.2,350.4 688.2,349.7 688.4,349.0 688.6,348.3 689.0,347.5 689.4,346.8 689.5,346.3 689.5,346.0 688.9,345.6 688.6,345.6 688.2,345.9 687.6,346.4 686.9,347.1 686.3,348.0 685.8,349.0 685.4,350.1 685.3,351.0 685.1,351.5 684.8,352.0 684.4,352.4 683.9,352.9 683.2,353.4 682.6,353.8 681.9,354.2 681.1,354.6 680.2,355.0 679.4,355.4 678.6,355.7 677.7,356.1 677.0,356.4 676.6,356.6 676.4,356.9Z"/>
<path d="M688.1,360.7 687.9,360.5 687.4,360.3 686.7,360.2 685.8,360.0 685.3,359.7 684.8,359.3 684.4,358.9 683.9,358.1 683.1,357.3 682.2,356.6 681.2,356.1 680.2,355.7 679.5,355.5 678.8,355.1 678.2,354.7 677.5,354.3 677.0,353.8 676.6,353.3 676.2,352.7 675.9,351.9 675.6,351.2 675.4,350.8 675.2,350.6 674.3,350.7 674.2,351.0 674.1,351.5 674.0,352.2 674.0,353.3 674.2,354.4 674.7,355.4 675.3,356.4 676.1,357.2 677.0,357.9 677.9,358.5 678.9,359.0 679.8,359.3 680.4,359.6 681.0,360.0 681.6,360.4 682.3,361.1 683.3,361.7 684.4,362.1 685.6,362.2 686.7,362.1 687.4,361.9 687.9,361.8 688.1,361.6Z"/>
<path d="M699.4,358.4 699.4,358.7 699.5,359.2 699.8,360.0 700.2,361.0 700.7,362.0 701.3,363.0 702.0,363.9 702.7,364.7 703.2,365.4 703.6,366.1 703.9,366.9 704.2,368.0 704.7,369.1 705.4,370.2 706.3,371.1 707.1,371.7 707.6,372.2 707.9,372.8 708.2,373.4 708.4,374.3 708.5,375.3 708.7,376.4 708.9,377.4 709.0,378.4 709.1,379.4 709.2,380.5 709.2,381.5 709.2,382.5 709.2,383.3 709.2,383.9 709.3,384.2 710.1,384.3 710.3,384.0 710.5,383.5 710.7,382.7 710.9,381.7 711.1,380.6 711.3,379.5 711.4,378.4 711.4,377.3 711.4,376.2 711.4,375.1 711.3,374.0 711.2,372.7 710.8,371.5 710.2,370.3 709.3,369.4 708.4,368.7 707.9,368.2 707.4,367.5 707.1,366.9 706.7,365.9 706.1,364.8 705.4,363.8 704.6,362.9 703.7,362.2 703.0,361.6 702.3,360.9 701.7,360.1 701.2,359.3 700.7,358.6 700.3,358.2 700.1,358.0Z"/>
<path d="M717.2,358.8 717.2,359.1 717.4,359.5 717.7,360.2 718.1,361.0 718.4,361.8 718.6,362.6 718.7,363.4 718.8,364.4 719.1,365.6 719.7,366.6 720.5,367.5 721.4,368.2 722.3,368.8 723.2,369.3 724.1,369.7 725.1,370.1 725.9,370.5 726.8,370.8 727.7,371.2 728.6,371.6 729.6,371.9 730.6,372.2 731.6,372.4 732.6,372.5 733.3,372.6 733.8,372.6 734.1,372.5 734.3,371.7 734.1,371.6 733.6,371.3 733.0,371.0 732.1,370.7 731.3,370.3 730.5,369.8 729.7,369.4 728.9,368.8 728.1,368.3 727.2,367.8 726.3,367.4 725.4,367.0 724.7,366.5 723.9,366.1 723.1,365.7 722.4,365.2 722.0,364.8 721.6,364.4 721.4,363.8 721.2,362.9 720.8,361.9 720.3,360.9 719.7,360.1 719.0,359.3 718.5,358.8 718.1,358.5 717.8,358.3Z"/>
<path d="M728.5,361.3 728.8,361.4 729.4,361.5 730.2,361.5 731.3,361.5 732.3,361.6 733.2,361.8 734.2,362.1 735.2,362.6 736.3,363.0 737.5,363.2 738.7,363.3 740.0,363.2 741.3,362.9 742.5,362.4 743.5,361.6 744.4,360.7 745.1,359.8 745.8,358.9 746.5,358.0 747.2,357.1 747.8,356.1 748.3,355.1 748.8,354.0 749.1,352.9 749.4,352.1 749.5,351.5 749.5,351.2 748.9,351.0 748.7,351.2 748.3,351.6 747.9,352.4 747.4,353.3 746.8,354.2 746.2,355.0 745.5,355.8 744.7,356.5 744.0,357.3 743.2,358.1 742.4,358.9 741.8,359.6 741.1,360.1 740.4,360.4 739.6,360.6 738.7,360.7 737.8,360.7 736.8,360.6 735.8,360.4 734.8,360.1 733.6,359.9 732.4,359.8 731.2,359.9 730.1,360.1 729.2,360.3 728.7,360.5 728.4,360.6Z"/>
<path d="M737.5,361.3 737.7,361.3 738.3,361.2 739.0,361.0 740.1,360.6 741.1,360.2 742.1,359.8 743.1,359.3 744.0,358.8 744.7,358.6 745.4,358.6 746.1,358.7 747.1,359.0 748.4,359.2 749.6,359.0 750.8,358.6 751.9,357.9 752.8,357.3 753.7,356.6 754.5,355.9 755.4,355.1 756.1,354.2 756.7,353.1 757.2,352.0 757.4,351.0 757.7,350.3 758.2,349.8 758.8,349.3 759.7,348.9 760.5,348.6 761.0,348.4 761.2,348.2 761.0,347.5 760.7,347.5 760.2,347.6 759.4,347.7 758.2,348.0 757.2,348.5 756.3,349.2 755.6,350.2 755.2,351.2 754.8,352.0 754.2,352.7 753.6,353.3 752.9,353.9 752.1,354.5 751.2,355.1 750.4,355.7 749.6,356.2 749.0,356.4 748.3,356.5 747.6,356.5 746.6,356.2 745.3,356.2 744.1,356.4 743.0,356.9 742.1,357.6 741.2,358.2 740.4,358.8 739.5,359.3 738.5,359.8 737.9,360.2 737.4,360.5 737.2,360.7Z"/>
<path d="M660.3,369.1 660.1,369.0 659.5,369.0 658.8,369.0 657.7,369.1 656.5,369.4 655.5,370.0 654.6,370.8 654.0,371.8 653.4,372.8 652.9,373.8 652.6,374.8 652.3,375.7 652.1,376.4 651.7,377.1 651.3,377.7 650.5,378.4 649.8,379.5 649.5,380.6 649.5,381.8 649.8,382.9 650.0,383.6 650.2,384.1 650.4,384.3 651.1,384.3 651.3,384.0 651.3,383.5 651.4,382.7 651.4,381.8 651.6,381.1 651.9,380.6 652.4,380.2 653.2,379.7 654.0,378.8 654.7,377.8 655.2,376.7 655.5,375.7 655.7,374.8 656.0,374.0 656.4,373.2 656.7,372.4 657.1,371.8 657.6,371.3 658.3,370.9 659.1,370.6 659.8,370.3 660.3,370.0 660.5,369.8Z"/>
<path d="M671.4,369.4 671.5,369.7 671.7,370.1 672.1,370.6 672.7,371.2 673.1,371.8 673.3,372.5 673.5,373.1 673.6,374.1 674.1,375.1 674.9,376.1 675.9,376.8 676.9,377.2 677.7,377.5 678.5,377.8 679.3,378.2 680.0,378.4 680.3,378.6 680.6,378.9 680.8,379.2 681.1,379.8 681.3,380.6 681.6,381.4 681.8,382.2 682.0,382.9 682.0,383.6 682.0,384.2 681.8,384.9 681.5,385.6 681.2,386.3 681.1,386.7 681.1,387.0 681.9,387.5 682.1,387.4 682.5,387.1 682.9,386.6 683.6,385.8 684.1,384.9 684.5,384.0 684.7,382.9 684.7,381.8 684.6,380.9 684.5,379.9 684.4,379.0 684.1,377.9 683.5,376.8 682.7,375.8 681.7,375.1 680.6,374.7 679.8,374.4 678.9,374.1 678.0,373.9 677.3,373.7 677.0,373.6 676.6,373.3 676.4,373.0 676.0,372.2 675.5,371.3 674.9,370.5 674.1,369.8 673.3,369.3 672.7,368.9 672.2,368.7 672.0,368.7Z"/>
<path d="M683.7,373.1 683.7,373.4 683.9,373.9 684.3,374.6 684.9,375.6 685.7,376.4 686.8,377.0 687.9,377.4 689.0,377.4 689.8,377.6 690.6,377.9 691.3,378.2 692.1,378.7 693.1,379.3 694.1,379.8 695.1,380.2 696.0,380.5 696.6,380.8 697.1,381.2 697.6,381.7 698.0,382.4 698.3,383.1 698.4,383.8 698.5,384.6 698.5,385.4 698.3,386.1 698.0,386.8 697.5,387.4 696.8,388.0 696.2,388.5 695.8,388.9 695.7,389.2 696.1,389.9 696.4,389.8 696.9,389.6 697.6,389.3 698.6,388.8 699.5,388.1 700.3,387.1 700.8,386.1 701.1,384.8 701.2,383.6 701.1,382.4 700.8,381.2 700.2,380.0 699.4,379.0 698.5,378.1 697.4,377.5 696.3,377.1 695.4,376.8 694.5,376.4 693.6,376.0 692.6,375.5 691.5,375.1 690.3,374.9 689.1,374.8 688.1,374.9 687.5,374.9 686.8,374.7 686.2,374.3 685.6,373.7 685.0,373.1 684.6,372.8 684.3,372.6Z"/>
<path d="M698.8,367.5 698.8,367.8 699.1,368.3 699.4,368.9 700.1,369.8 700.9,370.6 701.8,371.3 702.9,371.8 703.9,372.2 704.9,372.4 706.0,372.7 707.0,372.8 708.1,372.9 709.3,372.8 710.4,372.6 711.5,372.2 712.5,371.7 713.4,371.2 714.2,370.6 715.1,370.1 715.9,369.5 716.5,369.0 716.8,368.6 717.0,368.4 716.6,367.5 716.3,367.5 715.8,367.5 715.0,367.7 714.1,368.0 713.1,368.2 712.2,368.5 711.3,368.8 710.4,369.0 709.7,369.1 708.9,369.2 708.2,369.2 707.3,369.1 706.4,369.1 705.5,369.0 704.6,368.9 703.8,368.8 703.0,368.6 702.3,368.4 701.6,368.1 700.9,367.5 700.2,367.1 699.8,366.9 699.5,366.9Z"/>
<path d="M707.5,366.9 707.6,367.1 707.9,367.5 708.4,367.9 709.1,368.5 709.7,369.0 710.3,369.6 710.8,370.2 711.2,370.8 711.6,371.4 711.9,372.0 712.1,372.7 712.2,373.5 712.5,374.3 712.7,375.2 712.9,376.0 713.2,377.0 713.6,377.9 714.1,378.7 714.7,379.6 715.3,380.3 715.9,380.9 716.6,381.6 717.3,382.2 717.9,382.8 718.5,383.2 718.9,383.5 719.1,383.5 719.7,383.0 719.6,382.8 719.4,382.4 719.1,381.8 718.6,381.0 718.1,380.3 717.7,379.6 717.2,378.8 716.8,378.1 716.5,377.4 716.2,376.7 716.0,376.0 715.8,375.2 715.6,374.4 715.4,373.5 715.2,372.7 714.9,371.8 714.4,370.8 713.9,369.9 713.2,369.1 712.5,368.5 711.7,367.9 710.9,367.4 710.1,366.9 709.2,366.6 708.6,366.4 708.1,366.3 707.9,366.3Z"/>
<path d="M721.0,365.8 720.9,365.6 720.4,365.4 719.8,365.1 719.0,364.8 718.0,364.5 717.1,364.3 716.1,364.2 715.1,364.2 714.0,364.4 713.1,364.7 712.1,365.2 711.2,365.8 710.5,366.5 709.8,367.2 709.2,368.1 708.9,368.8 708.5,369.3 708.1,369.7 707.6,370.0 706.9,370.3 706.3,370.4 705.7,370.4 705.0,370.3 704.2,370.0 703.6,369.7 703.1,369.6 702.9,369.6 702.5,370.2 702.7,370.4 703.0,370.8 703.5,371.2 704.3,371.8 705.3,372.2 706.3,372.4 707.3,372.4 708.4,372.2 709.4,371.8 710.3,371.2 711.0,370.3 711.5,369.5 712.0,368.9 712.5,368.4 713.0,367.9 713.6,367.4 714.1,367.0 714.7,366.7 715.4,366.5 716.2,366.4 717.0,366.3 717.8,366.3 718.6,366.3 719.5,366.4 720.2,366.5 720.6,366.5 720.9,366.4Z"/>
<path d="M730.1,373.5 730.1,373.8 730.3,374.3 730.6,375.0 731.1,375.9 731.5,376.8 732.0,377.7 732.3,378.6 732.8,379.6 733.4,380.6 734.1,381.5 734.9,382.4 735.8,383.1 736.6,383.7 737.3,384.3 738.1,384.9 738.8,385.5 739.3,386.1 739.8,386.7 740.2,387.3 740.7,388.3 741.5,389.3 742.4,390.2 743.5,390.8 744.6,391.2 745.5,391.5 746.5,391.8 747.5,392.1 748.5,392.4 749.3,392.6 749.8,392.6 750.1,392.6 750.4,391.7 750.3,391.5 749.8,391.2 749.2,390.8 748.3,390.3 747.4,389.8 746.5,389.2 745.7,388.7 744.9,388.3 744.4,387.8 744.0,387.3 743.7,386.7 743.3,385.8 742.8,384.7 742.1,383.7 741.3,382.8 740.4,382.1 739.6,381.4 738.7,380.8 737.8,380.2 737.0,379.7 736.4,379.2 735.8,378.7 735.2,378.1 734.7,377.3 734.1,376.4 733.4,375.6 732.7,374.8 732.0,374.0 731.5,373.4 731.1,373.1 730.8,373.0Z"/>
<path d="M743.6,369.8 743.6,369.6 743.4,369.1 743.1,368.5 742.6,367.6 742.0,366.8 741.2,366.1 740.4,365.5 739.5,365.0 738.9,364.6 738.2,364.1 737.7,363.5 737.2,363.0 736.9,362.4 736.7,361.9 736.6,361.3 736.6,360.6 736.7,359.9 736.8,359.2 737.1,358.6 737.5,357.8 737.9,357.1 738.4,356.3 738.9,355.5 739.4,354.7 739.9,353.9 740.3,353.1 740.8,352.2 741.2,351.3 741.4,350.7 741.6,350.2 741.6,350.0 741.0,349.6 740.8,349.7 740.4,350.1 740.0,350.6 739.4,351.4 738.8,352.1 738.2,352.7 737.6,353.4 737.0,354.1 736.4,354.8 735.8,355.6 735.2,356.4 734.6,357.3 734.1,358.3 733.8,359.3 733.6,360.4 733.7,361.6 733.9,362.7 734.3,363.8 735.0,364.7 735.8,365.5 736.7,366.1 737.5,366.7 738.5,367.1 739.4,367.4 740.1,367.7 740.7,368.2 741.4,368.7 742.0,369.3 742.5,369.8 742.8,370.1 743.1,370.3Z"/>
<path d="M667.7,376.8 667.5,376.6 667.0,376.2 666.3,375.8 665.2,375.3 664.1,374.9 662.9,374.6 661.7,374.5 660.4,374.4 659.1,374.6 657.8,375.1 656.7,375.7 655.8,376.4 655.3,376.7 654.7,376.8 654.0,376.9 652.9,376.7 651.5,376.8 650.2,377.2 649.0,377.9 648.0,378.8 647.2,379.6 646.4,380.5 645.7,381.4 645.0,382.2 644.4,382.9 643.6,383.5 642.8,384.0 641.9,384.5 641.1,384.9 640.6,385.2 640.4,385.4 640.7,386.3 641.0,386.3 641.6,386.2 642.4,386.1 643.6,385.8 644.7,385.4 645.8,384.9 646.8,384.2 647.7,383.4 648.5,382.7 649.4,382.0 650.2,381.4 650.9,380.8 651.5,380.5 652.1,380.4 652.8,380.3 653.9,380.5 655.3,380.4 656.7,380.0 657.9,379.2 658.7,378.4 659.3,377.9 660.0,377.6 660.8,377.3 661.7,377.2 662.7,377.1 663.7,377.1 664.6,377.2 665.7,377.5 666.5,377.6 667.1,377.7 667.4,377.6Z"/>
<path d="M677.4,379.0 677.2,378.9 676.7,378.8 676.1,378.6 675.2,378.5 674.3,378.3 673.4,378.1 672.6,377.9 671.6,377.6 670.6,377.5 669.5,377.6 668.4,377.9 667.5,378.3 666.6,378.7 665.8,379.1 664.9,379.5 664.0,380.1 663.2,380.9 662.6,381.9 662.2,382.9 662.1,384.1 662.2,385.2 662.5,386.2 663.1,387.1 663.8,387.8 664.3,388.3 664.7,388.6 664.9,388.7 665.5,388.2 665.5,387.9 665.3,387.5 665.0,386.9 664.6,386.2 664.4,385.5 664.4,384.9 664.5,384.3 664.7,383.6 664.9,383.2 665.3,382.8 665.7,382.5 666.4,382.1 667.1,381.7 667.9,381.3 668.7,381.0 669.4,380.6 670.1,380.4 670.7,380.2 671.4,380.2 672.2,380.2 673.2,380.3 674.1,380.3 675.1,380.2 676.0,380.1 676.7,380.0 677.1,379.9 677.4,379.8Z"/>
<path d="M689.2,376.9 689.1,376.6 688.6,376.3 688.0,375.9 687.1,375.3 686.2,374.8 685.4,374.2 684.7,373.6 683.9,372.8 683.0,372.2 682.0,371.5 681.1,371.0 680.1,370.5 679.2,370.1 678.4,369.6 677.6,369.1 676.7,368.5 675.6,367.9 674.5,367.5 673.4,367.3 672.3,367.2 671.5,367.2 670.9,367.2 670.6,367.3 670.5,368.0 670.7,368.2 671.2,368.5 672.0,368.7 673.0,369.1 673.8,369.4 674.5,369.9 675.2,370.5 676.0,371.2 676.9,371.9 677.8,372.5 678.8,373.1 679.8,373.6 680.6,374.0 681.5,374.5 682.3,375.0 683.2,375.6 684.2,376.1 685.2,376.6 686.3,377.0 687.3,377.3 688.1,377.5 688.7,377.6 689.0,377.5Z"/>
<path d="M706.5,376.8 706.8,376.8 707.3,376.6 708.0,376.2 709.0,375.7 709.9,374.9 710.6,373.9 711.1,372.8 711.4,371.6 711.6,370.6 711.7,369.5 711.9,368.5 711.9,367.5 712.0,366.7 712.2,365.9 712.4,365.1 712.7,364.2 713.0,363.4 713.4,362.5 713.9,361.6 714.3,360.8 714.7,360.1 714.8,359.6 714.9,359.2 714.2,358.7 713.9,358.8 713.4,359.1 712.8,359.6 712.0,360.3 711.3,361.1 710.6,361.9 709.9,362.8 709.4,363.8 708.9,364.9 708.6,366.0 708.3,367.1 708.3,368.2 708.2,369.2 708.2,370.2 708.1,371.2 708.1,372.0 708.0,372.7 707.8,373.4 707.4,374.0 706.8,374.7 706.3,375.3 706.0,375.8 705.9,376.1Z"/>
<path d="M714.1,379.0 713.8,379.1 713.3,379.4 712.7,379.8 711.8,380.5 711.1,381.4 710.5,382.4 710.2,383.5 710.1,384.8 710.2,386.0 710.7,387.1 711.4,388.2 712.2,388.9 712.8,389.6 713.3,390.3 713.8,391.0 714.3,392.0 715.1,392.9 716.1,393.6 717.2,394.1 718.5,394.4 719.6,394.4 720.8,394.1 721.8,393.6 722.7,392.9 723.3,392.4 723.6,392.0 723.8,391.8 723.4,391.2 723.1,391.2 722.6,391.4 721.9,391.7 721.0,392.1 720.3,392.3 719.6,392.3 718.9,392.2 718.1,391.9 717.5,391.5 717.0,391.0 716.6,390.5 716.2,389.6 715.6,388.6 714.9,387.7 714.1,386.9 713.4,386.3 713.0,385.8 712.7,385.2 712.5,384.6 712.4,383.8 712.5,383.0 712.7,382.3 713.1,381.6 713.7,380.8 714.2,380.2 714.4,379.8 714.5,379.5Z"/>
<path d="M728.9,375.9 729.1,375.9 729.7,375.9 730.5,375.8 731.5,375.7 732.6,375.4 733.7,375.0 734.7,374.5 735.6,373.9 736.5,373.2 737.4,372.6 738.2,372.0 739.1,371.2 739.9,370.4 740.6,369.5 741.2,368.4 741.6,367.5 742.0,367.0 742.5,366.5 743.1,366.1 744.0,365.7 745.0,365.1 745.9,364.4 746.8,363.7 747.5,362.9 748.2,362.3 749.0,361.7 749.8,361.1 750.7,360.6 751.3,360.2 751.8,359.9 752.0,359.7 751.7,359.0 751.4,359.0 750.9,359.1 750.1,359.4 749.1,359.7 748.1,360.1 747.1,360.7 746.1,361.3 745.3,361.9 744.5,362.4 743.7,362.8 742.9,363.2 741.8,363.6 740.8,364.2 739.8,365.1 739.1,366.1 738.6,367.1 738.2,367.9 737.7,368.6 737.1,369.3 736.4,369.9 735.7,370.7 735.0,371.3 734.2,372.0 733.5,372.7 732.7,373.2 731.9,373.7 731.1,374.1 730.1,374.5 729.4,374.8 728.9,375.0 728.7,375.2Z"/>
<path d="M742.4,377.2 742.2,377.2 741.7,377.2 741.0,377.3 740.1,377.5 739.1,377.9 738.3,378.5 737.6,379.4 737.1,380.3 736.6,381.1 736.2,382.0 735.9,382.9 735.6,383.8 735.3,384.6 734.9,385.3 734.5,386.1 734.1,386.8 733.7,387.5 733.2,388.1 732.6,388.8 732.0,389.5 731.3,390.3 730.9,391.3 730.6,392.3 730.4,393.4 730.5,394.5 730.8,395.5 731.3,396.4 731.9,397.2 732.3,397.7 732.6,398.1 732.8,398.2 733.4,397.9 733.4,397.6 733.2,397.2 732.9,396.5 732.6,395.8 732.4,395.0 732.3,394.3 732.4,393.6 732.6,392.9 732.9,392.2 733.3,391.7 733.8,391.2 734.5,390.6 735.2,389.9 735.8,389.1 736.4,388.3 736.9,387.4 737.4,386.5 737.7,385.5 738.0,384.6 738.3,383.7 738.5,382.8 738.7,382.0 739.0,381.1 739.3,380.4 739.6,379.8 740.0,379.3 740.6,378.9 741.4,378.5 742.0,378.2 742.5,378.0 742.6,377.8Z"/>
<path d="M660.6,391.7 660.8,391.9 661.3,392.0 662.1,392.2 662.9,392.3 663.6,392.6 664.1,392.9 664.5,393.4 665.0,394.2 665.8,395.0 666.7,395.7 667.8,396.3 668.9,396.7 670.0,396.9 671.2,396.9 672.4,396.8 673.5,396.5 674.6,395.9 675.5,395.3 676.3,394.4 676.8,393.5 677.2,392.9 677.4,392.4 677.5,392.1 676.8,391.6 676.6,391.7 676.1,391.9 675.5,392.4 674.8,393.0 674.1,393.4 673.5,393.6 672.8,393.8 672.0,393.8 671.2,393.8 670.5,393.7 669.7,393.6 669.0,393.3 668.3,393.0 667.7,392.6 667.1,392.2 666.4,391.4 665.4,390.8 664.3,390.4 663.1,390.3 662.1,390.4 661.3,390.6 660.8,390.7 660.6,390.9Z"/>
<path d="M672.8,385.2 672.5,385.1 672.0,385.1 671.3,385.3 670.3,385.5 669.5,385.6 668.6,385.7 667.7,385.8 666.8,385.8 666.0,385.8 665.1,385.7 664.3,385.6 663.6,385.4 663.2,385.3 662.8,385.0 662.5,384.7 662.0,383.9 661.2,382.9 660.2,382.2 659.1,381.7 658.1,381.5 657.3,381.3 656.6,381.0 655.9,380.6 655.2,380.0 654.6,379.6 654.2,379.3 653.9,379.3 653.3,379.9 653.3,380.1 653.5,380.6 653.9,381.2 654.5,382.1 655.2,382.9 656.1,383.6 657.0,384.2 657.9,384.5 658.4,384.9 658.8,385.3 659.1,385.8 659.6,386.7 660.4,387.7 661.5,388.4 662.7,388.9 663.9,389.0 665.0,389.1 666.1,389.0 667.1,388.9 668.2,388.6 669.2,388.3 670.1,387.9 671.1,387.5 671.9,387.0 672.6,386.5 672.9,386.2 673.1,386.0Z"/>
<path d="M686.4,388.4 686.1,388.5 685.7,388.9 685.1,389.4 684.3,390.2 683.6,391.1 682.9,392.1 682.4,393.1 682.0,394.0 681.5,394.8 681.0,395.4 680.5,396.0 679.6,396.8 678.8,397.8 678.3,399.0 678.0,400.3 678.1,401.4 678.0,402.2 677.8,402.9 677.4,403.7 676.9,404.5 676.4,405.2 676.1,405.7 676.1,406.0 676.7,406.5 677.0,406.5 677.4,406.2 678.1,405.7 679.0,405.0 679.8,404.1 680.4,403.0 680.8,401.8 680.9,400.7 681.2,400.1 681.5,399.5 681.9,399.0 682.7,398.3 683.5,397.3 684.2,396.3 684.7,395.1 684.9,394.1 685.2,393.2 685.6,392.3 686.0,391.4 686.5,390.5 686.8,389.7 687.0,389.2 687.1,388.9Z"/>
<path d="M699.7,387.0 699.5,387.1 699.0,387.4 698.5,387.8 697.8,388.4 697.1,388.8 696.4,389.2 695.7,389.4 695.0,389.5 694.3,389.5 693.8,389.4 693.2,389.2 692.5,388.8 691.6,388.3 690.8,387.9 690.0,387.4 689.0,387.0 687.9,386.7 686.8,386.6 685.7,386.8 684.8,387.2 684.1,387.5 683.7,387.8 683.5,388.0 683.7,388.7 683.9,388.7 684.4,388.8 685.2,388.7 686.0,388.6 686.7,388.7 687.4,388.9 688.0,389.2 688.7,389.7 689.5,390.2 690.3,390.7 691.1,391.2 692.0,391.7 693.1,392.1 694.3,392.2 695.4,392.0 696.5,391.7 697.5,391.1 698.3,390.5 699.1,389.7 699.6,388.8 700.0,388.2 700.2,387.8 700.3,387.5Z"/>
<path d="M706.1,385.1 706.1,385.4 706.4,385.8 706.8,386.4 707.4,387.2 708.1,387.9 708.8,388.6 709.6,389.3 710.5,389.9 711.5,390.4 712.6,390.7 713.7,390.8 714.9,390.7 716.0,390.5 717.0,390.1 718.0,389.6 718.8,389.0 719.6,388.6 720.3,388.1 721.1,387.7 722.0,387.3 723.0,386.6 723.8,385.7 724.3,384.7 724.6,383.7 724.9,382.9 725.3,382.1 725.7,381.3 726.2,380.6 726.6,379.9 726.8,379.5 726.8,379.2 726.3,378.8 726.0,378.9 725.6,379.2 725.1,379.7 724.4,380.4 723.7,381.1 723.1,382.0 722.6,382.8 722.2,383.6 721.8,384.1 721.3,384.5 720.8,384.8 719.9,385.1 719.0,385.5 718.1,386.0 717.2,386.5 716.4,387.1 715.8,387.4 715.1,387.7 714.4,387.9 713.7,388.0 713.0,388.1 712.3,388.0 711.6,387.8 710.8,387.4 710.1,387.0 709.3,386.5 708.6,386.0 707.8,385.4 707.3,384.9 706.8,384.7 706.6,384.6Z"/>
<path d="M719.3,390.3 719.0,390.4 718.6,390.7 718.1,391.2 717.4,391.9 716.8,392.6 716.2,393.4 715.7,394.3 715.2,395.1 714.8,395.8 714.3,396.5 713.9,397.1 713.4,397.7 713.0,398.1 712.6,398.4 712.1,398.6 711.2,398.7 710.2,399.0 709.3,399.3 708.4,399.8 707.5,400.3 707.0,400.7 706.6,401.0 706.5,401.3 706.8,402.0 707.1,402.1 707.5,402.0 708.2,401.9 709.1,401.7 709.9,401.5 710.7,401.4 711.5,401.4 712.6,401.4 713.7,401.2 714.8,400.7 715.7,399.9 716.4,399.0 717.0,398.1 717.5,397.2 717.9,396.3 718.1,395.4 718.4,394.6 718.7,393.8 719.1,393.0 719.5,392.2 719.8,391.6 719.9,391.1 720.0,390.8Z"/>
<path d="M735.1,387.8 735.0,388.1 734.9,388.6 734.9,389.4 735.0,390.5 735.2,391.6 735.6,392.7 736.1,393.7 736.8,394.7 737.7,395.6 738.7,396.3 739.9,396.8 740.9,397.1 741.8,397.3 742.6,397.6 743.4,398.0 744.3,398.4 745.3,398.8 746.3,399.2 747.3,399.5 748.3,399.8 749.3,400.1 750.4,400.3 751.4,400.4 752.5,400.5 753.3,400.5 753.8,400.4 754.1,400.3 754.2,399.5 754.0,399.3 753.6,399.0 752.8,398.7 751.9,398.4 751.0,398.1 750.1,397.7 749.3,397.2 748.4,396.8 747.5,396.3 746.7,395.8 745.8,395.4 744.9,394.9 743.9,394.4 742.8,394.0 741.8,393.7 740.8,393.6 740.2,393.4 739.6,393.1 739.0,392.6 738.4,392.1 737.8,391.4 737.4,390.7 737.0,390.0 736.7,389.0 736.4,388.3 736.1,387.9 735.9,387.6Z"/>
<path d="M743.6,391.2 743.3,391.1 742.8,391.1 742.1,391.1 741.1,391.1 740.2,391.1 739.3,391.0 738.4,390.8 737.5,390.7 736.8,390.4 736.0,390.1 735.3,389.7 734.4,389.2 733.4,388.7 732.3,388.4 731.2,388.3 730.1,388.3 729.1,388.3 728.1,388.4 727.1,388.5 726.1,388.6 725.4,388.7 724.9,388.9 724.6,389.0 724.6,389.7 724.9,389.9 725.4,390.0 726.1,390.2 727.1,390.3 728.0,390.4 729.0,390.6 730.0,390.7 730.9,390.9 731.6,391.1 732.4,391.4 733.1,391.7 733.9,392.2 734.9,392.7 736.0,393.0 737.1,393.2 738.2,393.3 739.3,393.3 740.3,393.1 741.3,392.9 742.3,392.6 743.0,392.4 743.5,392.1 743.7,392.0Z"/>
<path d="M665.2,400.3 665.3,400.6 665.6,401.0 666.0,401.5 666.8,402.3 667.6,402.9 668.6,403.3 669.7,403.6 670.6,403.6 671.4,403.8 672.2,404.0 672.9,404.3 673.7,404.8 674.6,405.3 675.6,405.6 676.7,405.9 677.6,406.1 678.5,406.2 679.4,406.5 680.3,406.7 681.1,407.0 681.9,407.3 682.7,407.7 683.5,408.1 684.3,408.6 685.1,409.1 686.0,409.6 686.8,410.0 687.7,410.5 688.3,410.8 688.8,411.0 689.0,411.1 689.4,410.5 689.3,410.3 688.9,410.0 688.4,409.5 687.7,408.8 686.9,408.2 686.2,407.6 685.5,407.0 684.7,406.3 683.9,405.7 683.0,405.2 682.0,404.7 681.1,404.3 680.1,404.0 679.1,403.7 678.1,403.5 677.2,403.3 676.4,403.1 675.6,402.8 674.8,402.5 673.9,402.1 672.9,401.7 671.8,401.5 670.7,401.5 669.8,401.6 669.0,401.6 668.3,401.4 667.6,401.1 666.9,400.6 666.3,400.2 665.9,399.9 665.6,399.8Z"/>
<path d="M681.7,393.9 681.5,394.1 681.2,394.5 680.8,395.1 680.3,396.0 679.9,397.0 679.7,398.0 679.5,399.0 679.5,400.1 679.6,401.2 680.0,402.3 680.5,403.3 681.0,404.0 681.2,404.5 681.3,405.0 681.3,405.6 681.1,406.5 681.1,407.7 681.5,408.8 682.1,409.9 682.8,410.7 683.5,411.3 684.2,412.0 684.9,412.6 685.6,413.3 686.2,413.7 686.6,414.0 686.8,414.1 687.4,413.6 687.4,413.3 687.1,412.9 686.8,412.3 686.2,411.5 685.7,410.7 685.2,409.9 684.7,409.1 684.2,408.5 684.0,407.9 684.0,407.4 684.0,406.9 684.3,406.0 684.3,404.8 684.1,403.6 683.5,402.5 682.9,401.7 682.5,401.1 682.2,400.5 682.0,399.8 681.9,399.0 681.9,398.2 681.9,397.4 682.0,396.5 682.2,395.7 682.3,395.0 682.4,394.5 682.4,394.2Z"/>
<path d="M689.3,399.9 689.6,400.0 690.1,400.1 690.9,400.2 691.9,400.2 693.0,400.2 694.0,400.2 695.1,400.2 696.0,400.2 696.9,400.3 697.8,400.5 698.6,400.8 699.5,401.2 700.4,401.6 701.2,402.0 702.0,402.5 702.8,403.0 703.4,403.5 703.9,404.1 704.3,404.8 704.8,405.7 705.5,406.7 706.4,407.6 707.4,408.3 708.4,408.7 709.4,409.1 710.3,409.5 711.3,409.9 712.3,410.3 713.0,410.6 713.5,410.7 713.8,410.8 714.2,410.1 714.0,409.9 713.6,409.5 712.9,409.1 712.1,408.5 711.2,407.9 710.3,407.4 709.4,406.8 708.6,406.3 708.0,405.7 707.6,405.1 707.2,404.5 706.9,403.5 706.3,402.4 705.5,401.5 704.6,400.6 703.6,400.0 702.6,399.4 701.6,398.9 700.6,398.5 699.5,398.2 698.3,397.9 697.2,397.8 696.0,397.9 694.9,398.0 693.9,398.2 692.8,398.4 691.8,398.6 690.8,398.7 690.0,398.9 689.5,399.1 689.2,399.2Z"/>
<path d="M705.8,393.8 706.1,393.8 706.6,393.8 707.2,393.8 708.2,393.6 709.1,393.2 710.0,392.7 710.8,392.0 711.5,391.1 712.0,390.2 712.4,389.1 712.5,388.0 712.5,387.0 712.5,386.1 712.5,385.3 712.4,384.4 712.4,383.6 712.4,382.9 712.4,382.2 712.5,381.5 712.7,380.6 712.9,379.7 712.9,378.7 713.0,377.8 712.9,376.7 712.7,375.7 712.2,374.7 711.6,373.9 710.9,373.2 710.3,372.8 709.9,372.6 709.7,372.5 709.0,373.1 709.1,373.4 709.2,373.8 709.6,374.4 710.0,375.1 710.2,375.7 710.3,376.2 710.2,376.8 710.1,377.5 709.9,378.3 709.7,379.0 709.4,379.8 709.1,380.7 708.9,381.6 708.8,382.6 708.7,383.7 708.8,384.6 708.9,385.5 708.9,386.4 709.0,387.3 709.2,388.0 709.2,388.6 709.1,389.1 709.0,389.7 708.7,390.3 708.3,390.8 707.9,391.3 707.4,391.7 706.7,392.1 706.1,392.4 705.7,392.7 705.6,392.9Z"/>
<path d="M718.4,395.1 718.7,395.2 719.2,395.3 720.0,395.4 721.0,395.4 722.1,395.4 723.2,395.3 724.2,395.2 725.3,395.0 726.5,394.7 727.5,394.2 728.5,393.6 729.3,393.0 730.0,392.6 730.7,392.2 731.5,391.9 732.4,391.7 733.5,391.3 734.5,390.9 735.5,390.3 736.4,389.8 737.0,389.3 737.4,388.9 737.5,388.7 737.2,387.9 736.9,387.8 736.4,387.9 735.6,388.1 734.6,388.3 733.7,388.5 732.8,388.7 731.8,388.8 730.8,388.9 729.6,389.1 728.5,389.6 727.5,390.2 726.6,390.8 725.9,391.2 725.2,391.6 724.4,392.0 723.5,392.3 722.6,392.6 721.7,392.9 720.7,393.2 719.8,393.5 719.0,393.8 718.5,394.0 718.3,394.2Z"/>
<path d="M728.5,393.8 728.7,393.9 729.2,394.0 730.0,394.2 731.0,394.3 732.0,394.4 733.1,394.4 734.1,394.5 735.2,394.4 736.3,394.3 737.4,393.9 738.4,393.3 739.4,392.6 740.2,391.7 740.8,390.7 741.3,389.7 741.5,388.5 741.6,387.3 741.5,386.2 741.2,385.1 740.7,384.2 740.5,383.4 740.4,382.7 740.5,381.9 740.7,381.0 740.9,380.2 741.0,379.7 741.0,379.5 740.4,379.2 740.2,379.4 739.9,379.8 739.5,380.5 739.0,381.5 738.7,382.5 738.6,383.6 738.8,384.8 739.1,385.7 739.2,386.5 739.2,387.3 739.1,388.0 738.8,388.8 738.5,389.5 738.1,390.1 737.6,390.7 737.0,391.3 736.3,391.7 735.6,392.0 734.9,392.3 734.0,392.4 733.0,392.5 732.0,392.6 731.0,392.7 730.0,392.8 729.2,392.9 728.7,393.1 728.5,393.2Z"/>
<path d="M740.7,398.7 740.6,399.0 740.6,399.5 740.7,400.3 740.8,401.3 740.7,402.2 740.6,403.1 740.4,403.9 740.2,404.7 739.8,405.4 739.4,405.9 738.8,406.4 738.1,406.9 737.3,407.3 736.5,407.8 735.7,408.2 734.7,408.7 733.6,409.5 732.7,410.6 732.2,411.9 732.1,412.9 731.9,413.6 731.6,414.1 731.2,414.7 730.6,415.2 730.1,415.6 729.5,415.7 728.8,415.8 727.9,415.5 727.1,415.4 726.6,415.3 726.3,415.3 726.0,416.2 726.1,416.4 726.6,416.7 727.3,417.1 728.3,417.6 729.4,417.9 730.7,417.9 731.9,417.5 733.0,416.8 733.9,416.0 734.7,415.0 735.2,413.8 735.4,412.8 735.7,412.4 736.0,412.0 736.4,411.7 737.2,411.4 738.2,410.8 739.2,410.2 740.1,409.6 741.0,408.8 741.8,407.8 742.4,406.7 742.8,405.5 743.0,404.3 743.0,403.2 742.9,402.1 742.7,401.0 742.3,399.9 742.0,399.2 741.8,398.7 741.6,398.5Z"/>
<path d="M656.4,404.9 656.2,405.1 656.0,405.5 655.8,406.2 655.5,407.2 655.4,408.3 655.6,409.3 656.1,410.4 656.8,411.3 657.6,412.1 658.5,412.7 659.5,413.1 660.4,413.3 661.0,413.5 661.5,413.8 661.9,414.2 662.5,414.8 663.2,415.5 663.9,416.2 664.7,416.8 665.4,417.3 666.0,417.7 666.5,417.9 666.8,417.9 667.3,417.4 667.2,417.1 667.0,416.7 666.6,416.1 666.0,415.4 665.5,414.7 665.0,414.0 664.6,413.3 664.1,412.4 663.3,411.5 662.4,410.9 661.3,410.4 660.4,410.2 659.8,410.0 659.3,409.7 658.7,409.3 658.2,408.8 657.8,408.4 657.6,407.9 657.4,407.3 657.4,406.4 657.4,405.7 657.3,405.3 657.2,405.0Z"/>
<path d="M669.5,402.6 669.3,402.4 668.8,402.3 668.1,402.2 667.2,402.0 666.3,401.9 665.4,401.8 664.5,401.6 663.5,401.5 662.4,401.5 661.3,401.8 660.2,402.2 659.4,402.7 658.7,403.0 658.1,403.2 657.4,403.5 656.7,403.6 656.1,403.7 655.6,403.7 655.0,403.6 654.1,403.3 653.1,403.0 652.1,402.8 651.0,402.8 650.1,403.0 649.4,403.1 648.9,403.2 648.7,403.4 648.7,404.3 648.9,404.5 649.3,404.6 650.0,404.8 650.9,405.0 651.6,405.2 652.3,405.5 652.9,405.9 653.7,406.4 654.8,406.9 655.9,407.1 657.1,407.1 658.2,407.0 659.2,406.7 660.2,406.3 661.2,405.8 661.9,405.3 662.4,405.0 663.0,404.8 663.6,404.6 664.5,404.5 665.4,404.4 666.3,404.3 667.2,404.2 668.2,404.0 668.8,403.8 669.3,403.7 669.5,403.5Z"/>
<path d="M686.4,408.2 686.1,408.1 685.6,408.0 684.9,408.0 683.9,408.1 683.0,408.0 682.2,407.9 681.3,407.6 680.4,407.3 679.2,407.0 678.0,407.0 676.8,407.1 675.7,407.4 674.8,407.6 673.9,407.8 672.9,407.9 672.1,408.1 671.3,408.1 670.5,408.1 669.6,408.0 668.9,407.8 668.2,407.6 667.7,407.2 667.1,406.8 666.5,406.0 665.6,405.1 664.5,404.6 663.4,404.3 662.3,404.3 661.5,404.4 661.0,404.5 660.7,404.6 660.6,405.4 660.8,405.6 661.3,405.8 662.1,406.0 663.0,406.2 663.6,406.6 664.1,407.0 664.5,407.5 664.9,408.4 665.7,409.4 666.6,410.2 667.7,410.8 668.9,411.2 670.0,411.5 671.2,411.6 672.4,411.6 673.5,411.4 674.6,411.2 675.6,410.9 676.7,410.6 677.5,410.2 678.3,410.0 679.0,410.0 679.8,410.0 680.8,410.2 681.9,410.3 683.0,410.2 684.1,410.0 685.2,409.7 685.9,409.4 686.4,409.2 686.6,409.0Z"/>
<path d="M697.3,405.4 697.1,405.6 696.9,406.1 696.6,406.8 696.2,407.7 695.8,408.6 695.3,409.3 694.8,410.1 694.3,410.7 693.7,411.1 693.2,411.3 692.5,411.5 691.7,411.5 690.9,411.4 690.1,411.3 689.2,411.1 688.4,410.8 687.6,410.4 686.8,409.9 686.1,409.4 685.3,408.7 684.7,408.2 684.3,407.9 684.0,407.8 683.5,408.3 683.5,408.6 683.7,409.0 684.2,409.7 684.8,410.6 685.5,411.5 686.3,412.2 687.2,412.9 688.3,413.5 689.4,413.9 690.5,414.2 691.7,414.3 692.9,414.2 694.1,413.9 695.2,413.3 696.1,412.4 696.8,411.4 697.3,410.4 697.7,409.3 697.9,408.2 698.1,407.1 698.1,406.4 698.1,405.8 698.0,405.5Z"/>
<path d="M710.1,409.3 710.3,409.2 710.7,408.9 711.2,408.4 711.8,407.7 712.4,407.1 713.0,406.5 713.7,406.0 714.4,405.5 715.0,405.1 715.7,404.8 716.4,404.6 717.2,404.5 718.1,404.3 719.0,404.0 719.9,403.8 720.7,403.6 721.4,403.4 722.1,403.4 722.8,403.5 723.6,403.7 724.5,403.9 725.4,404.1 726.3,404.3 727.3,404.4 728.0,404.4 728.4,404.4 728.7,404.4 728.8,403.8 728.6,403.6 728.2,403.4 727.6,403.1 726.7,402.8 725.9,402.4 725.1,402.1 724.3,401.7 723.4,401.3 722.3,401.1 721.3,401.0 720.2,401.1 719.2,401.3 718.4,401.5 717.5,401.7 716.6,401.9 715.7,402.2 714.7,402.6 713.8,403.1 713.0,403.7 712.3,404.5 711.7,405.2 711.1,406.0 710.6,406.8 710.1,407.6 709.8,408.2 709.6,408.6 709.5,408.9Z"/>
<path d="M717.2,405.7 717.3,405.9 717.7,406.4 718.3,406.9 719.2,407.7 720.3,408.3 721.5,408.7 722.7,408.8 723.9,408.7 725.0,408.6 726.1,408.5 727.2,408.4 728.3,408.3 729.2,408.4 730.0,408.5 730.9,408.7 731.9,409.2 732.9,409.6 734.0,410.0 735.0,410.4 736.2,410.8 737.4,410.9 738.7,410.8 739.8,410.5 740.9,409.9 741.6,409.4 742.0,409.1 742.2,408.8 742.0,408.3 741.7,408.3 741.1,408.4 740.3,408.7 739.3,409.0 738.4,409.1 737.6,409.0 736.8,408.8 735.9,408.3 734.9,407.8 733.9,407.3 732.9,406.8 731.8,406.3 730.6,405.9 729.4,405.7 728.1,405.7 726.9,405.9 725.8,406.1 724.7,406.3 723.6,406.5 722.6,406.8 721.7,406.8 720.9,406.7 720.0,406.4 719.1,405.9 718.4,405.5 717.9,405.2 717.6,405.1Z"/>
<path d="M729.1,405.1 729.2,405.4 729.5,405.8 730.0,406.4 730.7,407.1 731.3,407.8 732.0,408.4 732.7,409.1 733.5,409.8 734.5,410.4 735.7,410.8 737.0,410.9 738.0,410.7 738.8,410.6 739.7,410.5 740.5,410.5 741.3,410.5 741.9,410.6 742.4,410.8 743.0,411.1 743.6,411.7 744.2,412.2 744.6,412.5 744.9,412.6 745.5,412.1 745.5,411.8 745.4,411.4 745.1,410.7 744.6,409.7 743.9,408.9 743.0,408.2 741.9,407.7 740.7,407.5 739.7,407.3 738.6,407.3 737.6,407.4 736.7,407.5 736.2,407.5 735.7,407.5 735.2,407.3 734.5,406.8 733.6,406.3 732.8,405.8 731.9,405.4 731.1,404.9 730.4,404.6 729.9,404.5 729.6,404.5Z"/>
<path d="M743.9,405.2 743.7,404.9 743.3,404.6 742.7,404.2 741.9,403.7 741.5,403.3 741.2,402.8 741.0,402.2 740.9,401.4 740.7,400.4 740.5,399.5 740.3,398.5 740.1,397.7 740.0,397.1 740.1,396.5 740.2,395.9 740.5,395.2 740.9,394.6 741.4,394.1 741.9,393.6 742.7,393.1 743.3,392.7 743.7,392.3 743.9,392.1 743.6,391.3 743.3,391.3 742.8,391.3 742.1,391.4 741.0,391.7 740.0,392.1 739.0,392.8 738.2,393.6 737.5,394.6 737.0,395.8 736.8,397.0 736.9,398.2 737.1,399.3 737.4,400.3 737.7,401.2 738.0,402.2 738.4,403.2 739.1,404.3 739.9,405.1 741.0,405.6 742.1,405.9 742.8,406.0 743.3,406.0 743.6,405.9Z"/>
<path d="M666.3,411.9 666.0,411.9 665.4,411.9 664.6,411.9 663.4,412.0 662.2,412.3 661.1,412.8 660.1,413.4 659.2,414.1 658.4,414.7 657.5,415.2 656.6,415.6 655.6,415.9 654.6,416.4 653.5,416.8 652.5,417.3 651.4,417.9 650.3,418.7 649.5,419.7 648.9,420.9 648.6,421.9 648.3,422.7 647.8,423.4 647.2,424.0 646.4,424.6 645.5,425.4 644.6,426.2 643.9,427.1 643.2,428.1 642.8,428.8 642.5,429.3 642.4,429.5 642.9,430.0 643.2,429.8 643.6,429.5 644.2,428.9 645.0,428.1 645.8,427.4 646.6,426.8 647.5,426.3 648.5,425.7 649.5,425.0 650.3,424.0 650.9,422.9 651.3,421.8 651.7,421.2 652.2,420.6 652.8,420.2 653.7,419.7 654.7,419.2 655.6,418.8 656.6,418.3 657.7,417.8 658.7,417.2 659.7,416.5 660.6,415.7 661.3,414.9 662.1,414.3 662.9,413.8 663.7,413.5 664.8,413.2 665.6,413.0 666.1,412.8 666.4,412.6Z"/>
<path d="M675.8,412.6 675.8,412.4 675.7,411.9 675.5,411.2 675.1,410.3 674.8,409.4 674.5,408.5 674.2,407.6 673.8,406.8 673.5,405.9 673.2,405.0 672.8,404.1 672.4,403.1 671.7,402.1 670.8,401.3 669.8,400.7 668.8,400.3 667.9,400.0 666.9,399.8 666.0,399.5 665.2,399.3 664.6,399.0 664.0,398.7 663.5,398.2 663.0,397.4 662.6,396.8 662.3,396.5 662.1,396.3 661.4,396.6 661.3,396.9 661.4,397.4 661.6,398.1 661.9,399.1 662.5,400.0 663.2,400.9 664.1,401.5 665.1,402.0 666.0,402.4 666.9,402.8 667.7,403.2 668.5,403.5 669.0,403.8 669.4,404.1 669.7,404.6 670.1,405.3 670.5,406.2 671.0,407.0 671.4,407.9 671.9,408.7 672.4,409.5 673.0,410.4 673.5,411.2 674.1,411.9 674.5,412.5 674.9,412.9 675.1,413.0Z"/>
<path d="M694.2,411.6 693.9,411.6 693.4,411.7 692.7,411.9 691.7,412.3 690.8,412.7 689.9,413.3 689.0,413.9 688.2,414.6 687.5,415.1 686.8,415.6 686.1,416.2 685.3,416.7 684.6,417.1 683.8,417.6 683.0,418.1 682.1,418.6 681.1,419.3 680.4,420.2 679.8,421.2 679.4,422.2 679.2,422.9 679.1,423.5 679.1,423.8 679.9,424.2 680.2,424.1 680.6,423.7 681.1,423.2 681.7,422.5 682.2,422.0 682.8,421.6 683.5,421.3 684.4,421.1 685.4,420.7 686.3,420.2 687.2,419.7 688.1,419.1 689.0,418.4 689.8,417.7 690.5,416.9 691.1,416.1 691.7,415.5 692.3,414.8 693.0,414.2 693.7,413.6 694.2,413.1 694.6,412.7 694.7,412.4Z"/>
<path d="M704.8,418.5 704.9,418.8 705.2,419.3 705.7,420.0 706.5,420.8 707.2,421.6 708.1,422.5 708.9,423.2 709.9,424.0 711.0,424.6 712.1,425.1 713.4,425.3 714.6,425.4 715.7,425.5 716.9,425.4 718.0,425.3 719.2,425.2 720.4,424.9 721.5,424.5 722.6,423.9 723.6,423.3 724.3,422.8 724.7,422.4 724.9,422.2 724.5,421.5 724.2,421.5 723.7,421.6 722.9,421.9 721.8,422.2 720.9,422.5 719.9,422.6 719.0,422.7 717.9,422.7 716.9,422.6 715.8,422.6 714.8,422.5 713.8,422.4 712.9,422.3 712.1,422.0 711.3,421.7 710.4,421.2 709.5,420.6 708.6,420.0 707.7,419.4 706.8,418.8 706.1,418.3 705.6,418.1 705.3,418.0Z"/>
<path d="M715.7,414.6 715.9,414.6 716.5,414.6 717.3,414.5 718.3,414.3 719.3,414.1 720.3,413.8 721.4,413.5 722.4,413.2 723.5,412.8 724.5,412.2 725.5,411.5 726.3,410.8 727.0,410.3 727.7,409.7 728.5,409.2 729.5,408.7 730.4,407.8 731.2,406.8 731.7,405.6 731.9,404.6 732.2,403.9 732.5,403.3 733.0,402.7 733.8,402.1 734.4,401.6 734.8,401.2 734.9,401.0 734.5,400.2 734.2,400.2 733.7,400.3 732.9,400.6 731.9,401.0 730.9,401.6 730.0,402.5 729.3,403.5 728.9,404.5 728.5,405.0 728.1,405.5 727.6,405.8 726.7,406.2 725.8,406.8 724.8,407.5 724.0,408.2 723.3,408.9 722.6,409.5 721.9,410.0 721.2,410.5 720.3,410.9 719.4,411.4 718.5,411.9 717.6,412.3 716.7,412.8 716.0,413.2 715.6,413.5 715.4,413.7Z"/>
<path d="M730.4,414.5 730.7,414.6 731.2,414.9 731.9,415.3 732.9,415.7 733.8,416.2 734.6,416.7 735.4,417.4 736.1,418.2 736.9,419.0 737.8,419.8 738.7,420.5 739.6,421.3 740.7,421.9 741.8,422.5 743.0,422.9 744.3,423.1 745.6,423.1 746.8,422.9 748.0,422.5 749.1,421.9 750.1,421.3 751.1,420.6 752.0,419.9 752.9,419.2 753.5,418.6 753.9,418.2 754.0,417.9 753.6,417.3 753.3,417.4 752.8,417.6 752.1,418.0 751.1,418.6 750.1,419.1 749.2,419.5 748.2,420.0 747.2,420.3 746.3,420.5 745.5,420.6 744.6,420.5 743.7,420.2 742.8,419.9 742.0,419.5 741.1,419.0 740.3,418.4 739.4,417.8 738.6,417.1 737.7,416.4 736.8,415.7 735.7,415.0 734.6,414.5 733.5,414.2 732.3,413.9 731.5,413.8 730.9,413.8 730.6,413.8Z"/>
<path d="M738.2,416.1 738.2,416.3 738.3,416.8 738.5,417.5 738.8,418.4 739.3,419.3 740.0,420.1 740.8,420.7 741.7,421.3 742.5,421.8 743.4,422.2 744.3,422.5 745.1,422.8 745.8,423.1 746.5,423.4 747.1,423.8 747.7,424.2 748.1,424.6 748.4,425.1 748.7,425.6 748.9,426.4 749.0,427.2 749.1,428.0 749.2,428.8 749.1,429.7 749.1,430.3 749.2,430.8 749.3,431.1 750.0,431.2 750.2,431.0 750.4,430.6 750.6,429.9 750.9,429.0 751.1,428.1 751.3,427.1 751.3,426.1 751.2,425.0 750.9,424.0 750.4,423.0 749.7,422.1 748.8,421.4 748.0,420.8 747.0,420.3 746.1,420.0 745.2,419.7 744.4,419.5 743.6,419.3 742.8,419.0 742.0,418.7 741.4,418.4 740.8,418.0 740.3,417.4 739.8,416.8 739.4,416.2 739.1,415.9 738.8,415.7Z"/>
<path d="M656.3,422.7 656.2,423.0 656.1,423.5 656.0,424.1 656.0,425.1 655.9,426.0 655.9,426.9 655.8,427.8 655.8,428.9 656.0,429.9 656.3,431.0 656.7,432.0 657.2,432.9 657.6,433.6 658.1,434.4 658.5,435.2 659.1,436.1 659.9,437.0 661.0,437.7 662.1,438.0 663.3,438.1 664.4,438.0 665.4,437.8 666.4,437.4 667.2,436.9 667.8,436.5 668.2,436.2 668.3,436.0 668.0,435.1 667.7,435.1 667.2,435.1 666.6,435.2 665.7,435.4 665.0,435.4 664.3,435.4 663.6,435.3 662.9,435.1 662.5,434.8 662.2,434.5 662.0,434.1 661.6,433.4 661.2,432.6 660.7,431.8 660.2,431.0 659.8,430.3 659.4,429.7 659.1,429.1 658.9,428.4 658.7,427.6 658.5,426.7 658.3,425.8 658.1,424.9 657.8,424.0 657.6,423.3 657.4,422.9 657.2,422.7Z"/>
<path d="M668.0,421.3 668.0,421.6 668.2,422.0 668.6,422.6 669.1,423.2 669.3,423.8 669.4,424.4 669.4,425.0 669.3,425.7 669.2,426.5 669.1,427.2 668.9,428.0 668.7,428.7 668.5,429.3 668.2,429.9 667.9,430.5 667.4,431.0 667.0,431.4 666.5,431.7 665.9,432.0 665.1,432.1 664.5,432.2 664.0,432.4 663.8,432.6 663.8,433.4 664.0,433.6 664.4,433.8 665.1,433.9 666.1,434.1 667.2,434.1 668.2,433.8 669.3,433.3 670.1,432.5 670.9,431.7 671.5,430.8 671.9,429.8 672.2,428.8 672.4,427.8 672.4,426.8 672.4,425.8 672.3,424.7 672.0,423.6 671.4,422.6 670.7,421.8 669.9,421.2 669.3,420.9 668.8,420.7 668.6,420.7Z"/>
<path d="M682.8,423.6 683.1,423.7 683.6,423.6 684.3,423.5 685.1,423.3 685.8,423.3 686.4,423.4 686.9,423.7 687.5,424.1 688.0,424.6 688.4,425.2 688.6,425.8 688.9,426.5 689.0,427.2 689.1,427.9 689.0,428.6 688.9,429.5 688.8,430.5 688.7,431.4 688.6,432.4 688.6,433.4 688.7,434.5 689.0,435.6 689.4,436.5 689.9,437.4 690.3,438.0 690.6,438.4 690.8,438.6 691.5,438.3 691.5,438.0 691.5,437.5 691.3,436.8 691.0,435.9 690.9,435.1 690.9,434.4 691.0,433.6 691.2,432.7 691.4,431.8 691.6,430.9 691.8,430.0 692.0,429.0 692.1,427.9 692.0,426.7 691.7,425.6 691.3,424.6 690.7,423.6 689.9,422.7 689.0,422.0 688.0,421.5 686.8,421.2 685.7,421.3 684.7,421.5 683.7,422.0 683.1,422.4 682.7,422.7 682.6,422.9Z"/>
<path d="M699.9,421.7 700.0,421.5 700.1,420.9 700.1,420.2 700.2,419.1 700.1,418.0 699.8,416.9 699.4,415.9 698.9,414.9 698.4,414.0 697.9,413.1 697.3,412.2 696.7,411.2 695.8,410.4 694.8,409.7 693.6,409.2 692.4,409.0 691.1,409.1 689.9,409.4 688.8,410.0 687.8,410.8 687.0,411.6 686.4,412.6 685.9,413.6 685.5,414.6 685.2,415.7 685.0,416.8 684.9,417.8 684.9,418.9 684.9,419.6 684.9,420.2 685.0,420.4 685.7,420.5 685.8,420.3 686.0,419.8 686.2,419.1 686.5,418.1 686.8,417.2 687.1,416.3 687.5,415.4 687.9,414.6 688.4,413.9 689.0,413.3 689.6,412.8 690.3,412.3 690.9,412.0 691.5,411.9 692.1,411.9 692.9,412.1 693.5,412.3 694.1,412.6 694.6,413.1 695.2,413.8 695.8,414.5 696.4,415.3 697.0,416.1 697.5,416.9 698.0,417.6 698.3,418.4 698.6,419.3 698.8,420.3 698.9,421.0 699.1,421.5 699.2,421.8Z"/>
<path d="M710.1,424.4 709.8,424.2 709.4,423.9 708.7,423.6 707.7,423.2 706.6,423.0 705.5,422.9 704.4,423.0 703.4,423.2 702.7,423.2 702.0,423.1 701.3,422.9 700.5,422.6 699.6,422.2 698.8,421.8 698.0,421.3 697.1,420.8 696.2,420.4 695.2,419.9 694.3,419.5 693.4,419.1 692.6,418.8 691.8,418.3 691.0,417.8 690.3,417.2 689.7,416.7 689.3,416.4 689.0,416.3 688.4,416.8 688.5,417.1 688.8,417.6 689.2,418.2 689.8,419.0 690.5,419.9 691.3,420.6 692.2,421.2 693.1,421.8 694.0,422.3 694.8,422.8 695.6,423.3 696.5,423.9 697.4,424.4 698.3,424.9 699.3,425.3 700.4,425.7 701.6,425.9 702.8,425.9 704.0,425.7 704.9,425.3 705.7,425.1 706.5,424.9 707.4,424.9 708.3,425.1 709.1,425.1 709.6,425.2 709.9,425.1Z"/>
<path d="M720.6,420.3 720.5,420.1 720.1,419.8 719.5,419.4 718.6,419.0 717.6,418.6 716.6,418.4 715.5,418.3 714.6,418.3 713.9,418.3 713.2,418.1 712.5,417.9 711.6,417.6 710.5,417.4 709.3,417.4 708.2,417.6 707.4,417.9 706.8,418.1 706.2,418.1 705.6,418.0 704.8,417.6 704.2,417.4 703.7,417.2 703.4,417.3 702.9,417.9 703.0,418.2 703.3,418.6 703.8,419.1 704.6,419.8 705.5,420.4 706.6,420.7 707.8,420.8 708.7,420.6 709.4,420.6 710.1,420.7 710.7,420.8 711.5,421.1 712.6,421.4 713.7,421.4 714.8,421.4 715.7,421.2 716.5,421.0 717.2,421.0 718.0,421.0 718.9,421.2 719.6,421.2 720.1,421.2 720.4,421.1Z"/>
<path d="M734.3,423.9 734.5,423.7 734.7,423.2 734.9,422.5 735.2,421.4 735.2,420.2 735.1,419.0 734.8,417.9 734.3,416.8 733.9,415.9 733.4,414.9 732.9,414.0 732.3,413.1 731.8,412.3 731.3,411.4 730.8,410.6 730.3,409.6 729.4,408.6 728.4,407.8 727.2,407.3 726.1,407.1 725.3,406.9 724.5,406.6 723.7,406.1 722.9,405.6 722.2,405.1 721.8,404.9 721.5,404.8 720.9,405.4 721.0,405.7 721.3,406.2 721.7,406.8 722.4,407.6 723.3,408.4 724.2,409.1 725.2,409.6 726.2,410.0 726.7,410.4 727.2,410.8 727.5,411.3 727.9,412.1 728.4,413.1 729.0,414.0 729.5,414.9 730.1,415.8 730.7,416.6 731.3,417.4 731.9,418.2 732.4,419.0 732.8,419.7 733.0,420.5 733.2,421.3 733.2,422.3 733.2,423.0 733.3,423.6 733.4,423.8Z"/>
<path d="M746.8,422.1 746.6,421.9 746.2,421.7 745.6,421.4 744.8,421.0 743.9,420.6 742.9,420.3 742.0,420.1 741.1,420.0 740.5,419.7 739.9,419.4 739.4,419.0 738.9,418.5 738.6,417.9 738.3,417.4 738.2,416.8 738.1,416.0 738.0,415.2 738.0,414.3 738.0,413.5 738.1,412.6 738.0,411.5 737.9,410.5 737.7,409.6 737.4,408.6 737.0,407.6 736.4,406.8 735.7,406.1 734.9,405.5 734.3,405.1 733.9,404.9 733.7,404.8 733.2,405.3 733.3,405.5 733.6,405.9 734.0,406.5 734.6,407.1 735.0,407.8 735.3,408.4 735.5,409.2 735.6,410.0 735.6,410.8 735.6,411.6 735.5,412.4 735.4,413.3 735.3,414.3 735.3,415.2 735.3,416.2 735.4,417.3 735.7,418.4 736.3,419.3 736.9,420.2 737.8,421.0 738.7,421.5 739.7,421.9 740.8,422.1 741.8,422.1 742.6,422.2 743.5,422.3 744.3,422.4 745.2,422.6 745.9,422.7 746.3,422.8 746.6,422.7Z"/>
<path d="M668.1,436.1 668.4,436.1 668.8,436.0 669.5,435.7 670.3,435.4 671.1,435.2 671.9,435.1 672.6,435.0 673.6,435.0 674.6,434.9 675.6,434.6 676.6,434.2 677.4,433.8 678.0,433.6 678.6,433.4 679.2,433.4 680.1,433.5 681.2,433.4 682.2,433.2 683.2,432.9 684.1,432.5 684.9,432.2 685.7,431.9 686.5,431.7 687.4,431.5 688.0,431.3 688.5,431.2 688.7,431.0 688.7,430.2 688.4,430.1 688.0,430.0 687.3,429.9 686.3,429.8 685.3,429.8 684.3,429.9 683.3,430.1 682.5,430.3 681.7,430.4 681.0,430.4 680.3,430.4 679.3,430.2 678.2,430.3 677.1,430.5 676.0,431.0 675.2,431.5 674.5,431.8 673.9,432.1 673.2,432.3 672.3,432.5 671.3,432.8 670.3,433.2 669.4,433.7 668.7,434.3 668.1,434.8 667.8,435.2 667.7,435.4Z"/>
<path d="M682.2,435.4 682.0,435.7 681.9,436.1 681.7,436.9 681.5,437.9 681.4,438.8 681.2,439.8 681.1,440.8 681.0,441.9 681.0,443.1 681.3,444.2 681.9,445.3 682.5,446.1 682.9,446.8 683.3,447.6 683.7,448.3 684.0,449.1 684.2,449.9 684.4,450.7 684.4,451.6 684.4,452.5 684.4,453.5 684.4,454.5 684.4,455.5 684.5,456.5 684.5,457.2 684.6,457.7 684.7,458.0 685.5,458.0 685.6,457.8 685.8,457.3 685.9,456.6 686.1,455.6 686.3,454.7 686.5,453.7 686.7,452.7 686.9,451.7 686.9,450.6 686.9,449.5 686.7,448.4 686.3,447.3 685.9,446.3 685.4,445.3 684.8,444.4 684.2,443.7 683.8,443.1 683.6,442.5 683.4,441.8 683.4,440.9 683.3,439.9 683.3,438.9 683.2,438.0 683.2,437.0 683.1,436.2 683.0,435.7 682.9,435.5Z"/>
<path d="M691.9,429.7 692.1,429.8 692.7,430.0 693.5,430.1 694.6,430.3 695.7,430.3 696.9,430.1 698.0,429.7 699.0,429.1 700.0,428.5 700.9,427.9 701.8,427.2 702.6,426.6 703.3,426.2 704.0,425.9 704.8,425.7 705.7,425.6 706.6,425.6 707.5,425.6 708.5,425.8 709.6,426.0 710.8,426.0 712.0,425.9 713.2,425.5 714.2,424.9 715.2,424.3 716.1,423.7 716.9,423.0 717.7,422.2 718.3,421.6 718.7,421.2 718.8,421.0 718.4,420.4 718.1,420.5 717.6,420.7 716.9,421.1 716.0,421.7 715.1,422.2 714.2,422.6 713.3,423.0 712.4,423.3 711.6,423.5 710.8,423.5 710.0,423.4 709.0,423.1 707.9,422.8 706.7,422.7 705.5,422.7 704.3,422.9 703.1,423.2 701.9,423.7 700.9,424.4 700.1,425.2 699.3,425.9 698.5,426.6 697.7,427.2 697.0,427.8 696.2,428.3 695.4,428.6 694.6,428.7 693.5,428.8 692.7,428.8 692.2,428.9 691.9,429.0Z"/>
<path d="M703.5,435.7 703.8,435.8 704.2,436.0 704.9,436.1 705.8,436.2 706.7,436.3 707.6,436.3 708.5,436.4 709.4,436.5 710.2,436.5 711.1,436.6 712.0,436.6 712.8,436.7 713.5,436.8 714.1,437.0 714.7,437.2 715.4,437.5 715.9,437.9 716.4,438.3 716.9,438.7 717.3,439.4 717.9,440.1 718.5,440.8 719.1,441.5 719.7,442.0 720.0,442.5 720.2,443.0 720.3,443.6 720.3,444.4 720.2,445.1 720.3,445.5 720.3,445.8 721.2,446.0 721.3,445.8 721.6,445.4 721.8,444.8 722.2,443.8 722.3,442.8 722.2,441.7 721.8,440.7 721.3,439.8 720.8,439.1 720.4,438.3 720.0,437.6 719.5,436.7 718.8,435.9 718.0,435.2 717.1,434.6 716.1,434.1 715.1,433.7 714.0,433.5 713.0,433.4 712.0,433.5 711.1,433.5 710.2,433.6 709.3,433.7 708.4,433.9 707.5,434.0 706.6,434.1 705.7,434.3 704.8,434.4 704.2,434.6 703.7,434.7 703.5,434.9Z"/>
<path d="M713.5,435.1 713.7,435.4 714.1,435.6 714.7,435.9 715.5,436.3 716.4,436.6 717.2,436.9 718.0,437.3 718.7,437.6 719.2,437.9 719.7,438.3 720.2,438.7 720.6,439.2 720.9,439.7 721.1,440.1 721.2,440.7 721.3,441.6 721.6,442.7 722.1,443.6 722.7,444.5 723.4,445.2 724.0,445.6 724.4,445.8 724.7,445.9 725.4,445.3 725.4,445.0 725.2,444.6 724.9,444.0 724.5,443.2 724.3,442.6 724.3,442.0 724.3,441.4 724.4,440.5 724.3,439.3 723.9,438.2 723.4,437.2 722.6,436.3 721.8,435.6 720.8,435.0 719.8,434.6 718.8,434.4 717.9,434.3 717.0,434.2 716.0,434.1 715.1,434.1 714.4,434.1 713.9,434.2 713.7,434.3Z"/>
<path d="M730.9,435.7 731.2,435.7 731.7,435.5 732.5,435.1 733.5,434.5 734.4,433.7 735.1,432.7 735.7,431.5 735.9,430.2 735.9,428.8 735.5,427.5 734.8,426.4 734.0,425.6 733.4,424.9 733.0,424.2 732.6,423.5 732.3,422.5 732.0,421.5 731.5,420.4 731.0,419.4 730.5,418.4 730.1,417.7 729.8,417.2 729.5,417.0 728.8,417.3 728.8,417.6 728.8,418.2 728.9,419.0 729.2,420.0 729.4,421.1 729.6,422.1 729.8,423.2 729.9,424.3 730.3,425.5 730.9,426.6 731.7,427.6 732.4,428.3 732.8,428.9 733.0,429.4 733.1,430.0 733.1,430.9 732.9,431.6 732.6,432.3 732.2,433.0 731.4,433.8 730.9,434.4 730.6,434.8 730.4,435.1Z"/>
<path d="M737.4,431.0 737.3,431.3 737.4,431.8 737.6,432.5 738.0,433.5 738.2,434.4 738.5,435.3 738.8,436.2 739.1,437.3 739.7,438.4 740.6,439.3 741.7,440.0 742.6,440.3 743.1,440.6 743.5,440.9 743.9,441.4 744.2,442.2 744.8,443.2 745.4,444.1 746.2,444.9 746.9,445.6 747.5,446.1 748.0,446.4 748.2,446.5 748.9,445.9 748.8,445.7 748.6,445.2 748.3,444.5 747.8,443.7 747.4,442.9 747.0,442.1 746.8,441.2 746.5,440.2 745.9,439.1 745.0,438.1 743.9,437.5 743.0,437.1 742.5,436.9 742.1,436.5 741.7,436.1 741.3,435.3 740.8,434.3 740.3,433.4 739.8,432.6 739.2,431.7 738.7,431.1 738.3,430.8 738.1,430.6Z"/>
<path d="M657.9,440.2 657.6,440.3 657.3,440.6 656.8,441.1 656.2,441.8 655.7,442.2 655.1,442.4 654.4,442.6 653.6,442.7 652.6,442.8 651.7,442.9 650.8,443.1 649.8,443.2 648.7,443.5 647.8,443.9 646.8,444.4 645.9,445.1 645.0,445.8 644.3,446.6 643.7,447.5 643.2,448.5 642.8,449.5 642.5,450.4 642.3,451.4 642.1,452.6 642.2,453.7 642.6,454.7 643.3,455.6 644.1,456.3 644.6,456.7 645.1,457.0 645.3,457.1 645.9,456.5 645.8,456.2 645.6,455.8 645.2,455.2 644.7,454.5 644.5,453.9 644.5,453.4 644.6,452.9 644.8,452.1 645.2,451.4 645.5,450.6 645.9,449.9 646.4,449.2 646.8,448.7 647.3,448.2 647.9,447.7 648.5,447.3 649.2,446.9 649.9,446.6 650.6,446.3 651.5,446.1 652.4,445.8 653.2,445.5 654.1,445.3 655.1,445.0 656.1,444.4 657.0,443.8 657.6,442.9 658.1,442.0 658.4,441.3 658.5,440.9 658.6,440.6Z"/>
<path d="M673.7,445.5 673.5,445.7 673.2,446.2 673.0,447.0 672.6,448.0 672.3,448.9 671.9,449.9 671.6,450.9 671.1,451.9 670.8,453.1 670.7,454.4 670.8,455.7 671.0,456.8 671.1,457.8 671.3,458.8 671.5,459.9 671.7,460.8 671.8,461.8 671.9,462.7 671.9,463.7 671.9,464.9 672.2,466.1 672.7,467.3 673.5,468.3 674.4,469.0 675.1,469.4 675.6,469.7 675.9,469.8 676.6,469.1 676.5,468.8 676.2,468.3 675.7,467.7 675.2,466.9 674.9,466.2 674.8,465.6 674.8,464.9 675.1,463.9 675.2,462.8 675.3,461.6 675.2,460.4 675.1,459.3 675.0,458.2 674.8,457.2 674.5,456.1 674.3,455.1 674.2,454.3 674.1,453.5 674.2,452.7 674.4,451.7 674.6,450.6 674.7,449.5 674.8,448.4 674.8,447.3 674.8,446.5 674.7,445.9 674.6,445.6Z"/>
<path d="M681.0,445.9 681.1,446.1 681.5,446.5 682.0,447.0 682.7,447.5 683.1,448.0 683.4,448.5 683.6,449.1 683.8,449.9 684.1,450.9 684.5,451.9 684.9,452.8 685.4,453.8 686.3,454.8 687.4,455.5 688.7,455.9 689.9,455.9 691.0,455.7 692.1,455.4 693.1,455.0 694.0,454.5 694.6,454.0 695.0,453.7 695.1,453.4 694.8,452.6 694.5,452.5 694.0,452.5 693.2,452.6 692.4,452.8 691.6,452.9 690.8,452.8 690.0,452.7 689.4,452.6 689.0,452.4 688.7,452.1 688.5,451.8 688.1,451.2 687.7,450.4 687.3,449.6 686.9,448.8 686.5,447.8 685.8,446.8 684.9,446.0 683.9,445.5 682.9,445.2 682.2,445.0 681.7,445.0 681.4,445.0Z"/>
<path d="M698.2,438.2 698.1,438.4 698.2,439.0 698.4,439.7 698.6,440.7 698.8,441.6 698.9,442.6 698.9,443.5 699.0,444.5 699.1,445.6 699.3,446.7 699.5,447.8 699.8,448.6 699.9,449.2 699.9,449.8 699.7,450.4 699.3,451.0 698.8,451.6 698.3,452.1 697.7,452.5 696.8,452.8 695.8,453.3 694.8,453.9 694.0,454.6 693.3,455.4 692.8,456.0 692.5,456.4 692.4,456.7 692.8,457.2 693.1,457.1 693.6,456.9 694.2,456.5 695.0,455.9 695.8,455.5 696.6,455.1 697.5,454.9 698.5,454.7 699.6,454.2 700.6,453.5 701.4,452.7 702.1,451.6 702.6,450.4 702.7,449.2 702.5,447.9 702.1,446.9 701.8,446.0 701.5,445.1 701.3,444.2 701.1,443.2 700.9,442.2 700.5,441.2 700.1,440.2 699.7,439.2 699.3,438.6 699.0,438.1 698.8,437.9Z"/>
<path d="M709.5,446.1 709.5,446.4 709.6,446.9 709.8,447.6 710.2,448.6 710.6,449.5 711.1,450.4 711.6,451.2 712.2,452.2 713.1,453.0 714.2,453.6 715.4,454.0 716.6,454.1 717.7,454.0 718.8,453.8 719.9,453.4 720.7,452.9 721.2,452.7 721.6,452.6 722.2,452.7 723.0,453.0 723.7,453.2 724.2,453.3 724.5,453.3 725.0,452.6 724.8,452.3 724.5,451.9 724.0,451.4 723.2,450.7 722.1,450.2 721.0,450.0 719.7,450.1 718.8,450.4 718.1,450.6 717.4,450.6 716.7,450.7 716.0,450.6 715.5,450.5 715.0,450.3 714.5,449.9 713.9,449.4 713.3,448.7 712.7,448.1 712.1,447.4 711.4,446.7 710.9,446.1 710.6,445.8 710.3,445.7Z"/>
<path d="M721.7,442.5 721.9,442.4 722.4,442.2 723.0,441.8 723.7,441.3 724.5,440.9 725.2,440.5 726.0,440.1 726.8,439.7 727.7,439.2 728.5,438.7 729.4,438.2 730.0,437.7 730.4,437.5 730.8,437.4 731.3,437.4 732.0,437.5 733.0,437.7 733.9,437.8 734.9,437.9 735.8,437.9 736.7,438.0 737.6,438.1 738.4,438.2 739.4,438.3 740.1,438.3 740.5,438.3 740.8,438.3 741.0,437.4 740.9,437.2 740.5,437.0 739.8,436.6 739.0,436.3 738.1,435.9 737.2,435.6 736.2,435.3 735.3,435.0 734.5,434.8 733.6,434.6 732.7,434.3 731.7,434.1 730.4,434.0 729.2,434.3 728.1,434.9 727.3,435.6 726.7,436.2 726.0,436.7 725.3,437.2 724.6,437.8 723.8,438.4 723.1,439.1 722.4,439.8 721.8,440.6 721.4,441.2 721.2,441.6 721.1,441.9Z"/>
<path d="M731.5,440.1 731.3,440.3 731.2,440.8 731.2,441.5 731.2,442.4 731.3,443.4 731.5,444.4 731.8,445.4 732.2,446.2 732.4,446.9 732.6,447.6 732.7,448.3 732.8,449.3 733.2,450.4 733.8,451.5 734.8,452.3 735.6,452.8 736.0,453.1 736.3,453.4 736.6,453.9 736.9,454.4 737.0,455.0 737.1,455.5 736.9,456.1 736.6,456.8 736.3,457.4 736.2,457.9 736.2,458.2 736.9,458.7 737.2,458.6 737.5,458.3 738.1,457.9 738.8,457.1 739.3,456.2 739.6,455.1 739.7,454.0 739.5,452.8 739.1,451.8 738.5,450.8 737.6,450.0 736.9,449.5 736.6,449.2 736.4,448.9 736.2,448.5 736.1,447.7 735.8,446.7 735.4,445.7 734.9,444.8 734.3,444.1 733.9,443.4 733.5,442.8 733.2,442.1 733.0,441.2 732.7,440.6 732.5,440.2 732.3,440.0Z"/>
<path d="M747.0,442.5 747.0,442.2 746.7,441.7 746.4,441.1 745.8,440.2 745.2,439.4 744.5,438.7 743.8,437.9 743.0,437.2 742.1,436.5 741.0,436.1 739.9,435.7 739.0,435.6 738.5,435.5 738.1,435.3 737.6,434.9 737.2,434.4 736.9,433.9 736.8,433.4 736.7,432.8 736.9,431.9 737.0,431.2 737.0,430.7 736.9,430.4 736.2,430.1 735.9,430.3 735.6,430.7 735.2,431.3 734.6,432.2 734.3,433.3 734.3,434.5 734.6,435.7 735.2,436.8 736.0,437.8 737.1,438.5 738.3,438.9 739.3,439.0 740.0,439.2 740.6,439.4 741.3,439.7 742.0,440.2 742.8,440.7 743.5,441.2 744.3,441.8 745.0,442.3 745.6,442.7 746.1,443.0 746.4,443.0Z"/>
<path d="M666.6,448.7 666.9,448.9 667.4,448.9 668.2,448.9 669.1,448.9 669.7,449.1 670.2,449.4 670.6,449.8 671.2,450.5 672.0,451.3 672.9,452.0 673.8,452.6 674.6,453.0 675.1,453.4 675.4,453.8 675.7,454.2 675.9,454.9 676.0,455.5 676.1,456.2 676.0,456.9 675.8,457.6 675.6,458.2 675.2,458.7 674.7,459.2 673.9,459.6 673.2,459.9 672.8,460.2 672.6,460.5 672.9,461.3 673.1,461.4 673.7,461.4 674.4,461.3 675.5,461.1 676.6,460.6 677.5,459.9 678.3,458.9 678.9,457.8 679.3,456.6 679.4,455.4 679.3,454.2 679.0,452.9 678.4,451.8 677.5,450.8 676.4,450.0 675.4,449.6 674.7,449.2 674.0,448.8 673.3,448.3 672.4,447.6 671.3,447.0 670.1,446.8 668.9,446.8 667.9,447.2 667.2,447.4 666.7,447.7 666.5,447.9Z"/>
<path d="M682.0,452.2 681.7,452.3 681.2,452.6 680.6,453.1 679.8,453.7 679.1,454.1 678.4,454.4 677.6,454.5 676.6,454.6 675.4,454.8 674.3,455.0 673.2,455.3 672.2,455.8 671.2,456.2 670.2,456.8 669.2,457.4 668.4,458.0 667.5,458.6 666.7,459.1 665.8,459.6 664.9,460.1 664.2,460.5 663.7,460.8 663.5,461.0 663.8,461.7 664.1,461.8 664.6,461.8 665.4,461.6 666.5,461.4 667.6,461.1 668.6,460.7 669.7,460.2 670.6,459.8 671.5,459.3 672.4,458.9 673.3,458.5 674.2,458.2 675.2,457.9 676.1,457.6 677.0,457.3 678.1,457.1 679.3,456.6 680.3,456.0 681.2,455.1 681.8,454.2 682.2,453.5 682.5,453.0 682.5,452.7Z"/>
<path d="M692.5,454.6 692.7,454.9 693.0,455.3 693.6,455.9 694.4,456.6 695.1,457.3 695.6,458.1 696.0,458.9 696.4,459.8 696.7,460.7 696.8,461.6 696.8,462.5 696.8,463.5 696.6,464.5 696.5,465.5 696.3,466.5 696.0,467.5 695.8,468.6 695.5,469.7 695.4,470.8 695.2,471.8 695.0,472.7 694.6,473.6 694.2,474.5 693.6,475.4 693.2,476.1 693.0,476.6 692.9,476.9 693.4,477.3 693.7,477.2 694.1,476.8 694.7,476.3 695.5,475.4 696.2,474.5 696.8,473.5 697.3,472.4 697.6,471.3 697.9,470.3 698.2,469.2 698.5,468.2 698.9,467.1 699.1,466.0 699.3,464.8 699.4,463.7 699.4,462.4 699.3,461.2 699.0,460.0 698.5,458.9 697.9,457.8 697.2,456.9 696.3,456.1 695.4,455.3 694.4,454.7 693.7,454.4 693.2,454.1 692.9,454.1Z"/>
<path d="M699.0,454.9 699.1,455.2 699.4,455.6 699.8,456.2 700.4,456.9 700.8,457.6 701.1,458.3 701.4,459.0 701.5,459.9 701.7,460.8 702.0,461.7 702.2,462.7 702.6,463.7 703.1,464.8 703.8,465.7 704.7,466.4 705.5,466.9 706.1,467.3 706.5,467.8 706.9,468.4 707.2,469.3 707.5,469.9 707.7,470.4 707.9,470.6 708.7,470.4 708.8,470.2 708.8,469.7 708.8,468.9 708.8,467.9 708.5,466.8 708.0,465.8 707.2,464.9 706.5,464.3 706.0,463.8 705.7,463.2 705.4,462.6 705.1,461.8 704.8,460.9 704.5,460.0 704.2,459.1 703.8,458.1 703.3,457.1 702.6,456.3 701.8,455.5 700.9,454.9 700.3,454.6 699.8,454.4 699.5,454.3Z"/>
<path d="M712.8,451.8 712.5,451.7 711.9,451.6 711.1,451.5 709.9,451.4 708.7,451.4 707.6,451.5 706.4,451.8 705.3,452.1 704.4,452.3 703.4,452.4 702.4,452.4 701.5,452.3 700.6,452.2 699.7,451.9 698.9,451.6 697.9,451.0 696.7,450.5 695.5,450.3 694.2,450.3 692.9,450.5 691.7,450.9 690.7,451.4 689.7,452.2 688.9,453.0 688.3,453.6 688.0,454.1 687.8,454.4 688.3,454.9 688.6,454.8 689.1,454.5 689.8,454.0 690.6,453.4 691.5,453.0 692.4,452.7 693.3,452.6 694.2,452.6 695.1,452.7 695.9,452.9 696.7,453.3 697.6,453.9 698.8,454.4 700.0,454.8 701.2,455.0 702.5,455.0 703.7,454.9 704.9,454.7 706.0,454.3 707.1,453.8 708.0,453.4 709.0,453.2 710.0,453.0 711.1,452.8 711.9,452.7 712.5,452.6 712.8,452.5Z"/>
<path d="M729.9,447.0 729.7,447.1 729.3,447.5 728.8,448.0 728.1,448.8 727.4,449.5 726.7,450.3 725.9,451.0 725.3,451.7 724.6,452.3 723.9,452.8 723.1,453.2 722.2,453.6 721.4,454.0 720.4,454.3 719.5,454.7 718.6,455.0 717.8,455.2 716.9,455.3 716.1,455.3 715.2,455.3 714.4,455.2 713.6,454.9 712.8,454.6 712.0,454.2 711.4,453.6 710.9,453.0 710.4,452.3 710.1,451.4 709.8,450.7 709.6,450.2 709.4,450.0 708.8,450.2 708.7,450.4 708.8,451.0 708.9,451.7 709.0,452.8 709.4,453.9 710.0,454.8 710.7,455.7 711.6,456.4 712.6,457.0 713.7,457.5 714.8,457.8 716.0,457.9 717.1,457.9 718.3,457.8 719.4,457.6 720.4,457.2 721.4,456.8 722.4,456.4 723.4,455.9 724.3,455.4 725.3,454.7 726.1,454.0 726.9,453.1 727.5,452.3 728.1,451.4 728.7,450.6 729.2,449.7 729.8,448.8 730.2,448.1 730.4,447.7 730.5,447.4Z"/>
<path d="M740.1,454.1 740.0,454.4 739.9,454.9 739.7,455.7 739.6,456.8 739.7,458.0 740.0,459.1 740.4,460.2 741.0,461.2 741.6,462.0 742.1,462.9 742.5,463.8 743.0,464.6 743.4,465.5 743.7,466.4 744.0,467.3 744.3,468.3 744.7,469.4 745.3,470.4 745.9,471.3 746.7,472.1 747.2,472.7 747.7,473.0 747.9,473.2 748.5,472.8 748.5,472.5 748.3,471.9 747.9,471.2 747.5,470.3 747.1,469.5 746.9,468.6 746.7,467.7 746.6,466.7 746.3,465.6 746.0,464.5 745.5,463.4 745.0,462.4 744.5,461.5 743.8,460.5 743.2,459.7 742.5,458.9 742.0,458.2 741.7,457.5 741.4,456.7 741.3,455.7 741.1,454.9 741.0,454.4 740.9,454.1Z"/>
<path d="M656.9,463.0 657.1,463.2 657.5,463.6 658.2,464.2 659.0,464.8 659.8,465.5 660.4,466.3 661.0,467.1 661.6,468.0 662.3,469.0 663.1,469.9 664.1,470.8 665.2,471.5 666.4,472.1 667.8,472.2 669.2,472.1 670.5,471.6 671.6,471.0 672.6,470.3 673.6,469.5 674.4,468.6 675.1,467.7 675.8,466.7 676.4,465.7 677.0,464.7 677.3,463.9 677.5,463.4 677.6,463.1 677.0,462.6 676.7,462.8 676.3,463.2 675.7,463.8 675.0,464.7 674.2,465.4 673.5,466.2 672.7,466.9 671.9,467.5 671.1,468.1 670.2,468.5 669.4,468.9 668.5,469.1 667.8,469.2 667.2,469.1 666.6,468.9 665.8,468.4 665.0,467.8 664.3,467.2 663.6,466.5 662.9,465.6 662.0,464.7 661.1,464.0 660.0,463.3 659.0,462.8 658.2,462.5 657.6,462.4 657.3,462.3Z"/>
<path d="M674.0,456.4 673.7,456.6 673.3,456.9 672.7,457.5 672.1,458.2 671.5,458.7 670.9,459.0 670.2,459.2 669.5,459.4 669.0,459.3 668.5,459.2 668.1,459.0 667.5,458.5 666.6,457.9 665.8,457.3 664.9,456.7 664.0,456.2 663.0,455.7 662.1,455.2 661.0,454.8 660.0,454.5 659.3,454.3 658.7,454.2 658.4,454.2 658.0,455.1 658.1,455.3 658.5,455.7 659.1,456.3 659.9,456.9 660.7,457.5 661.4,458.1 662.1,458.8 662.9,459.4 663.7,460.1 664.4,460.8 665.2,461.4 666.2,462.1 667.5,462.7 668.9,462.8 670.2,462.6 671.4,462.1 672.5,461.4 673.3,460.6 674.0,459.6 674.5,458.5 674.7,457.8 674.8,457.2 674.8,456.9Z"/>
<path d="M684.4,456.7 684.1,456.7 683.6,456.9 682.9,457.3 682.0,457.9 681.3,458.1 680.5,458.1 679.8,458.0 679.0,457.7 678.1,457.3 677.4,456.9 676.6,456.4 675.9,455.7 675.0,455.0 674.2,454.3 673.4,453.7 672.6,453.1 672.2,452.6 671.8,452.1 671.6,451.4 671.4,450.4 670.9,449.1 670.2,448.1 669.3,447.2 668.2,446.6 667.1,446.1 665.9,445.8 664.8,445.6 663.7,445.5 662.9,445.5 662.3,445.6 662.0,445.6 661.9,446.5 662.1,446.6 662.7,446.8 663.4,447.1 664.4,447.3 665.3,447.7 666.1,448.1 666.9,448.7 667.6,449.2 668.0,449.8 668.3,450.4 668.4,451.0 668.5,452.1 668.9,453.4 669.5,454.5 670.4,455.5 671.4,456.3 672.2,456.9 673.1,457.6 674.0,458.2 674.9,458.9 676.0,459.4 677.1,459.9 678.2,460.2 679.5,460.4 680.7,460.4 681.9,460.0 683.0,459.4 683.8,458.6 684.4,458.0 684.7,457.6 684.9,457.3Z"/>
<path d="M692.5,459.6 692.3,459.9 692.2,460.3 692.1,461.0 692.0,462.0 692.1,463.1 692.2,464.1 692.6,465.1 693.1,466.2 693.9,467.1 695.0,467.8 696.2,468.2 697.2,468.3 698.1,468.3 698.9,468.4 699.8,468.5 700.6,468.6 701.3,468.7 702.0,468.9 702.6,469.3 703.3,469.8 703.9,470.2 704.4,470.4 704.6,470.5 705.2,469.9 705.2,469.6 705.0,469.1 704.6,468.5 704.1,467.7 703.3,466.9 702.4,466.3 701.4,465.8 700.4,465.5 699.4,465.2 698.5,465.0 697.5,464.9 696.7,464.9 696.3,464.8 695.9,464.7 695.6,464.4 695.1,463.8 694.7,463.2 694.4,462.5 694.1,461.8 693.9,460.9 693.7,460.2 693.5,459.8 693.3,459.6Z"/>
<path d="M707.1,460.6 707.0,460.8 706.8,461.2 706.5,461.8 706.2,462.7 706.0,463.6 705.8,464.6 705.7,465.5 705.7,466.4 705.6,467.2 705.5,468.0 705.3,468.8 705.1,469.5 704.8,470.1 704.5,470.6 704.0,471.1 703.3,471.6 702.6,472.5 702.2,473.6 702.0,474.7 702.1,475.8 702.4,476.8 702.9,477.7 703.5,478.5 704.3,479.1 704.8,479.6 705.2,479.8 705.4,479.9 705.9,479.4 705.9,479.2 705.7,478.8 705.3,478.2 704.8,477.5 704.5,476.9 704.3,476.2 704.3,475.5 704.3,474.9 704.5,474.4 704.8,474.0 705.1,473.6 705.8,473.1 706.6,472.3 707.2,471.4 707.7,470.4 707.9,469.4 708.0,468.4 708.1,467.4 708.0,466.4 707.9,465.5 707.8,464.7 707.8,463.8 707.8,463.0 707.9,462.1 707.9,461.4 707.9,461.0 707.8,460.7Z"/>
<path d="M721.7,459.5 721.7,459.8 721.8,460.3 722.1,461.0 722.5,462.0 723.0,463.0 723.5,463.9 724.1,464.8 724.7,465.7 725.6,466.6 726.5,467.3 727.5,467.9 728.5,468.3 729.1,468.6 729.7,469.1 730.2,469.6 730.7,470.3 731.4,471.2 732.0,472.0 732.7,472.8 733.3,473.4 733.7,474.0 733.9,474.7 734.0,475.4 733.9,476.3 733.9,477.1 733.9,477.6 734.0,477.9 734.7,478.1 734.9,477.9 735.2,477.4 735.5,476.7 735.8,475.6 736.0,474.5 735.8,473.3 735.4,472.2 734.8,471.2 734.3,470.3 733.7,469.5 733.2,468.6 732.6,467.7 731.8,466.8 730.8,466.0 729.7,465.5 728.7,465.1 728.0,464.8 727.3,464.4 726.7,463.9 726.0,463.3 725.4,462.6 724.7,461.8 724.1,461.1 723.5,460.3 723.0,459.7 722.6,459.3 722.4,459.1Z"/>
<path d="M735.9,461.8 735.9,461.6 735.9,461.0 735.8,460.2 735.7,459.1 735.6,458.0 735.5,456.9 735.4,455.9 735.3,454.9 735.4,454.1 735.7,453.4 736.1,452.8 736.8,452.1 737.5,451.1 738.2,450.1 738.7,449.1 739.1,448.0 739.6,447.2 740.0,446.3 740.6,445.5 741.2,444.7 741.9,444.0 742.6,443.3 743.3,442.6 744.1,442.0 744.7,441.7 745.5,441.5 746.3,441.6 747.2,441.9 748.0,442.1 748.6,442.2 748.9,442.2 749.1,441.6 748.9,441.4 748.5,441.1 747.7,440.7 746.7,440.1 745.5,439.8 744.3,439.8 743.1,440.2 742.0,440.8 741.1,441.5 740.1,442.2 739.3,443.0 738.5,443.9 737.7,444.8 737.1,445.8 736.6,446.9 736.2,447.9 735.7,448.8 735.3,449.6 734.7,450.4 734.0,451.3 733.4,452.5 733.1,453.7 733.1,455.0 733.3,456.2 733.6,457.3 733.9,458.3 734.2,459.4 734.5,460.5 734.8,461.2 735.0,461.7 735.2,462.0Z"/>
<path d="M740.3,462.4 740.0,462.4 739.6,462.4 738.9,462.6 738.0,463.0 737.2,463.3 736.3,463.8 735.5,464.2 734.8,464.6 734.3,464.8 733.8,465.0 733.2,465.0 732.4,465.0 731.4,465.1 730.4,465.2 729.5,465.5 728.6,465.8 727.8,466.0 727.0,466.3 726.2,466.5 725.4,466.7 724.7,466.9 724.3,467.1 724.0,467.3 724.1,468.1 724.3,468.3 724.7,468.5 725.4,468.6 726.3,468.8 727.3,468.9 728.3,468.9 729.2,468.8 730.1,468.7 730.9,468.6 731.7,468.6 732.5,468.6 733.5,468.6 734.6,468.4 735.7,468.0 736.6,467.4 737.4,466.7 738.0,466.1 738.6,465.5 739.2,464.9 739.9,464.3 740.4,463.8 740.7,463.4 740.8,463.2Z"/>
<path d="M670.4,467.3 670.1,467.5 669.8,467.9 669.3,468.6 668.8,469.6 668.4,470.8 668.1,472.0 668.1,473.2 668.2,474.3 668.3,475.3 668.4,476.2 668.4,477.2 668.4,478.0 668.3,478.6 668.1,479.1 667.7,479.6 667.1,480.1 666.4,480.8 665.6,481.4 664.8,482.0 663.9,482.6 663.3,483.2 662.9,483.6 662.7,483.8 663.1,484.6 663.5,484.7 664.0,484.6 664.8,484.4 665.8,484.1 666.9,483.7 667.9,483.2 668.9,482.7 670.0,482.0 670.9,481.0 671.6,479.8 671.9,478.4 672.0,477.2 671.9,476.0 671.7,474.9 671.5,473.7 671.2,472.8 671.0,472.0 670.9,471.2 671.0,470.3 671.2,469.3 671.3,468.5 671.3,468.0 671.2,467.6Z"/>
<path d="M675.2,464.7 674.9,464.7 674.3,464.9 673.6,465.2 672.6,465.7 671.7,466.2 670.7,466.8 669.8,467.3 668.8,468.0 667.9,469.0 667.2,470.1 666.8,471.4 666.7,472.5 666.6,473.2 666.3,473.8 665.9,474.4 665.1,475.1 664.4,476.2 663.9,477.3 663.6,478.6 663.5,479.7 663.4,480.5 663.1,481.3 662.7,482.1 662.1,482.9 661.6,483.6 661.4,484.1 661.3,484.4 661.8,484.9 662.1,484.8 662.6,484.5 663.2,484.0 664.1,483.3 664.9,482.4 665.5,481.3 666.0,480.2 666.2,479.2 666.5,478.4 666.9,477.8 667.4,477.2 668.2,476.4 669.0,475.4 669.5,474.2 669.8,472.9 669.8,471.8 670.0,471.2 670.2,470.6 670.6,470.0 671.3,469.3 672.1,468.6 672.8,467.9 673.6,467.2 674.5,466.6 675.1,466.0 675.4,465.6 675.6,465.3Z"/>
<path d="M689.2,472.8 688.9,473.0 688.7,473.4 688.4,474.1 688.0,475.1 687.6,476.0 687.3,476.9 686.9,477.8 686.6,478.8 686.3,480.0 686.3,481.2 686.4,482.4 686.7,483.5 687.0,484.5 687.3,485.4 687.7,486.4 688.2,487.4 689.0,488.5 689.9,489.2 691.1,489.7 692.2,489.8 692.9,489.9 693.5,489.9 693.8,489.8 694.0,488.9 693.8,488.7 693.4,488.3 692.7,488.0 692.0,487.6 691.5,487.1 691.2,486.7 691.0,486.1 690.8,485.3 690.6,484.4 690.4,483.5 690.1,482.5 689.9,481.7 689.8,481.0 689.7,480.2 689.8,479.5 689.9,478.6 690.1,477.6 690.2,476.6 690.2,475.5 690.3,474.5 690.3,473.8 690.2,473.2 690.0,473.0Z"/>
<path d="M700.2,467.8 700.1,468.1 700.2,468.6 700.4,469.3 700.7,470.3 701.2,471.3 701.9,472.2 702.8,473.0 703.5,473.5 703.8,473.9 704.0,474.2 704.1,474.7 704.1,475.2 704.1,475.7 704.0,476.1 703.7,476.5 703.1,477.2 702.4,478.1 702.0,479.2 701.7,480.3 701.6,481.4 701.6,482.1 701.7,482.6 701.8,482.9 702.7,483.1 702.9,482.9 703.2,482.5 703.5,481.8 703.9,481.0 704.3,480.4 704.8,479.8 705.3,479.4 706.2,478.8 707.0,477.8 707.5,476.6 707.7,475.3 707.6,474.0 707.2,472.7 706.4,471.6 705.4,470.8 704.5,470.4 703.8,470.0 703.2,469.6 702.7,469.1 702.1,468.4 701.6,467.8 701.2,467.5 701.0,467.3Z"/>
<path d="M715.2,470.5 715.3,470.3 715.5,469.7 715.8,468.9 716.0,467.7 716.0,466.5 715.7,465.3 715.0,464.1 714.2,463.3 713.6,462.6 713.2,461.8 712.8,461.0 712.5,460.1 712.4,459.5 712.5,458.8 712.7,458.2 713.2,457.2 713.6,455.9 713.8,454.7 713.7,453.4 713.4,452.1 713.0,451.0 712.6,449.9 712.1,448.9 711.6,447.9 711.1,447.2 710.8,446.7 710.5,446.5 709.8,446.8 709.8,447.1 709.9,447.7 710.1,448.5 710.4,449.6 710.6,450.6 710.8,451.6 711.0,452.6 711.1,453.6 711.0,454.4 710.8,455.2 710.5,455.9 709.9,456.9 709.4,458.2 709.3,459.6 709.5,460.9 710.0,462.2 710.6,463.3 711.4,464.3 712.3,465.2 713.1,465.8 713.6,466.3 714.0,467.0 714.2,467.7 714.2,468.7 714.2,469.6 714.3,470.1 714.4,470.4Z"/>
<path d="M729.0,467.1 729.1,466.8 729.3,466.4 729.5,465.6 729.6,464.7 729.8,463.9 730.1,463.1 730.4,462.4 730.9,461.5 731.2,460.3 731.3,459.1 731.2,457.9 730.9,456.8 730.6,455.9 730.2,454.9 729.8,454.0 729.3,453.0 728.5,452.1 727.7,451.3 726.7,450.7 725.7,450.3 725.0,450.1 724.5,450.0 724.2,450.1 723.8,450.9 723.9,451.1 724.2,451.5 724.8,452.0 725.5,452.6 725.9,453.1 726.3,453.7 726.6,454.4 726.8,455.2 727.0,456.0 727.3,456.9 727.5,457.8 727.7,458.6 727.8,459.2 727.9,459.9 727.8,460.5 727.5,461.4 727.3,462.5 727.3,463.6 727.3,464.7 727.5,465.7 727.7,466.4 727.9,466.9 728.1,467.1Z"/>
<path d="M738.9,466.9 738.6,466.9 738.1,467.1 737.3,467.4 736.4,467.8 735.7,467.9 735.1,467.9 734.4,467.6 733.5,467.2 732.2,466.8 730.9,466.8 729.5,467.0 728.2,467.5 727.1,468.2 726.1,469.1 725.3,470.2 724.9,471.3 724.5,472.0 724.0,472.7 723.4,473.4 722.7,474.1 721.9,475.0 721.2,475.9 720.5,476.8 720.0,477.8 719.6,478.6 719.4,479.1 719.4,479.4 720.1,479.9 720.4,479.8 720.9,479.5 721.5,478.9 722.2,478.2 723.0,477.5 723.7,476.9 724.5,476.4 725.5,475.7 726.4,474.9 727.3,474.0 728.0,473.0 728.4,472.1 728.9,471.5 729.3,471.1 729.9,470.7 730.6,470.4 731.2,470.2 731.9,470.1 732.6,470.2 733.7,470.5 735.0,470.5 736.3,470.3 737.4,469.7 738.3,469.0 738.9,468.4 739.3,468.0 739.4,467.7Z"/>
<path d="M663.5,479.2 663.3,479.4 663.1,479.9 662.8,480.7 662.4,481.8 662.3,482.9 662.3,484.1 662.6,485.3 663.0,486.3 663.2,487.1 663.2,487.9 663.1,488.7 662.9,489.5 662.6,490.4 662.3,491.3 661.9,492.2 661.4,493.0 660.9,493.8 660.3,494.6 659.7,495.4 658.9,496.2 658.3,497.2 657.8,498.2 657.4,499.4 657.3,500.5 657.2,501.3 657.2,501.8 657.3,502.1 658.0,502.3 658.2,502.1 658.4,501.6 658.7,500.8 659.0,499.9 659.5,499.1 660.0,498.3 660.6,497.7 661.4,497.1 662.3,496.3 663.0,495.4 663.7,494.5 664.4,493.5 664.9,492.5 665.3,491.4 665.7,490.3 665.9,489.0 665.9,487.8 665.7,486.6 665.3,485.4 664.7,484.5 664.4,483.7 664.2,482.9 664.1,482.0 664.2,481.0 664.3,480.2 664.3,479.6 664.2,479.3Z"/>
<path d="M669.4,474.9 669.2,475.2 669.1,475.7 668.9,476.5 668.8,477.6 668.7,478.7 668.8,479.9 669.0,481.0 669.4,482.1 669.7,483.1 670.0,484.1 670.3,485.1 670.6,485.9 670.8,486.6 670.8,487.3 670.7,488.0 670.4,489.0 670.3,490.3 670.4,491.5 670.8,492.7 671.3,493.7 671.8,494.4 672.1,494.8 672.4,495.0 673.2,494.7 673.3,494.4 673.2,493.8 673.1,493.0 672.9,492.1 672.9,491.3 673.0,490.6 673.3,489.9 673.7,488.9 674.1,487.7 674.1,486.4 673.9,485.1 673.5,483.9 673.1,482.9 672.7,482.0 672.3,481.0 671.8,480.1 671.5,479.3 671.2,478.4 670.9,477.5 670.8,476.5 670.6,475.7 670.4,475.1 670.2,474.9Z"/>
<path d="M683.1,480.5 683.3,480.7 683.8,480.9 684.6,481.1 685.6,481.3 686.6,481.5 687.6,481.7 688.7,481.8 689.5,481.9 690.2,482.1 690.7,482.5 691.1,482.9 691.5,483.5 691.8,484.0 691.9,484.5 691.9,485.1 691.7,485.8 691.4,486.4 691.0,486.8 690.4,487.2 689.6,487.6 688.8,487.9 688.4,488.1 688.2,488.3 688.3,489.0 688.6,489.1 689.1,489.2 689.9,489.1 691.0,489.0 692.2,488.6 693.1,487.9 693.9,487.0 694.5,485.8 694.7,484.5 694.6,483.2 694.1,482.0 693.3,480.9 692.3,480.1 691.2,479.5 690.0,479.3 688.8,479.3 687.8,479.3 686.8,479.4 685.7,479.4 684.7,479.5 683.9,479.6 683.4,479.7 683.1,479.8Z"/>
<path d="M698.2,478.3 698.0,478.5 697.6,478.8 697.2,479.4 696.7,480.3 696.3,481.2 696.1,482.3 695.9,483.3 695.9,484.2 695.8,484.6 695.6,485.0 695.3,485.3 694.6,485.9 693.8,486.9 693.3,488.0 693.0,489.2 693.1,490.5 693.4,491.7 693.9,492.8 694.7,493.7 695.6,494.4 696.5,494.9 697.4,495.4 698.3,495.8 699.2,496.1 699.9,496.2 700.4,496.3 700.7,496.3 701.1,495.5 701.0,495.2 700.6,494.9 700.1,494.4 699.4,493.9 698.7,493.3 698.1,492.8 697.5,492.1 697.0,491.6 696.8,491.1 696.7,490.7 696.6,490.2 696.6,489.6 696.8,489.1 696.9,488.7 697.2,488.3 697.9,487.7 698.6,486.6 699.0,485.4 699.0,484.2 698.8,483.2 698.7,482.5 698.7,481.7 698.8,481.0 699.0,480.1 699.1,479.4 699.1,478.9 699.0,478.6Z"/>
<path d="M709.1,476.3 709.4,476.2 709.8,475.9 710.4,475.4 711.2,474.6 712.0,473.8 712.7,473.0 713.3,472.1 713.9,471.1 714.5,470.1 714.9,469.1 715.4,468.1 715.7,467.2 716.0,466.5 716.4,466.0 717.0,465.6 717.8,465.2 718.8,464.7 719.7,464.1 720.6,463.5 721.4,462.9 722.1,462.5 722.9,462.2 723.7,462.0 724.7,461.9 725.7,461.9 726.7,461.9 727.6,462.0 728.7,462.2 729.5,462.3 730.0,462.3 730.3,462.2 730.5,461.6 730.2,461.4 729.8,461.1 729.0,460.8 728.0,460.4 726.9,460.1 725.9,459.9 724.7,459.7 723.6,459.7 722.4,459.8 721.2,460.1 720.1,460.6 719.1,461.2 718.2,461.7 717.4,462.2 716.5,462.6 715.4,463.2 714.4,464.0 713.6,465.0 713.1,466.2 712.8,467.3 712.5,468.2 712.2,469.2 711.9,470.1 711.5,471.0 711.0,471.9 710.5,472.8 710.0,473.6 709.4,474.4 708.9,475.1 708.7,475.6 708.6,475.8Z"/>
<path d="M722.0,475.7 721.8,475.8 721.4,476.1 720.9,476.6 720.3,477.2 719.7,477.7 719.0,478.0 718.4,478.3 717.5,478.5 716.5,478.8 715.6,479.2 714.7,479.6 713.7,480.2 712.9,481.0 712.2,481.9 711.8,482.9 711.5,483.9 711.3,484.7 711.0,485.4 710.6,486.2 710.2,487.0 709.8,487.6 709.6,488.1 709.6,488.3 710.1,488.8 710.4,488.7 710.8,488.4 711.3,487.9 712.1,487.3 712.7,486.5 713.3,485.6 713.8,484.7 714.1,483.9 714.5,483.3 714.9,482.8 715.4,482.4 716.0,482.0 716.8,481.6 717.6,481.2 718.3,480.9 719.3,480.5 720.2,479.9 721.0,479.2 721.7,478.4 722.1,477.5 722.4,476.8 722.6,476.3 722.6,476.1Z"/>
<path d="M734.3,479.1 734.0,479.1 733.5,479.2 732.7,479.5 731.6,479.9 730.6,480.4 729.6,480.9 728.6,481.5 727.7,482.2 726.8,482.8 725.9,483.3 725.0,483.9 724.2,484.4 723.2,485.0 722.3,485.5 721.4,486.0 720.4,486.5 719.3,487.3 718.4,488.3 717.7,489.4 717.2,490.5 716.8,491.5 716.3,492.5 715.9,493.4 715.4,494.4 715.0,495.4 714.5,496.4 714.1,497.4 713.7,498.5 713.4,499.2 713.2,499.8 713.2,500.1 714.0,500.5 714.2,500.3 714.6,499.9 715.1,499.3 715.8,498.4 716.5,497.5 717.1,496.6 717.7,495.8 718.4,494.8 719.0,493.9 719.6,493.0 720.2,492.0 720.6,491.1 721.1,490.5 721.6,490.0 722.2,489.6 723.1,489.1 724.1,488.5 725.1,487.9 726.0,487.3 726.9,486.6 727.8,485.9 728.7,485.2 729.5,484.4 730.3,483.6 731.0,482.9 731.8,482.2 732.6,481.6 733.5,481.0 734.1,480.5 734.6,480.1 734.7,479.9Z"/>
<path d="M744.7,476.6 744.6,476.9 744.4,477.4 744.1,478.2 743.9,479.4 743.8,480.6 744.0,481.8 744.4,483.1 745.1,484.2 746.0,485.2 747.0,486.0 748.3,486.5 749.4,486.7 750.2,487.0 751.0,487.3 751.8,487.8 752.6,488.4 753.6,489.1 754.7,489.7 755.8,490.1 756.9,490.5 757.7,490.7 758.2,490.8 758.6,490.7 758.9,490.0 758.7,489.8 758.3,489.4 757.6,488.9 756.7,488.4 755.8,487.8 755.1,487.1 754.3,486.4 753.5,485.6 752.5,484.8 751.4,484.2 750.2,483.8 749.1,483.6 748.5,483.3 747.9,483.0 747.3,482.5 746.7,481.8 746.3,481.1 746.0,480.3 745.8,479.4 745.8,478.4 745.7,477.5 745.6,477.0 745.5,476.7Z"/>
<path d="M664.8,487.8 664.5,487.9 664.0,488.2 663.4,488.7 662.5,489.5 661.7,490.3 661.0,491.3 660.4,492.4 660.0,493.5 659.7,494.6 659.3,495.6 659.0,496.7 658.7,497.8 658.5,498.9 658.2,500.0 658.1,501.1 658.0,502.3 658.0,503.6 658.2,504.8 658.6,505.9 659.1,506.9 659.5,507.7 659.8,508.2 660.1,508.4 660.7,508.1 660.8,507.8 660.7,507.2 660.5,506.4 660.3,505.4 660.2,504.4 660.2,503.5 660.3,502.6 660.6,501.6 660.8,500.6 661.1,499.5 661.4,498.5 661.7,497.4 661.9,496.4 662.2,495.3 662.5,494.2 662.7,493.2 663.0,492.3 663.3,491.4 663.8,490.6 664.5,489.7 664.9,489.1 665.2,488.6 665.3,488.3Z"/>
<path d="M680.6,485.8 680.4,485.9 680.0,486.2 679.6,486.7 679.1,487.4 678.6,487.8 678.0,488.1 677.5,488.4 676.8,488.5 676.4,488.6 675.9,488.5 675.5,488.3 674.9,487.9 674.3,487.5 673.7,487.0 673.0,486.5 672.5,486.1 672.2,485.7 671.9,485.3 671.8,484.7 671.8,483.9 671.8,483.3 671.7,482.8 671.6,482.6 670.9,482.4 670.7,482.6 670.5,483.0 670.2,483.6 669.9,484.5 669.8,485.6 670.0,486.6 670.5,487.6 671.2,488.5 671.8,489.1 672.5,489.8 673.3,490.4 674.2,490.9 675.3,491.3 676.4,491.4 677.5,491.1 678.6,490.7 679.4,490.0 680.1,489.3 680.6,488.4 681.0,487.5 681.2,486.9 681.3,486.4 681.2,486.1Z"/>
<path d="M688.7,489.8 688.6,490.1 688.5,490.7 688.5,491.5 688.6,492.6 688.9,493.8 689.4,494.8 690.1,495.8 690.9,496.7 691.7,497.4 692.4,498.1 693.1,498.8 693.8,499.5 694.3,500.1 694.7,500.7 695.0,501.5 695.3,502.5 695.8,503.6 696.5,504.6 697.3,505.5 698.2,506.2 698.8,506.6 699.3,506.9 699.6,507.0 700.2,506.4 700.1,506.1 699.8,505.6 699.4,505.0 698.8,504.2 698.4,503.4 698.1,502.6 697.9,501.8 697.8,500.7 697.4,499.5 696.8,498.4 696.1,497.4 695.3,496.6 694.5,495.9 693.6,495.2 692.8,494.5 692.0,493.9 691.4,493.4 690.9,492.8 690.5,492.1 690.2,491.1 689.9,490.4 689.6,489.9 689.4,489.7Z"/>
<path d="M701.5,486.4 701.2,486.5 700.9,486.8 700.4,487.3 699.8,487.9 699.3,488.2 698.7,488.4 698.1,488.5 697.2,488.4 696.1,488.6 695.1,489.1 694.1,489.7 693.2,490.5 692.5,491.5 692.0,492.6 691.8,493.8 691.8,494.8 691.7,495.5 691.6,496.3 691.5,497.0 691.2,497.8 691.0,498.8 690.8,499.7 690.7,500.7 690.6,501.6 690.5,502.5 690.4,503.5 690.4,504.4 690.4,505.4 690.5,506.1 690.5,506.5 690.6,506.8 691.5,506.9 691.7,506.7 691.9,506.3 692.1,505.6 692.4,504.7 692.7,503.9 692.9,503.0 693.2,502.1 693.5,501.3 693.8,500.5 694.1,499.7 694.4,498.9 694.8,498.0 695.1,497.0 695.3,496.0 695.4,494.9 695.4,494.1 695.5,493.6 695.6,493.2 695.9,492.7 696.3,492.2 696.7,491.8 697.2,491.5 697.7,491.3 698.7,491.1 699.7,490.7 700.6,490.0 701.3,489.2 701.8,488.3 702.1,487.7 702.2,487.2 702.2,486.9Z"/>
<path d="M717.1,486.7 717.4,486.7 717.8,486.5 718.4,486.1 719.1,485.5 719.8,484.7 720.4,483.9 720.9,483.0 721.3,481.9 721.4,480.7 721.2,479.5 720.6,478.4 720.1,477.7 719.9,477.4 719.8,477.1 719.8,476.7 720.0,476.1 720.1,475.6 720.4,475.0 720.8,474.4 721.4,473.7 722.0,472.7 722.2,471.7 722.2,470.6 722.0,469.6 721.8,468.9 721.6,468.5 721.4,468.3 720.5,468.4 720.4,468.6 720.3,469.1 720.2,469.8 720.1,470.6 720.0,471.1 719.7,471.5 719.3,471.9 718.6,472.4 717.8,473.1 717.2,474.0 716.7,475.0 716.4,476.2 716.3,477.4 716.6,478.7 717.2,479.8 717.9,480.4 718.1,480.7 718.2,481.0 718.3,481.5 718.3,482.1 718.1,482.8 717.9,483.5 717.5,484.2 717.1,484.9 716.7,485.4 716.5,485.9 716.5,486.1Z"/>
<path d="M728.0,487.4 727.9,487.1 727.5,486.8 726.8,486.3 726.0,485.7 725.2,485.1 724.4,484.5 723.6,483.9 722.9,483.3 722.4,482.8 722.0,482.2 721.7,481.5 721.5,480.7 721.4,479.8 721.2,478.8 721.1,477.9 721.1,477.1 721.2,476.4 721.4,475.7 721.7,475.1 722.3,474.3 723.0,473.4 723.4,472.3 723.8,471.2 723.9,470.2 724.0,469.4 724.0,468.8 724.0,468.6 723.2,468.4 723.0,468.6 722.8,469.0 722.4,469.7 722.1,470.7 721.6,471.4 721.1,472.1 720.5,472.8 719.7,473.5 719.0,474.5 718.5,475.6 718.2,476.8 718.2,478.0 718.2,479.2 718.4,480.3 718.6,481.4 719.0,482.5 719.6,483.6 720.3,484.6 721.3,485.4 722.3,485.9 723.2,486.4 724.2,486.9 725.2,487.3 726.1,487.7 726.9,487.9 727.4,488.0 727.7,488.0Z"/>
<path d="M739.5,484.4 739.2,484.3 738.7,484.3 737.9,484.3 736.9,484.5 735.8,484.7 734.8,485.1 733.8,485.6 732.9,486.1 732.1,486.6 731.2,487.1 730.4,487.6 729.6,488.1 728.8,488.6 727.9,489.1 727.1,489.6 726.2,490.1 725.3,490.8 724.5,491.6 723.8,492.5 723.2,493.4 722.9,494.1 722.7,494.6 722.7,494.9 723.3,495.4 723.6,495.3 724.0,495.0 724.7,494.6 725.4,493.9 726.1,493.4 726.8,493.0 727.6,492.7 728.5,492.3 729.4,491.9 730.4,491.5 731.3,491.0 732.1,490.5 733.0,489.9 733.8,489.3 734.7,488.6 735.4,488.0 736.1,487.5 736.8,487.0 737.6,486.5 738.4,486.1 739.1,485.7 739.5,485.4 739.7,485.2Z"/>
</g>
<path d="M745.0,300.4 C735.3,295.5 724.6,293.5 713.9,295.5 C705.1,297.4 698.3,300.4 693.5,304.3 C687.7,309.3 684.7,312.2 681.8,316.2 C677.0,323.1 673.1,328.0 670.2,334.9 C665.3,345.7 663.4,352.6 662.4,361.5 C660.4,372.3 660.4,383.1 662.4,391.0 C663.4,400.9 665.3,409.7 667.2,418.6 C670.2,429.4 673.1,436.3 676.0,443.2 C679.9,452.1 683.8,458.0 688.6,463.9 C695.4,470.8 701.3,475.7 709.0,479.7 C715.8,483.6 720.7,485.6 726.5,486.6 C732.4,487.5 738.2,487.5 745.0,487.5 Z" fill="none" stroke="#1a1a28" stroke-width="3"/>
<path d="M744,261 Q762,264 778,290" fill="none" stroke="#5a0b3b" stroke-width="13" stroke-linecap="round" stroke-linejoin="round"/>
<path d="M744,261 Q762,264 778,290" fill="none" stroke="#e28fc9" stroke-width="10" stroke-linecap="round" stroke-linejoin="round"/>
<path d="M748,261 L748,253" fill="none" stroke="#5a0b3b" stroke-width="8" stroke-linecap="round" stroke-linejoin="round"/>
<path d="M748,261 L748,253" fill="none" stroke="#e28fc9" stroke-width="5" stroke-linecap="round" stroke-linejoin="round"/>
<path d="M758,262 L759,254" fill="none" stroke="#5a0b3b" stroke-width="8" stroke-linecap="round" stroke-linejoin="round"/>
<path d="M758,262 L759,254" fill="none" stroke="#e28fc9" stroke-width="5" stroke-linecap="round" stroke-linejoin="round"/>
<path d="M775,255 L779,292" fill="none" stroke="#5a0b3b" stroke-width="13" stroke-linecap="round" stroke-linejoin="round"/>
<path d="M775,255 L779,292" fill="none" stroke="#e28fc9" stroke-width="10" stroke-linecap="round" stroke-linejoin="round"/>
<path d="M794,306 Q796,285 806,273" fill="none" stroke="#5a0b3b" stroke-width="18" stroke-linecap="round" stroke-linejoin="round"/>
<path d="M794,306 Q796,285 806,273" fill="none" stroke="#e28fc9" stroke-width="15" stroke-linecap="round" stroke-linejoin="round"/>
<path d="M801,296 Q803,284 810,276 L813,280 Q806,290 805,298Z" fill="#f3b36a"/>
<path d="M808,297 Q826,287 843,293" fill="none" stroke="#5a0b3b" stroke-width="13" stroke-linecap="round" stroke-linejoin="round"/>
<path d="M808,297 Q826,287 843,293" fill="none" stroke="#e28fc9" stroke-width="10" stroke-linecap="round" stroke-linejoin="round"/>
<path d="M840,294 L846,302" fill="none" stroke="#5a0b3b" stroke-width="9" stroke-linecap="round" stroke-linejoin="round"/>
<path d="M840,294 L846,302" fill="none" stroke="#e28fc9" stroke-width="6" stroke-linecap="round" stroke-linejoin="round"/>
<path d="M836,289 L840,281" fill="none" stroke="#5a0b3b" stroke-width="8" stroke-linecap="round" stroke-linejoin="round"/>
<path d="M836,289 L840,281" fill="none" stroke="#e28fc9" stroke-width="5" stroke-linecap="round" stroke-linejoin="round"/>
<path d="M745,489 C760,491 772,488 780,484 C790,478 796,472 801,467 C808,460 813,453 816,446 C820,437 823,425 824,415 C825,405 830,398 836,392 C840,386 842,378 845,372 C852,368 860,366 866,360 C868,350 869,340 867,331 C860,326 850,323 843,326 C835,318 827,313 821,310 C810,303 800,299 792,299 C785,293 775,286 764,287 C755,291 750,298 745,303 Z" fill="#e28fc9" stroke="#5a0b3b" stroke-width="2.8" stroke-linejoin="round"/>
<path d="M806,339 Q836,329 865,333" fill="none" stroke="#5a0b3b" stroke-width="19" stroke-linecap="round" stroke-linejoin="round"/>
<path d="M806,339 Q836,329 865,333" fill="none" stroke="#e28fc9" stroke-width="16" stroke-linecap="round" stroke-linejoin="round"/>
<ellipse cx="865" cy="333" rx="3" ry="6.5" fill="#5a0b3b"/>
<path d="M800.4,353.5 805.0,352.2 809.5,351.0 814.1,349.9 818.7,348.9 823.3,347.9 828.0,347.1 832.6,346.3 837.3,345.7 842.1,345.1 846.8,344.6 851.6,344.2 856.4,343.9 861.2,343.7 866.0,343.6 866.0,342.4 861.1,342.4 856.3,342.4 851.5,342.6 846.7,342.9 841.9,343.2 837.1,343.6 832.4,344.2 827.6,344.8 822.9,345.5 818.2,346.3 813.5,347.2 808.8,348.2 804.2,349.3 799.6,350.5Z" fill="#5a0b3b"/>
<path d="M840,350 Q856,350 864,356 Q866,366 858,370 Q848,366 842,362Z" fill="#e28fc9" stroke="#5a0b3b" stroke-width="2"/>
<path d="M800,372 Q812,360 828,368 Q838,380 834,398 Q826,410 812,404 Q800,396 800,372Z" fill="#e28fc9" stroke="#5a0b3b" stroke-width="2.4"/>
<path d="M808.7,380.8 809.8,379.7 810.9,378.8 812.0,378.0 813.1,377.4 814.2,376.9 815.4,376.5 816.6,376.2 817.8,376.1 819.0,376.1 820.3,376.3 821.6,376.6 823.0,377.0 824.4,377.6 825.8,378.3 826.2,377.7 824.8,376.8 823.4,376.1 822.0,375.5 820.6,375.1 819.2,374.9 817.8,374.7 816.4,374.8 815.0,374.9 813.7,375.3 812.4,375.8 811.0,376.4 809.7,377.2 808.5,378.1 807.3,379.2Z" fill="#5a0b3b"/>
<path d="M805.2,392.6 806.2,393.7 807.2,394.7 808.3,395.6 809.5,396.4 810.7,397.1 812.0,397.7 813.3,398.1 814.7,398.5 816.1,398.7 817.6,398.8 819.1,398.8 820.7,398.8 822.4,398.6 824.0,398.3 824.0,397.7 822.3,397.9 820.7,398.0 819.1,397.9 817.7,397.8 816.3,397.6 815.0,397.3 813.7,396.9 812.5,396.4 811.4,395.8 810.4,395.1 809.4,394.3 808.5,393.4 807.6,392.5 806.8,391.4Z" fill="#5a0b3b"/>
<ellipse cx="776" cy="292" rx="6" ry="9.5" fill="#e28fc9" stroke="#5a0b3b" stroke-width="2.6"/>
<ellipse cx="778" cy="293" rx="2.6" ry="6" fill="#5a0b3b"/>
<path d="M780.3,345.4 778.7,345.6 777.1,345.9 775.5,346.3 773.9,346.6 772.3,347.0 770.7,347.4 769.1,347.8 767.6,348.2 766.0,348.7 764.4,349.2 762.9,349.7 761.3,350.2 759.7,350.8 758.2,351.3 758.3,351.7 759.9,351.3 761.5,351.0 763.1,350.6 764.7,350.3 766.3,350.0 767.9,349.7 769.5,349.4 771.1,349.2 772.7,349.0 774.2,348.8 775.8,348.6 777.4,348.5 779.0,348.4 780.6,348.3Z" fill="#5a0b3b"/>
<path d="M781.2,343.5 779.5,343.3 777.9,343.1 776.2,342.9 774.6,342.8 773.0,342.7 771.5,342.7 769.9,342.7 768.4,342.7 766.9,342.8 765.5,343.0 764.0,343.1 762.6,343.3 761.2,343.6 759.9,343.9 760.0,344.3 761.3,344.1 762.7,344.0 764.1,344.0 765.5,343.9 767.0,344.0 768.4,344.0 769.9,344.1 771.4,344.3 772.9,344.4 774.4,344.7 776.0,344.9 777.5,345.2 779.1,345.6 780.7,345.9Z" fill="#5a0b3b"/>
<path d="M783.1,342.9 780.9,342.4 778.8,342.0 776.7,341.6 774.7,341.2 772.6,340.8 770.6,340.5 768.6,340.2 766.7,339.9 764.7,339.6 762.8,339.3 760.9,339.1 759.0,338.9 757.1,338.7 755.3,338.5 755.3,338.9 757.1,339.2 758.9,339.5 760.8,339.9 762.7,340.2 764.6,340.6 766.5,341.0 768.4,341.4 770.4,341.8 772.4,342.3 774.4,342.7 776.4,343.2 778.4,343.7 780.5,344.3 782.6,344.9Z" fill="#5a0b3b"/>
<path d="M781.4,340.5 779.6,339.5 777.9,338.6 776.1,337.8 774.3,336.9 772.5,336.1 770.7,335.4 768.9,334.7 767.1,334.0 765.3,333.4 763.5,332.8 761.7,332.3 759.8,331.8 758.0,331.3 756.1,330.8 756.0,331.2 757.8,331.8 759.6,332.4 761.4,333.0 763.2,333.7 764.9,334.4 766.7,335.2 768.4,336.0 770.1,336.8 771.8,337.7 773.5,338.6 775.2,339.5 776.8,340.5 778.5,341.5 780.2,342.5Z" fill="#5a0b3b"/>
<path d="M784.2,340.5 782.2,339.3 780.2,338.1 778.2,337.0 776.2,335.9 774.2,334.8 772.2,333.7 770.3,332.7 768.3,331.7 766.4,330.7 764.5,329.8 762.6,328.8 760.7,328.0 758.8,327.1 756.9,326.3 756.7,326.6 758.5,327.6 760.3,328.6 762.1,329.7 763.9,330.8 765.8,331.9 767.6,333.0 769.4,334.1 771.3,335.3 773.1,336.5 775.0,337.8 776.9,339.1 778.8,340.3 780.7,341.7 782.6,343.0Z" fill="#5a0b3b"/>
<path d="M782.2,338.1 781.1,337.2 780.0,336.4 778.9,335.6 777.9,334.8 776.8,334.0 775.7,333.3 774.6,332.5 773.5,331.8 772.4,331.0 771.3,330.3 770.2,329.6 769.1,328.9 768.0,328.3 766.8,327.6 766.6,327.9 767.6,328.7 768.7,329.5 769.7,330.3 770.7,331.1 771.7,332.0 772.7,332.8 773.7,333.7 774.7,334.6 775.6,335.4 776.6,336.3 777.6,337.2 778.6,338.2 779.5,339.1 780.5,340.0Z" fill="#5a0b3b"/>
<path d="M785.7,339.6 784.1,338.2 782.5,336.8 781.0,335.4 779.5,334.0 778.0,332.6 776.5,331.1 775.0,329.6 773.6,328.1 772.2,326.5 770.8,324.9 769.4,323.3 768.1,321.7 766.7,320.1 765.4,318.4 765.1,318.6 766.3,320.4 767.5,322.1 768.8,323.8 770.1,325.5 771.4,327.2 772.7,328.8 774.0,330.5 775.4,332.1 776.8,333.7 778.2,335.2 779.7,336.8 781.1,338.3 782.6,339.8 784.1,341.3Z" fill="#5a0b3b"/>
<path d="M785.9,335.9 785.2,334.5 784.5,333.0 783.7,331.5 782.9,330.0 782.1,328.6 781.2,327.1 780.4,325.6 779.5,324.1 778.6,322.6 777.7,321.1 776.8,319.6 775.8,318.1 774.8,316.5 773.8,315.0 773.5,315.2 774.3,316.8 775.2,318.4 776.0,320.0 776.7,321.6 777.5,323.2 778.2,324.8 778.9,326.3 779.6,327.9 780.3,329.4 780.9,331.0 781.6,332.5 782.2,334.0 782.7,335.5 783.3,337.1Z" fill="#5a0b3b"/>
<path d="M787.3,336.9 786.4,335.4 785.4,333.9 784.5,332.3 783.6,330.7 782.8,329.1 781.9,327.4 781.1,325.7 780.3,324.0 779.5,322.2 778.8,320.3 778.0,318.5 777.3,316.6 776.6,314.6 776.0,312.7 775.6,312.8 776.1,314.8 776.6,316.8 777.1,318.8 777.7,320.7 778.2,322.6 778.9,324.5 779.5,326.4 780.2,328.2 780.8,330.0 781.6,331.7 782.3,333.5 783.1,335.2 783.9,336.8 784.7,338.4Z" fill="#5a0b3b"/>
<path d="M788.8,337.3 788.4,336.2 788.0,335.0 787.7,333.7 787.3,332.5 786.9,331.1 786.6,329.8 786.2,328.4 785.9,326.9 785.6,325.4 785.2,323.9 784.9,322.3 784.6,320.7 784.3,319.0 784.1,317.3 783.7,317.4 783.8,319.1 783.9,320.8 784.1,322.4 784.3,324.0 784.4,325.6 784.6,327.1 784.8,328.6 785.0,330.1 785.2,331.5 785.5,332.9 785.7,334.2 785.9,335.5 786.2,336.8 786.4,338.0Z" fill="#5a0b3b"/>
<path d="M790.0,338.7 790.1,336.8 790.1,334.9 790.1,333.0 790.1,331.1 790.0,329.1 789.9,327.2 789.8,325.3 789.6,323.4 789.3,321.5 789.1,319.6 788.7,317.7 788.4,315.8 788.0,314.0 787.6,312.1 787.2,312.2 787.5,314.1 787.7,316.0 787.9,317.9 788.0,319.7 788.2,321.6 788.2,323.5 788.3,325.4 788.3,327.3 788.2,329.2 788.1,331.0 788.0,332.9 787.8,334.8 787.6,336.6 787.4,338.5Z" fill="#5a0b3b"/>
<path d="M791.9,336.5 792.1,335.4 792.3,334.4 792.4,333.3 792.6,332.2 792.7,331.2 792.8,330.1 792.9,329.0 793.0,327.9 793.1,326.9 793.2,325.8 793.3,324.7 793.4,323.6 793.4,322.5 793.5,321.4 793.1,321.4 792.9,322.4 792.7,323.5 792.4,324.6 792.2,325.6 791.9,326.7 791.7,327.7 791.4,328.7 791.1,329.8 790.8,330.8 790.5,331.8 790.2,332.8 789.9,333.8 789.6,334.8 789.3,335.8Z" fill="#5a0b3b"/>
<path d="M792.3,339.2 792.9,337.8 793.5,336.3 794.0,334.9 794.5,333.5 794.9,332.0 795.3,330.7 795.7,329.3 796.1,327.9 796.4,326.6 796.6,325.2 796.9,323.9 797.1,322.6 797.2,321.3 797.4,320.1 797.0,320.0 796.7,321.2 796.3,322.5 796.0,323.7 795.6,325.0 795.2,326.2 794.7,327.5 794.2,328.8 793.7,330.1 793.1,331.4 792.6,332.7 791.9,334.0 791.3,335.4 790.6,336.7 789.8,338.1Z" fill="#5a0b3b"/>
<path d="M793.0,340.2 793.7,339.3 794.3,338.5 794.9,337.6 795.4,336.7 795.9,335.7 796.4,334.8 796.9,333.8 797.3,332.8 797.8,331.8 798.1,330.8 798.5,329.7 798.8,328.7 799.1,327.6 799.4,326.5 799.0,326.4 798.6,327.4 798.2,328.4 797.7,329.4 797.2,330.4 796.7,331.3 796.2,332.2 795.7,333.1 795.1,334.0 794.5,334.8 793.9,335.6 793.2,336.4 792.6,337.1 791.9,337.9 791.2,338.6Z" fill="#5a0b3b"/>
<path d="M795.8,339.6 797.3,338.0 798.7,336.4 800.1,334.8 801.5,333.2 802.8,331.6 804.1,330.1 805.3,328.5 806.5,326.9 807.7,325.4 808.8,323.9 809.9,322.4 811.0,320.8 812.0,319.3 812.9,317.9 812.6,317.6 811.5,319.0 810.3,320.4 809.1,321.7 807.9,323.1 806.6,324.5 805.3,325.9 804.0,327.3 802.6,328.7 801.2,330.1 799.8,331.6 798.3,333.0 796.8,334.4 795.2,335.9 793.6,337.3Z" fill="#5a0b3b"/>
<path d="M796.4,340.8 797.9,339.5 799.4,338.2 800.9,336.9 802.4,335.7 804.0,334.4 805.5,333.1 807.0,331.9 808.5,330.7 810.1,329.4 811.6,328.2 813.1,327.0 814.6,325.8 816.2,324.6 817.7,323.4 817.5,323.1 815.9,324.2 814.2,325.3 812.6,326.4 811.0,327.5 809.4,328.6 807.8,329.7 806.2,330.8 804.6,332.0 803.0,333.1 801.4,334.3 799.8,335.5 798.2,336.6 796.5,337.8 794.9,339.0Z" fill="#5a0b3b"/>
<path d="M795.3,343.1 796.3,342.7 797.4,342.3 798.4,341.8 799.5,341.3 800.4,340.8 801.4,340.3 802.3,339.7 803.2,339.1 804.1,338.5 804.9,337.9 805.7,337.3 806.5,336.6 807.2,336.0 807.9,335.3 807.7,335.0 806.9,335.5 806.0,336.1 805.2,336.6 804.3,337.1 803.4,337.5 802.5,338.0 801.6,338.4 800.7,338.8 799.7,339.2 798.7,339.5 797.7,339.8 796.6,340.1 795.6,340.4 794.5,340.7Z" fill="#5a0b3b"/>
<path d="M795.3,344.1 796.4,343.6 797.5,343.1 798.7,342.6 799.9,342.1 801.0,341.6 802.2,341.2 803.5,340.7 804.7,340.2 805.9,339.8 807.2,339.3 808.5,338.9 809.8,338.4 811.1,338.0 812.5,337.6 812.4,337.2 811.0,337.5 809.6,337.8 808.3,338.1 807.0,338.4 805.6,338.8 804.3,339.1 803.1,339.5 801.8,339.8 800.5,340.2 799.3,340.5 798.1,340.9 796.9,341.3 795.7,341.7 794.5,342.1Z" fill="#5a0b3b"/>
<ellipse cx="788" cy="346" rx="5" ry="6" fill="#5a0b3b"/>
<ellipse cx="792" cy="345" rx="3" ry="4" fill="#e28fc9"/>
<path d="M752.9,447.2 755.8,444.8 758.8,442.2 761.8,439.5 764.8,436.7 768.0,433.7 771.1,430.6 774.4,427.4 777.7,424.0 781.0,420.5 784.5,416.8 787.9,413.0 791.5,409.0 795.1,404.9 798.8,400.7 797.2,399.3 793.5,403.5 789.9,407.6 786.3,411.5 782.8,415.2 779.3,418.8 775.9,422.3 772.6,425.6 769.3,428.8 766.1,431.8 763.0,434.7 759.9,437.5 756.9,440.1 754.0,442.5 751.1,444.8Z" fill="#5a0b3b"/>
<path d="M799.0,400.7 800.0,399.2 801.0,397.5 801.8,395.8 802.4,394.0 802.9,392.1 803.2,390.1 803.4,388.1 803.4,386.0 803.3,383.8 803.1,381.5 802.6,379.2 802.1,376.8 801.4,374.4 800.6,371.8 799.4,372.2 800.2,374.7 800.8,377.1 801.2,379.5 801.5,381.7 801.7,383.9 801.7,386.0 801.6,387.9 801.4,389.8 801.0,391.6 800.5,393.3 799.8,394.9 799.0,396.5 798.1,397.9 797.0,399.3Z" fill="#5a0b3b"/>
<path d="M774.9,416.3 775.4,418.0 775.9,419.6 776.3,421.3 776.7,423.0 777.1,424.7 777.5,426.4 777.8,428.1 778.1,429.8 778.5,431.5 778.7,433.2 779.0,434.9 779.3,436.6 779.5,438.3 779.7,440.0 780.3,440.0 780.2,438.3 780.1,436.5 779.9,434.8 779.8,433.1 779.6,431.3 779.4,429.6 779.2,427.9 778.9,426.2 778.7,424.4 778.4,422.7 778.1,420.9 777.8,419.2 777.4,417.5 777.1,415.7Z" fill="#5a0b3b"/>
<path d="M792.9,416.3 793.4,418.0 793.9,419.7 794.4,421.4 794.9,423.1 795.4,424.8 795.8,426.5 796.3,428.2 796.8,429.9 797.3,431.6 797.8,433.3 798.3,435.0 798.7,436.7 799.2,438.4 799.7,440.1 800.3,439.9 799.9,438.2 799.5,436.5 799.2,434.7 798.8,433.0 798.4,431.3 798.1,429.6 797.7,427.8 797.3,426.1 796.9,424.4 796.6,422.6 796.2,420.9 795.8,419.2 795.4,417.5 795.1,415.7Z" fill="#5a0b3b"/>
<path d="M752.3,385.0 754.9,384.2 757.4,383.4 760.0,382.8 762.6,382.2 765.2,381.7 767.9,381.3 770.6,381.0 773.3,380.8 776.0,380.7 778.7,380.6 781.5,380.7 784.3,380.8 787.1,381.1 789.9,381.4 790.1,380.6 787.2,380.2 784.4,379.8 781.6,379.6 778.7,379.4 776.0,379.4 773.2,379.4 770.4,379.5 767.7,379.7 765.0,380.0 762.3,380.4 759.6,380.9 756.9,381.5 754.3,382.2 751.7,383.0Z" fill="#5a0b3b"/>
<path d="M751.5,416.9 752.7,417.4 753.8,418.0 754.9,418.5 756.0,419.1 757.1,419.7 758.1,420.4 759.1,421.0 760.1,421.7 761.1,422.4 762.1,423.1 763.0,423.9 764.0,424.6 764.9,425.4 765.8,426.2 766.2,425.8 765.4,424.9 764.5,424.0 763.6,423.2 762.7,422.3 761.8,421.5 760.8,420.7 759.9,420.0 758.9,419.2 757.9,418.5 756.8,417.8 755.8,417.1 754.7,416.4 753.6,415.7 752.5,415.1Z" fill="#5a0b3b"/>
<path d="M752.3,469.0 754.9,468.1 757.4,467.2 760.0,466.5 762.7,465.7 765.3,465.0 768.0,464.3 770.6,463.7 773.3,463.1 776.1,462.5 778.8,462.0 781.6,461.6 784.4,461.1 787.2,460.7 790.0,460.4 790.0,459.6 787.1,459.9 784.3,460.2 781.4,460.5 778.6,460.9 775.9,461.3 773.1,461.8 770.4,462.3 767.6,462.9 764.9,463.5 762.2,464.1 759.6,464.8 756.9,465.5 754.3,466.3 751.7,467.0Z" fill="#5a0b3b"/>
<path d="M770.4,458.7 771.8,457.8 773.3,457.0 774.7,456.1 776.2,455.3 777.7,454.5 779.2,453.8 780.7,453.0 782.3,452.3 783.9,451.6 785.5,450.9 787.1,450.2 788.7,449.5 790.4,448.9 792.1,448.3 791.9,447.7 790.2,448.3 788.5,448.8 786.8,449.4 785.1,450.0 783.5,450.7 781.9,451.3 780.3,452.0 778.7,452.7 777.1,453.4 775.6,454.2 774.1,454.9 772.5,455.7 771.1,456.5 769.6,457.3Z" fill="#5a0b3b"/>
<path d="M760.4,323.1 761.8,322.6 763.1,322.1 764.4,321.8 765.8,321.6 767.1,321.6 768.5,321.6 769.9,321.7 771.2,322.0 772.6,322.4 774.1,322.9 775.5,323.6 776.9,324.3 778.4,325.2 779.8,326.2 780.2,325.8 778.8,324.6 777.4,323.6 775.9,322.7 774.5,321.9 773.1,321.2 771.6,320.7 770.1,320.3 768.7,320.0 767.2,319.8 765.7,319.8 764.1,319.8 762.6,320.1 761.1,320.4 759.6,320.9Z" fill="#5a0b3b"/>
<path d="M747.4,338.9 749.1,339.9 750.8,341.0 752.5,342.1 754.1,343.3 755.8,344.6 757.4,346.0 759.0,347.5 760.6,349.1 762.2,350.7 763.7,352.4 765.3,354.2 766.8,356.1 768.3,358.1 769.8,360.2 770.2,359.8 768.9,357.7 767.4,355.6 766.0,353.6 764.5,351.7 763.0,349.9 761.5,348.2 760.0,346.5 758.4,344.9 756.9,343.4 755.2,342.0 753.6,340.6 752.0,339.4 750.3,338.2 748.6,337.1Z" fill="#5a0b3b"/>
<path d="M749.6,361.1 751.8,361.9 754.1,362.6 756.5,363.1 758.9,363.6 761.4,363.9 763.9,364.2 766.5,364.3 769.1,364.3 771.8,364.3 774.5,364.1 777.3,363.8 780.2,363.4 783.1,363.0 786.1,362.4 785.9,361.6 783.0,362.1 780.1,362.4 777.2,362.7 774.5,362.8 771.7,362.9 769.1,362.8 766.5,362.7 764.0,362.5 761.6,362.1 759.2,361.7 756.9,361.1 754.7,360.5 752.5,359.7 750.4,358.9Z" fill="#5a0b3b"/>
<path d="M828.7,409.6 827.6,413.9 826.4,418.0 825.0,422.1 823.6,426.1 822.0,430.0 820.4,433.8 818.7,437.6 816.8,441.2 814.8,444.8 812.8,448.4 810.6,451.8 808.4,455.1 806.0,458.4 803.5,461.6 804.5,462.4 807.0,459.2 809.5,456.0 811.9,452.6 814.1,449.2 816.3,445.7 818.4,442.1 820.3,438.4 822.2,434.7 824.0,430.8 825.6,426.9 827.2,422.9 828.7,418.8 830.0,414.6 831.3,410.4Z" fill="#5a0b3b"/>
<path d="M799.4,469.2 798.0,470.4 796.4,471.5 794.8,472.6 793.0,473.7 791.2,474.7 789.2,475.8 787.2,476.8 785.0,477.8 782.8,478.8 780.4,479.8 777.9,480.8 775.3,481.7 772.6,482.6 769.9,483.5 770.1,484.5 773.0,483.6 775.7,482.8 778.3,481.9 780.8,481.0 783.3,480.1 785.6,479.1 787.8,478.2 789.9,477.2 792.0,476.2 793.9,475.2 795.7,474.1 797.5,473.0 799.1,471.9 800.6,470.8Z" fill="#5a0b3b"/>
<path d="M819.4,318.9 821.2,319.9 822.8,320.8 824.5,321.7 826.1,322.6 827.6,323.5 829.1,324.3 830.6,325.1 832.0,325.9 833.4,326.7 834.8,327.5 836.1,328.2 837.4,329.0 838.6,329.7 839.8,330.3 840.2,329.7 839.1,328.9 837.9,328.1 836.7,327.3 835.4,326.5 834.1,325.6 832.8,324.7 831.4,323.9 830.0,322.9 828.5,322.0 827.0,321.1 825.4,320.1 823.9,319.1 822.2,318.1 820.6,317.1Z" fill="#5a0b3b"/>
<path d="M752.6,312.9 755.1,311.3 757.6,309.9 760.0,308.6 762.4,307.6 764.8,306.8 767.2,306.1 769.6,305.7 771.9,305.5 774.3,305.4 776.6,305.6 778.9,305.9 781.3,306.5 783.6,307.3 785.9,308.3 786.1,307.7 783.8,306.6 781.5,305.7 779.2,305.0 776.8,304.5 774.3,304.3 771.9,304.2 769.4,304.3 766.9,304.6 764.4,305.2 761.8,306.0 759.2,306.9 756.6,308.1 754.0,309.5 751.4,311.1Z" fill="#5a0b3b"/>
<path d="M760.5,330.8 763.1,329.2 765.6,327.7 768.2,326.4 770.9,325.2 773.6,324.2 776.3,323.3 779.1,322.6 782.0,322.1 784.8,321.7 787.8,321.5 790.7,321.5 793.8,321.6 796.8,321.9 800.0,322.3 800.0,321.7 796.9,321.2 793.8,320.8 790.8,320.6 787.7,320.5 784.8,320.6 781.8,320.9 778.9,321.4 776.0,322.0 773.1,322.8 770.3,323.7 767.5,324.8 764.8,326.1 762.1,327.6 759.5,329.2Z" fill="#5a0b3b"/>
<path d="M799.8,313.1 802.0,313.3 804.0,313.7 806.0,314.0 808.0,314.5 810.0,315.0 811.9,315.5 813.7,316.2 815.6,316.8 817.4,317.6 819.1,318.4 820.9,319.3 822.6,320.2 824.2,321.2 825.8,322.2 826.2,321.8 824.6,320.6 823.0,319.5 821.3,318.4 819.6,317.4 817.9,316.5 816.1,315.7 814.3,314.8 812.4,314.1 810.4,313.4 808.5,312.8 806.5,312.2 804.4,311.7 802.3,311.3 800.2,310.9Z" fill="#5a0b3b"/>
<path d="M747.0,352.2 747.6,354.7 748.1,357.1 748.5,359.5 748.8,361.7 749.1,363.9 749.3,366.0 749.4,368.0 749.4,369.9 749.3,371.8 749.1,373.6 748.9,375.3 748.6,376.9 748.2,378.4 747.7,379.9 748.3,380.1 748.9,378.6 749.4,377.1 749.8,375.4 750.1,373.7 750.4,371.9 750.6,370.0 750.6,368.0 750.7,365.9 750.6,363.8 750.4,361.5 750.2,359.2 749.9,356.8 749.5,354.3 749.0,351.8Z" fill="#5a0b3b"/>
<path d="M811.3,455.7 810.4,457.6 809.4,459.5 808.4,461.4 807.2,463.1 806.0,464.8 804.6,466.5 803.1,468.1 801.5,469.7 799.9,471.1 798.1,472.6 796.2,474.0 794.2,475.3 792.1,476.5 789.9,477.7 790.1,478.3 792.4,477.1 794.6,475.9 796.6,474.6 798.6,473.3 800.5,471.9 802.2,470.4 803.9,468.9 805.5,467.3 806.9,465.6 808.3,463.9 809.6,462.1 810.7,460.2 811.8,458.3 812.7,456.3Z" fill="#5a0b3b"/>
<path d="M836.5,322.8 837.3,322.2 838.0,321.9 838.8,321.6 839.5,321.4 840.3,321.4 841.0,321.4 841.8,321.6 842.6,321.8 843.4,322.3 844.3,322.8 845.1,323.4 846.0,324.2 846.9,325.1 847.8,326.2 848.2,325.8 847.4,324.7 846.6,323.7 845.7,322.8 844.9,322.0 844.0,321.4 843.1,320.8 842.2,320.4 841.3,320.1 840.3,320.0 839.4,320.0 838.4,320.1 837.4,320.3 836.5,320.7 835.5,321.2Z" fill="#5a0b3b"/>
<path d="M767.3,394.4 766.2,395.8 765.1,397.2 764.0,398.4 762.9,399.6 761.8,400.7 760.7,401.8 759.6,402.8 758.5,403.7 757.4,404.5 756.3,405.3 755.2,406.0 754.1,406.7 753.0,407.2 751.9,407.7 752.1,408.3 753.3,407.8 754.5,407.3 755.6,406.8 756.8,406.1 758.0,405.4 759.2,404.6 760.4,403.7 761.6,402.8 762.8,401.8 763.9,400.7 765.1,399.5 766.3,398.3 767.5,396.9 768.7,395.6Z" fill="#5a0b3b"/>
<defs><clipPath id="hc"><path d="M745,489 C760,491 772,488 780,484 C790,478 796,472 801,467 C808,460 813,453 816,446 C820,437 823,425 824,415 C825,405 830,398 836,392 C840,386 842,378 845,372 C852,368 860,366 866,360 C868,350 869,340 867,331 C860,326 850,323 843,326 C835,318 827,313 821,310 C810,303 800,299 792,299 C785,293 775,286 764,287 C755,291 750,298 745,303 Z"/></clipPath></defs>
<g clip-path="url(#hc)">
<path d="M795.1,438.2 795.6,437.9 796.1,437.6 796.5,437.2 796.9,436.7 797.2,436.2 797.5,435.6 797.7,435.0 797.9,434.3 798.1,433.6 798.2,432.8 798.3,432.0 798.4,431.1 798.5,430.2 798.5,429.2 798.2,429.2 798.0,430.1 797.9,431.1 797.7,431.9 797.4,432.7 797.2,433.3 796.9,434.0 796.6,434.5 796.3,435.0 796.0,435.4 795.7,435.7 795.4,435.9 795.1,436.0 794.8,436.1 794.4,436.2Z" fill="#5a0b3b"/>
<path d="M764.1,439.6 764.0,439.0 763.7,438.5 763.4,437.9 763.0,437.3 762.5,436.8 762.0,436.3 761.4,435.8 760.7,435.3 760.0,434.8 759.2,434.2 758.3,433.7 757.3,433.2 756.3,432.7 755.2,432.2 755.0,432.5 756.1,433.1 757.1,433.6 758.0,434.2 758.8,434.8 759.5,435.4 760.2,435.9 760.7,436.5 761.2,437.0 761.6,437.6 762.0,438.1 762.2,438.5 762.4,439.0 762.5,439.4 762.5,439.9Z" fill="#5a0b3b"/>
<path d="M824.9,436.9 824.6,437.1 824.3,437.5 824.1,437.9 823.9,438.3 823.7,438.8 823.6,439.4 823.4,440.0 823.3,440.7 823.1,441.4 822.9,442.2 822.8,443.1 822.6,444.1 822.5,445.1 822.3,446.2 822.6,446.3 822.9,445.2 823.1,444.2 823.4,443.3 823.7,442.4 823.9,441.6 824.2,440.9 824.4,440.3 824.7,439.8 824.9,439.3 825.1,439.0 825.4,438.7 825.6,438.5 825.7,438.4 825.9,438.4Z" fill="#5a0b3b"/>
<path d="M808.8,410.9 809.5,410.1 810.1,409.4 810.8,408.6 811.4,407.7 812.0,406.9 812.6,406.0 813.3,405.1 813.8,404.1 814.4,403.2 815.0,402.2 815.6,401.2 816.1,400.1 816.7,399.0 817.2,397.9 816.9,397.8 816.3,398.8 815.7,399.9 815.1,400.9 814.5,401.9 813.9,402.8 813.2,403.7 812.6,404.6 811.9,405.5 811.3,406.3 810.6,407.1 809.9,407.8 809.3,408.6 808.6,409.3 807.9,409.9Z" fill="#5a0b3b"/>
<path d="M752.0,482.6 752.3,483.4 752.6,484.2 752.7,484.9 752.9,485.5 752.9,486.2 753.0,486.7 752.9,487.3 752.8,487.8 752.6,488.3 752.4,488.7 752.1,489.1 751.7,489.5 751.3,489.9 750.8,490.2 750.9,490.5 751.5,490.2 752.0,489.9 752.5,489.5 752.9,489.1 753.2,488.6 753.5,488.0 753.7,487.5 753.8,486.8 753.9,486.2 753.9,485.4 753.8,484.7 753.7,483.9 753.5,483.0 753.2,482.2Z" fill="#5a0b3b"/>
<path d="M773.6,386.4 773.6,386.7 773.6,386.9 773.6,387.2 773.6,387.5 773.6,387.9 773.6,388.3 773.6,388.7 773.6,389.2 773.5,389.6 773.5,390.1 773.5,390.7 773.4,391.3 773.4,391.9 773.4,392.5 773.7,392.6 773.8,391.9 773.9,391.3 774.1,390.8 774.2,390.2 774.3,389.7 774.4,389.3 774.5,388.8 774.6,388.4 774.7,388.1 774.8,387.7 774.9,387.4 775.0,387.1 775.1,386.9 775.2,386.7Z" fill="#5a0b3b"/>
<path d="M763.1,370.0 764.4,370.2 765.6,370.4 766.8,370.7 768.0,370.9 769.2,371.1 770.3,371.3 771.3,371.5 772.3,371.6 773.3,371.8 774.2,372.0 775.1,372.1 776.0,372.2 776.8,372.4 777.6,372.5 777.6,372.2 776.9,372.0 776.1,371.8 775.2,371.6 774.4,371.4 773.4,371.1 772.5,370.9 771.5,370.7 770.4,370.4 769.4,370.1 768.2,369.9 767.1,369.6 765.9,369.3 764.6,369.0 763.3,368.7Z" fill="#5a0b3b"/>
<path d="M760.0,369.9 759.6,370.0 759.1,370.3 758.7,370.6 758.3,370.9 758.0,371.3 757.8,371.7 757.6,372.2 757.4,372.7 757.3,373.3 757.3,373.8 757.2,374.5 757.3,375.1 757.3,375.8 757.4,376.6 757.7,376.6 757.7,375.8 757.7,375.1 757.8,374.5 757.9,373.9 758.0,373.4 758.2,372.9 758.4,372.5 758.6,372.2 758.8,371.9 759.1,371.7 759.4,371.5 759.7,371.4 760.0,371.3 760.4,371.2Z" fill="#5a0b3b"/>
<path d="M801.2,413.9 800.6,414.3 800.0,414.7 799.4,415.1 798.8,415.4 798.2,415.6 797.6,415.8 797.0,416.0 796.3,416.1 795.7,416.2 795.0,416.3 794.3,416.3 793.6,416.2 792.9,416.1 792.2,416.0 792.1,416.2 792.8,416.5 793.5,416.7 794.3,416.8 795.0,416.9 795.7,416.9 796.4,416.9 797.1,416.9 797.8,416.8 798.5,416.6 799.2,416.4 799.9,416.2 800.6,415.9 801.3,415.5 802.0,415.1Z" fill="#5a0b3b"/>
<path d="M753.3,417.1 752.2,418.2 751.2,419.2 750.2,420.2 749.3,421.1 748.4,422.0 747.7,422.8 746.9,423.5 746.3,424.2 745.7,424.8 745.1,425.4 744.7,425.8 744.3,426.3 743.9,426.6 743.6,426.9 743.8,427.2 744.2,426.9 744.6,426.6 745.0,426.2 745.5,425.8 746.1,425.3 746.8,424.7 747.5,424.1 748.2,423.4 749.1,422.6 750.0,421.8 750.9,421.0 751.9,420.0 753.0,419.0 754.2,418.0Z" fill="#5a0b3b"/>
<path d="M791.7,412.4 791.5,413.0 791.3,413.7 791.1,414.4 790.8,415.2 790.5,416.1 790.2,417.0 789.8,417.9 789.4,419.0 789.0,420.0 788.6,421.2 788.1,422.4 787.5,423.6 787.0,424.9 786.4,426.3 786.7,426.4 787.3,425.1 788.0,423.8 788.6,422.6 789.2,421.5 789.7,420.4 790.3,419.3 790.8,418.3 791.2,417.4 791.6,416.5 792.0,415.7 792.4,414.9 792.7,414.2 793.0,413.5 793.3,412.9Z" fill="#5a0b3b"/>
<path d="M797.9,360.1 798.9,360.5 799.8,360.8 800.7,361.2 801.6,361.6 802.4,362.0 803.2,362.4 804.0,362.8 804.7,363.2 805.4,363.6 806.1,364.0 806.7,364.4 807.3,364.8 807.8,365.3 808.3,365.7 808.6,365.5 808.1,365.0 807.6,364.5 807.1,364.0 806.5,363.4 805.9,362.9 805.2,362.4 804.5,361.9 803.8,361.4 803.0,361.0 802.2,360.5 801.3,360.0 800.4,359.5 799.5,359.1 798.5,358.6Z" fill="#5a0b3b"/>
<path d="M790.3,389.3 791.0,388.0 791.7,386.8 792.4,385.6 793.2,384.6 793.9,383.6 794.7,382.7 795.4,381.8 796.2,381.1 796.9,380.4 797.7,379.8 798.4,379.2 799.2,378.8 800.0,378.4 800.8,378.1 800.7,377.8 799.8,378.0 799.0,378.3 798.1,378.7 797.3,379.2 796.4,379.8 795.6,380.4 794.7,381.2 793.9,382.0 793.1,382.8 792.2,383.8 791.4,384.9 790.5,386.0 789.7,387.2 788.9,388.5Z" fill="#5a0b3b"/>
<path d="M813.4,397.8 814.1,398.3 814.8,398.7 815.4,399.1 816.0,399.5 816.5,399.8 817.0,400.2 817.5,400.5 818.0,400.8 818.4,401.1 818.8,401.3 819.1,401.6 819.4,401.8 819.7,402.0 819.9,402.2 820.1,402.0 820.0,401.7 819.7,401.5 819.5,401.2 819.2,400.9 818.8,400.5 818.5,400.2 818.1,399.8 817.6,399.4 817.2,399.0 816.7,398.6 816.1,398.1 815.5,397.6 814.9,397.1 814.3,396.6Z" fill="#5a0b3b"/>
<path d="M799.0,454.9 800.0,455.0 801.0,455.0 802.0,454.9 803.0,454.8 804.0,454.7 805.0,454.5 806.0,454.2 807.0,453.9 808.0,453.5 809.0,453.1 810.1,452.7 811.1,452.2 812.1,451.6 813.2,451.0 813.1,450.7 812.0,451.2 810.9,451.6 809.8,452.0 808.8,452.3 807.7,452.6 806.7,452.8 805.7,453.0 804.8,453.1 803.8,453.2 802.9,453.2 801.9,453.2 801.0,453.1 800.2,453.0 799.3,452.8Z" fill="#5a0b3b"/>
<path d="M819.9,451.9 819.5,451.6 819.1,451.3 818.6,451.0 818.1,450.7 817.5,450.4 816.9,450.1 816.2,449.7 815.4,449.3 814.6,448.9 813.8,448.5 812.9,448.1 811.9,447.6 810.9,447.2 809.8,446.7 809.7,446.9 810.7,447.5 811.7,448.1 812.6,448.7 813.4,449.2 814.2,449.7 814.9,450.2 815.6,450.7 816.2,451.1 816.8,451.5 817.3,451.9 817.7,452.3 818.1,452.7 818.4,453.0 818.6,453.3Z" fill="#5a0b3b"/>
<path d="M766.0,366.9 766.0,367.5 766.0,368.0 766.0,368.6 766.0,369.3 765.9,370.0 765.9,370.8 765.8,371.6 765.7,372.5 765.6,373.4 765.5,374.3 765.4,375.4 765.3,376.4 765.2,377.5 765.0,378.7 765.3,378.7 765.6,377.6 765.8,376.5 766.0,375.4 766.2,374.4 766.3,373.5 766.5,372.6 766.6,371.7 766.8,370.9 766.9,370.1 767.0,369.4 767.1,368.7 767.2,368.1 767.3,367.5 767.4,367.0Z" fill="#5a0b3b"/>
<path d="M825.8,365.2 826.8,365.3 827.8,365.2 828.8,365.1 829.8,364.9 830.8,364.6 831.7,364.2 832.6,363.7 833.5,363.2 834.3,362.5 835.2,361.8 836.0,361.1 836.8,360.2 837.5,359.3 838.3,358.3 838.1,358.1 837.2,359.0 836.4,359.8 835.5,360.6 834.7,361.2 833.8,361.8 833.0,362.3 832.1,362.7 831.2,363.1 830.4,363.3 829.5,363.5 828.6,363.6 827.8,363.6 826.9,363.5 826.0,363.4Z" fill="#5a0b3b"/>
<path d="M748.4,476.5 747.8,476.7 747.1,477.0 746.4,477.3 745.7,477.7 744.9,478.2 744.0,478.7 743.1,479.2 742.2,479.9 741.2,480.5 740.2,481.3 739.1,482.1 737.9,482.9 736.7,483.8 735.5,484.8 735.7,485.1 736.9,484.1 738.2,483.3 739.3,482.5 740.5,481.7 741.5,481.1 742.6,480.4 743.5,479.9 744.4,479.4 745.3,479.0 746.1,478.6 746.8,478.3 747.5,478.0 748.1,477.8 748.7,477.7Z" fill="#5a0b3b"/>
<path d="M750.6,456.1 750.3,455.5 750.1,454.9 749.9,454.3 749.8,453.7 749.7,453.2 749.7,452.6 749.8,452.1 749.9,451.6 750.1,451.1 750.3,450.6 750.6,450.0 751.0,449.6 751.4,449.1 751.9,448.6 751.7,448.4 751.1,448.7 750.6,449.2 750.1,449.6 749.6,450.1 749.3,450.6 748.9,451.2 748.7,451.8 748.5,452.4 748.4,453.1 748.3,453.8 748.3,454.5 748.4,455.3 748.6,456.1 748.8,456.8Z" fill="#5a0b3b"/>
<path d="M809.0,468.3 810.3,467.5 811.5,466.9 812.7,466.3 813.8,465.8 814.9,465.4 815.9,465.1 816.8,464.8 817.7,464.6 818.5,464.5 819.3,464.5 820.0,464.5 820.7,464.7 821.4,464.9 821.9,465.2 822.1,464.9 821.5,464.5 820.8,464.3 820.1,464.1 819.3,463.9 818.5,463.9 817.6,463.9 816.6,464.1 815.6,464.3 814.6,464.6 813.5,464.9 812.3,465.4 811.1,465.9 809.8,466.5 808.5,467.2Z" fill="#5a0b3b"/>
<path d="M818.2,434.7 817.8,435.1 817.4,435.5 817.1,435.9 816.7,436.3 816.4,436.8 816.2,437.3 815.9,437.8 815.7,438.3 815.6,438.9 815.4,439.4 815.3,440.0 815.3,440.6 815.2,441.2 815.2,441.9 815.5,441.9 815.6,441.3 815.7,440.7 815.9,440.1 816.1,439.6 816.3,439.1 816.5,438.7 816.8,438.2 817.1,437.9 817.4,437.5 817.7,437.2 818.0,436.9 818.4,436.6 818.8,436.4 819.2,436.1Z" fill="#5a0b3b"/>
<path d="M785.5,381.8 785.5,381.7 785.3,381.8 785.3,381.7 785.5,381.7 785.8,381.8 786.2,381.9 786.7,382.1 787.2,382.3 787.8,382.7 788.5,383.1 789.2,383.6 790.0,384.1 790.9,384.7 791.8,385.4 792.0,385.1 791.1,384.4 790.3,383.7 789.5,383.1 788.9,382.5 788.2,382.0 787.7,381.6 787.1,381.3 786.7,380.9 786.2,380.7 785.8,380.5 785.4,380.4 785.0,380.4 784.5,380.6 784.2,380.8Z" fill="#5a0b3b"/>
<path d="M759.1,458.5 758.5,458.1 757.8,457.6 757.1,457.2 756.4,456.9 755.7,456.6 755.0,456.3 754.2,456.1 753.5,455.9 752.7,455.8 751.9,455.8 751.1,455.7 750.2,455.7 749.4,455.8 748.5,455.9 748.5,456.2 749.4,456.2 750.2,456.2 751.0,456.2 751.8,456.3 752.6,456.4 753.3,456.6 754.0,456.8 754.7,457.1 755.4,457.4 756.0,457.7 756.6,458.1 757.2,458.5 757.7,459.0 758.3,459.5Z" fill="#5a0b3b"/>
<path d="M754.0,398.5 753.4,399.3 752.9,400.1 752.3,400.8 751.9,401.5 751.4,402.1 751.0,402.7 750.6,403.2 750.3,403.6 750.0,404.0 749.7,404.4 749.4,404.7 749.2,404.9 749.0,405.1 748.9,405.2 749.0,405.5 749.3,405.4 749.5,405.2 749.8,405.0 750.1,404.8 750.4,404.5 750.8,404.1 751.2,403.7 751.7,403.2 752.1,402.7 752.6,402.1 753.2,401.4 753.7,400.7 754.3,400.0 754.9,399.2Z" fill="#5a0b3b"/>
<path d="M784.4,404.3 783.9,404.8 783.4,405.4 783.0,406.0 782.7,406.8 782.4,407.6 782.2,408.4 782.0,409.4 781.9,410.4 781.8,411.4 781.7,412.5 781.7,413.8 781.8,415.0 781.9,416.4 782.0,417.8 782.3,417.8 782.3,416.3 782.2,415.0 782.3,413.8 782.3,412.6 782.4,411.5 782.6,410.5 782.8,409.5 783.0,408.7 783.3,407.9 783.6,407.2 784.0,406.6 784.4,406.1 784.8,405.7 785.3,405.3Z" fill="#5a0b3b"/>
<path d="M827.6,400.4 828.6,401.6 829.7,402.8 830.6,403.9 831.6,404.9 832.5,405.8 833.4,406.6 834.3,407.4 835.2,408.1 836.0,408.7 836.8,409.2 837.6,409.7 838.4,410.1 839.1,410.4 839.8,410.6 839.9,410.4 839.3,410.0 838.6,409.7 837.9,409.2 837.2,408.7 836.5,408.1 835.7,407.4 834.9,406.7 834.1,405.9 833.3,405.0 832.5,404.1 831.6,403.0 830.7,401.9 829.8,400.7 828.8,399.5Z" fill="#5a0b3b"/>
<path d="M813.6,360.4 813.8,361.7 813.9,363.0 814.0,364.2 814.2,365.3 814.3,366.4 814.4,367.5 814.6,368.5 814.7,369.5 814.8,370.4 814.9,371.3 815.0,372.1 815.1,372.9 815.3,373.6 815.4,374.3 815.7,374.3 815.6,373.6 815.6,372.8 815.6,372.1 815.6,371.2 815.6,370.3 815.5,369.4 815.5,368.5 815.5,367.4 815.4,366.4 815.4,365.2 815.3,364.1 815.3,362.9 815.3,361.6 815.2,360.3Z" fill="#5a0b3b"/>
<path d="M819.8,364.3 819.2,364.3 818.6,364.3 818.0,364.3 817.5,364.2 817.0,364.0 816.6,363.8 816.2,363.5 815.8,363.2 815.5,362.7 815.2,362.3 814.9,361.7 814.7,361.1 814.5,360.3 814.4,359.5 814.1,359.6 814.1,360.4 814.2,361.2 814.4,361.9 814.5,362.5 814.8,363.1 815.1,363.7 815.5,364.2 816.0,364.6 816.5,365.0 817.1,365.3 817.7,365.6 818.4,365.8 819.1,365.9 819.9,365.9Z" fill="#5a0b3b"/>
<path d="M815.6,391.9 815.5,390.6 815.4,389.2 815.3,388.0 815.2,386.7 815.1,385.5 814.9,384.4 814.7,383.3 814.5,382.3 814.3,381.2 814.1,380.3 813.8,379.4 813.5,378.5 813.2,377.7 812.9,376.9 812.6,377.0 812.8,377.8 813.0,378.6 813.2,379.5 813.3,380.4 813.5,381.4 813.6,382.4 813.7,383.4 813.7,384.5 813.8,385.6 813.8,386.8 813.8,388.0 813.8,389.3 813.8,390.6 813.7,391.9Z" fill="#5a0b3b"/>
<path d="M825.7,458.5 824.6,459.1 823.6,459.6 822.6,460.1 821.8,460.5 821.0,460.9 820.2,461.3 819.5,461.6 818.9,461.8 818.4,462.0 817.9,462.2 817.5,462.3 817.1,462.4 816.8,462.5 816.6,462.5 816.6,462.7 816.8,462.8 817.2,462.9 817.6,462.8 818.0,462.8 818.6,462.7 819.2,462.5 819.8,462.3 820.5,462.1 821.3,461.8 822.2,461.5 823.1,461.1 824.1,460.7 825.2,460.3 826.3,459.8Z" fill="#5a0b3b"/>
<path d="M765.4,359.9 765.8,360.1 766.1,360.4 766.4,360.7 766.8,361.0 767.2,361.5 767.5,361.9 767.9,362.5 768.3,363.1 768.7,363.7 769.1,364.4 769.6,365.2 770.0,366.0 770.4,366.9 770.8,367.8 771.1,367.7 770.8,366.7 770.4,365.8 770.1,364.9 769.8,364.1 769.4,363.4 769.1,362.6 768.8,362.0 768.4,361.4 768.1,360.8 767.8,360.3 767.4,359.8 767.1,359.4 766.7,359.0 766.4,358.7Z" fill="#5a0b3b"/>
<path d="M809.5,368.2 810.5,369.2 811.4,370.1 812.3,371.0 813.1,371.8 813.8,372.6 814.5,373.2 815.1,373.8 815.6,374.4 816.1,374.8 816.5,375.2 816.8,375.5 817.1,375.8 817.3,376.0 817.4,376.1 817.7,376.0 817.6,375.8 817.5,375.5 817.3,375.2 817.0,374.8 816.7,374.3 816.3,373.8 815.9,373.1 815.3,372.5 814.8,371.7 814.1,370.9 813.4,370.0 812.6,369.1 811.7,368.1 810.8,367.0Z" fill="#5a0b3b"/>
<path d="M755.7,469.5 756.7,469.2 757.8,469.0 758.9,468.9 760.0,468.7 761.0,468.5 762.1,468.4 763.1,468.3 764.2,468.2 765.3,468.1 766.3,468.1 767.4,468.0 768.4,468.0 769.4,468.0 770.5,468.1 770.5,467.8 769.5,467.6 768.4,467.5 767.4,467.4 766.3,467.4 765.3,467.3 764.2,467.3 763.1,467.3 762.0,467.3 760.9,467.3 759.8,467.3 758.7,467.4 757.6,467.5 756.5,467.6 755.4,467.7Z" fill="#5a0b3b"/>
<path d="M812.8,483.4 811.8,483.5 810.8,483.6 809.9,483.7 809.0,483.9 808.1,484.0 807.3,484.0 806.5,484.1 805.7,484.2 805.0,484.3 804.3,484.4 803.6,484.4 803.0,484.5 802.4,484.5 801.8,484.6 801.8,484.9 802.3,484.9 803.0,485.0 803.6,485.0 804.3,485.1 805.0,485.1 805.8,485.1 806.6,485.2 807.4,485.2 808.2,485.2 809.1,485.2 810.0,485.2 810.9,485.2 811.9,485.2 812.9,485.1Z" fill="#5a0b3b"/>
<path d="M772.1,415.0 772.3,414.5 772.5,414.1 772.7,413.7 773.0,413.3 773.3,412.9 773.7,412.5 774.1,412.2 774.6,411.9 775.1,411.6 775.7,411.3 776.3,411.0 777.0,410.8 777.7,410.6 778.4,410.5 778.4,410.2 777.6,410.2 776.9,410.3 776.1,410.4 775.4,410.5 774.8,410.7 774.1,410.9 773.5,411.2 773.0,411.5 772.4,411.8 771.9,412.2 771.4,412.6 771.0,413.1 770.6,413.6 770.3,414.1Z" fill="#5a0b3b"/>
<path d="M773.3,463.2 774.5,462.4 775.7,461.6 776.9,460.9 778.0,460.2 779.0,459.6 780.0,459.1 780.9,458.5 781.8,458.1 782.7,457.6 783.5,457.3 784.2,457.0 784.9,456.7 785.6,456.5 786.2,456.3 786.1,456.0 785.5,456.1 784.8,456.2 784.0,456.4 783.2,456.6 782.4,456.9 781.5,457.3 780.5,457.7 779.5,458.1 778.5,458.6 777.4,459.1 776.2,459.7 775.0,460.4 773.7,461.1 772.4,461.8Z" fill="#5a0b3b"/>
<path d="M816.1,386.7 815.7,385.9 815.2,385.1 814.6,384.3 813.9,383.6 813.2,382.9 812.4,382.3 811.6,381.6 810.7,381.0 809.7,380.5 808.6,379.9 807.5,379.4 806.3,378.9 805.1,378.5 803.7,378.0 803.6,378.3 804.9,378.8 806.1,379.3 807.3,379.9 808.3,380.5 809.3,381.1 810.3,381.7 811.1,382.3 811.9,382.9 812.5,383.6 813.2,384.3 813.7,385.0 814.2,385.7 814.6,386.5 814.9,387.2Z" fill="#5a0b3b"/>
<path d="M750.6,395.3 750.4,395.3 750.1,395.3 749.8,395.3 749.4,395.2 748.9,395.2 748.4,395.1 747.8,395.0 747.1,394.8 746.4,394.7 745.7,394.5 744.9,394.3 744.0,394.0 743.1,393.7 742.2,393.5 742.1,393.7 743.0,394.1 743.9,394.5 744.7,394.8 745.5,395.2 746.2,395.5 746.9,395.7 747.5,396.0 748.0,396.2 748.6,396.4 749.0,396.6 749.4,396.7 749.8,396.9 750.2,397.0 750.5,397.1Z" fill="#5a0b3b"/>
<path d="M816.6,397.2 816.0,396.2 815.3,395.4 814.7,394.6 814.1,393.8 813.6,393.1 813.1,392.5 812.6,392.0 812.2,391.5 811.8,391.1 811.4,390.7 811.1,390.4 810.8,390.2 810.5,390.0 810.3,389.9 810.1,390.1 810.2,390.3 810.4,390.5 810.6,390.8 810.8,391.2 811.1,391.6 811.4,392.1 811.7,392.6 812.1,393.3 812.5,393.9 812.9,394.7 813.4,395.5 813.9,396.3 814.4,397.2 815.0,398.2Z" fill="#5a0b3b"/>
<path d="M830.9,300.5 830.0,300.7 829.1,300.8 828.2,300.9 827.3,300.9 826.4,300.8 825.6,300.8 824.8,300.6 823.9,300.5 823.1,300.2 822.4,300.0 821.6,299.6 820.8,299.2 820.1,298.8 819.4,298.3 819.2,298.5 819.8,299.1 820.5,299.7 821.3,300.2 822.0,300.7 822.8,301.1 823.6,301.4 824.5,301.8 825.3,302.0 826.2,302.2 827.2,302.4 828.1,302.5 829.1,302.6 830.1,302.6 831.1,302.6Z" fill="#5a0b3b"/>
<path d="M795.7,316.7 794.7,316.9 793.8,317.2 793.0,317.5 792.2,317.8 791.5,318.1 790.8,318.3 790.2,318.6 789.6,318.8 789.2,319.1 788.7,319.3 788.4,319.5 788.0,319.8 787.8,320.0 787.6,320.2 787.8,320.4 788.0,320.4 788.3,320.3 788.7,320.2 789.0,320.1 789.5,320.0 790.0,319.9 790.6,319.8 791.2,319.7 791.9,319.6 792.6,319.5 793.4,319.4 794.3,319.2 795.2,319.1 796.2,318.9Z" fill="#5a0b3b"/>
<path d="M811.2,312.0 810.3,311.3 809.3,310.7 808.5,310.0 807.6,309.5 806.7,308.9 805.9,308.4 805.1,308.0 804.3,307.6 803.6,307.2 802.8,306.9 802.1,306.6 801.4,306.4 800.8,306.2 800.1,306.0 800.0,306.3 800.6,306.6 801.2,306.9 801.8,307.3 802.4,307.7 803.0,308.2 803.7,308.7 804.3,309.2 805.0,309.8 805.7,310.4 806.4,311.0 807.2,311.7 807.9,312.4 808.7,313.1 809.5,313.9Z" fill="#5a0b3b"/>
<path d="M815.0,307.3 815.5,306.8 816.1,306.3 816.7,305.9 817.3,305.4 818.0,305.0 818.7,304.6 819.4,304.3 820.2,303.9 820.9,303.6 821.7,303.3 822.6,303.0 823.4,302.7 824.3,302.5 825.2,302.3 825.2,302.0 824.2,302.1 823.3,302.2 822.4,302.4 821.5,302.5 820.7,302.7 819.8,303.0 819.0,303.2 818.2,303.5 817.4,303.8 816.6,304.2 815.9,304.5 815.1,304.9 814.4,305.4 813.8,305.8Z" fill="#5a0b3b"/>
<path d="M803.3,314.4 802.4,314.2 801.5,314.1 800.5,313.9 799.6,313.8 798.6,313.7 797.7,313.7 796.7,313.6 795.7,313.6 794.7,313.6 793.7,313.6 792.7,313.7 791.7,313.8 790.7,313.8 789.7,314.0 789.7,314.3 790.7,314.3 791.7,314.4 792.7,314.4 793.7,314.6 794.7,314.7 795.6,314.8 796.5,315.0 797.5,315.2 798.4,315.4 799.2,315.6 800.1,315.9 801.0,316.2 801.8,316.5 802.7,316.8Z" fill="#5a0b3b"/>
<path d="M833.7,331.8 832.5,331.7 831.3,331.6 830.1,331.6 829.0,331.7 827.9,331.7 826.8,331.8 825.8,332.0 824.7,332.2 823.8,332.4 822.8,332.7 821.9,333.0 821.0,333.4 820.1,333.8 819.3,334.2 819.4,334.5 820.3,334.2 821.2,333.9 822.1,333.7 823.0,333.5 823.9,333.4 824.9,333.3 825.9,333.2 826.9,333.2 827.9,333.2 829.0,333.3 830.0,333.4 831.1,333.5 832.2,333.7 833.4,333.9Z" fill="#5a0b3b"/>
<path d="M768.4,330.9 767.2,330.5 766.0,330.1 764.8,329.8 763.6,329.5 762.6,329.2 761.5,328.9 760.5,328.7 759.5,328.4 758.5,328.2 757.6,328.0 756.8,327.8 756.0,327.7 755.2,327.5 754.4,327.4 754.3,327.7 755.1,328.0 755.8,328.2 756.6,328.5 757.4,328.8 758.3,329.2 759.1,329.5 760.1,329.9 761.0,330.3 762.0,330.7 763.1,331.1 764.2,331.6 765.3,332.1 766.4,332.5 767.6,333.1Z" fill="#5a0b3b"/>
<path d="M837.0,314.9 835.6,314.7 834.2,314.5 832.8,314.2 831.5,314.0 830.2,313.7 829.0,313.4 827.7,313.1 826.6,312.8 825.4,312.4 824.4,312.0 823.3,311.6 822.3,311.2 821.3,310.8 820.3,310.3 820.2,310.6 821.1,311.1 822.1,311.7 823.1,312.2 824.1,312.7 825.2,313.2 826.3,313.6 827.4,314.0 828.7,314.5 829.9,314.9 831.2,315.2 832.5,315.6 833.9,315.9 835.3,316.2 836.7,316.5Z" fill="#5a0b3b"/>
<path d="M799.7,338.1 800.5,338.6 801.4,339.1 802.2,339.6 803.1,340.0 804.0,340.5 804.8,340.9 805.7,341.3 806.6,341.7 807.5,342.1 808.4,342.4 809.4,342.8 810.3,343.1 811.3,343.4 812.2,343.7 812.3,343.4 811.4,343.0 810.5,342.6 809.7,342.1 808.8,341.7 808.0,341.2 807.1,340.7 806.3,340.2 805.5,339.7 804.8,339.1 804.0,338.6 803.2,338.0 802.5,337.5 801.8,336.9 801.1,336.2Z" fill="#5a0b3b"/>
<path d="M804.7,336.6 805.9,337.1 807.2,337.5 808.4,337.8 809.6,338.2 810.7,338.5 811.7,338.8 812.8,339.0 813.7,339.3 814.7,339.4 815.5,339.6 816.4,339.7 817.2,339.9 817.9,339.9 818.6,340.0 818.6,339.7 818.0,339.5 817.3,339.3 816.5,339.1 815.7,338.9 814.9,338.6 814.0,338.3 813.1,337.9 812.1,337.6 811.1,337.2 810.1,336.8 809.0,336.3 807.8,335.8 806.6,335.3 805.4,334.8Z" fill="#5a0b3b"/>
<path d="M821.8,319.2 823.3,319.8 824.7,320.3 826.1,320.8 827.4,321.3 828.7,321.8 829.9,322.2 831.1,322.7 832.2,323.0 833.2,323.4 834.3,323.8 835.2,324.1 836.2,324.4 837.0,324.7 837.8,324.9 837.9,324.6 837.2,324.3 836.4,323.9 835.5,323.5 834.6,323.0 833.6,322.5 832.6,322.1 831.5,321.5 830.4,321.0 829.2,320.5 828.0,319.9 826.7,319.3 825.4,318.6 824.1,318.0 822.6,317.3Z" fill="#5a0b3b"/>
<path d="M776.0,331.1 775.6,331.1 775.2,331.1 774.7,331.1 774.2,331.0 773.7,330.9 773.1,330.7 772.5,330.4 771.8,330.1 771.1,329.8 770.4,329.4 769.6,328.9 768.8,328.4 767.9,327.9 767.1,327.3 766.9,327.5 767.7,328.2 768.5,328.8 769.2,329.4 770.0,330.0 770.7,330.5 771.3,331.0 772.0,331.4 772.6,331.7 773.2,332.0 773.8,332.3 774.4,332.5 774.9,332.7 775.5,332.8 776.0,332.9Z" fill="#5a0b3b"/>
<path d="M762.8,306.5 763.7,306.1 764.6,305.8 765.5,305.6 766.3,305.4 767.1,305.2 767.9,305.1 768.6,305.1 769.3,305.1 769.9,305.2 770.6,305.3 771.2,305.5 771.8,305.7 772.3,306.0 772.9,306.4 773.1,306.1 772.6,305.7 772.0,305.3 771.4,304.9 770.8,304.6 770.1,304.4 769.4,304.2 768.6,304.1 767.8,304.0 767.0,304.0 766.1,304.0 765.2,304.1 764.2,304.3 763.2,304.5 762.2,304.8Z" fill="#5a0b3b"/>
<path d="M799.2,338.7 799.9,338.7 800.7,338.6 801.4,338.6 802.2,338.5 803.0,338.5 803.8,338.4 804.6,338.4 805.5,338.3 806.3,338.3 807.2,338.2 808.1,338.2 809.0,338.1 809.9,338.0 810.8,338.0 810.8,337.7 809.9,337.6 809.0,337.6 808.1,337.6 807.2,337.6 806.3,337.5 805.5,337.5 804.6,337.4 803.8,337.4 803.0,337.4 802.2,337.3 801.5,337.3 800.7,337.2 800.0,337.2 799.2,337.1Z" fill="#5a0b3b"/>
</g>
<rect x="743" y="300" width="3" height="190" fill="#5a0b3b"/>
</svg><!--/IMG-->
<div class="abs" style="left:338px;top:218px;width:1.2px;height:17px;background:#9aa0a6"></div>
<div class="body">This area has to do with words,<br>spoken or written. People with high<br>verbal-linguistic intelligence display<br>facility with words and languages.<br>They are typically good at reading,<br>writing, telling stories and<br>memorizing words along with dates.<br><br>They tend to learn best by reading,<br>taking notes, listening to lectures,<br>and discussion and debate. Those<br>with verbal-linguistic intelligence<br>learn foreign languages very easily<br>they have high verbal memory and<br>recall, and an ability to understand<br>and manipulate syntax and<br>structure.</div>
<div class="body" style="left:908.5px;top:256px">a</div>
<div class="body" style="left:908.5px;top:457px">as</div>

</body></html>
